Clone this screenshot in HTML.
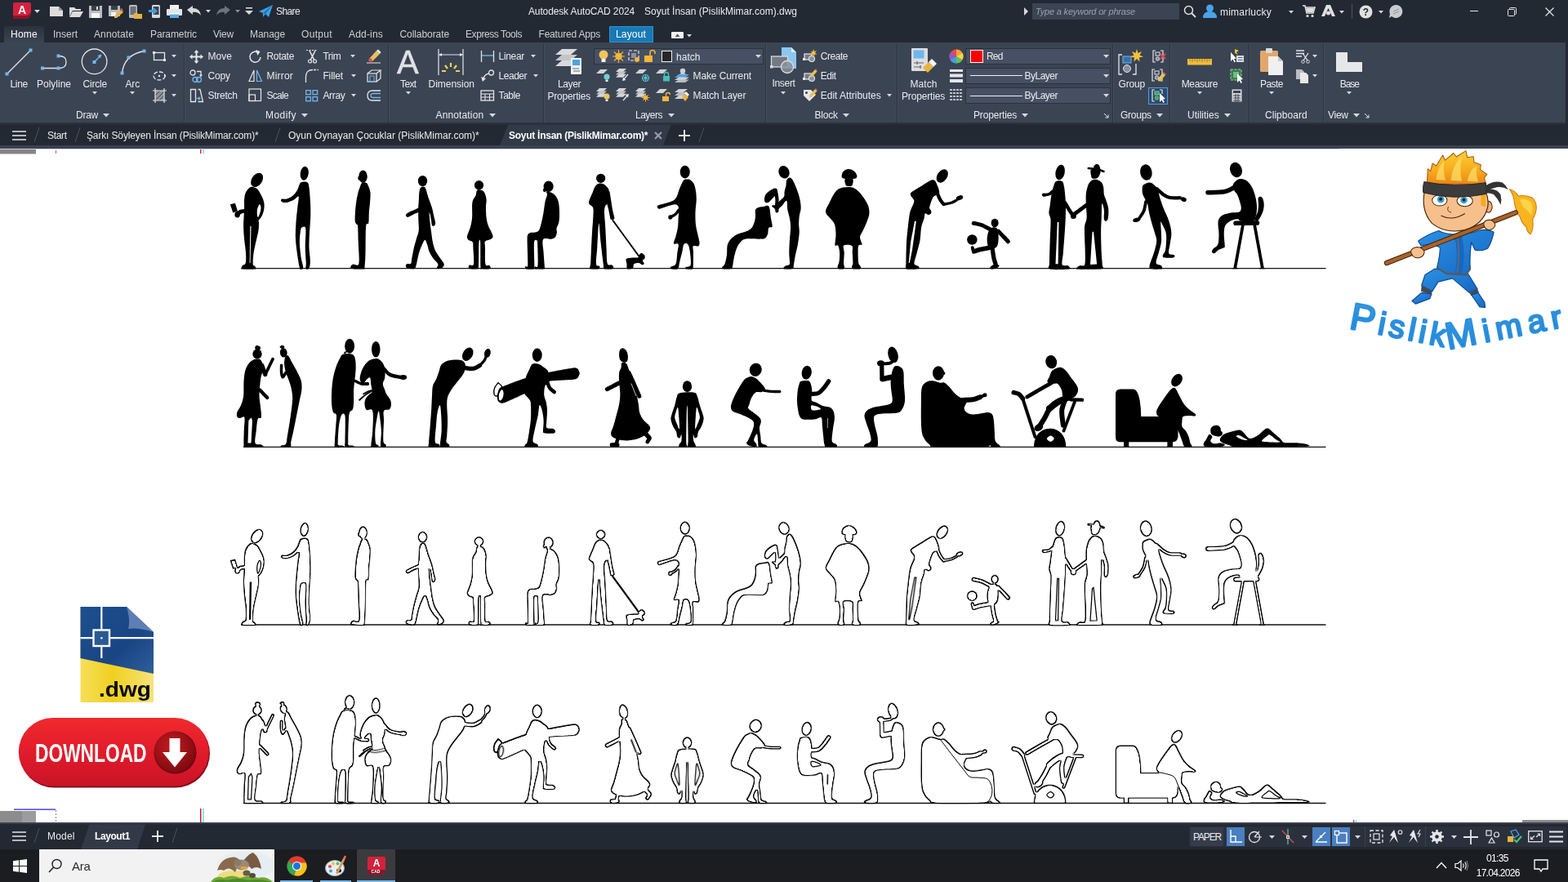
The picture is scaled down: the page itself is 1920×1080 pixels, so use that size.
<!DOCTYPE html>
<html><head><meta charset="utf-8"><title>Autodesk AutoCAD 2024 - Soyut İnsan (PislikMimar.com).dwg</title>
<style>
html,body{margin:0;padding:0;}
body{width:1920px;height:1080px;overflow:hidden;position:relative;background:#ffffff;font-family:"Liberation Sans",sans-serif;}
.t{position:absolute;white-space:nowrap;}
.r{position:absolute;}
.i{position:absolute;overflow:visible;}
</style></head><body>
<svg class="i" style="left:0;top:0" width="1920" height="1080" viewBox="0 0 1920 1080">
<defs><filter id="er" x="-5%" y="-5%" width="110%" height="110%"><feComponentTransfer><feFuncA type="linear" slope="2.2" intercept="-0.6"/></feComponentTransfer><feMorphology operator="erode" radius="10.5"/></filter></defs>
<path d="M295.5 328.7H1623.5" stroke="#111" stroke-width="1.3"/>
<path d="M298 547.3H1623.5" stroke="#111" stroke-width="1.3"/>
<path d="M295.5 765H1623.5" stroke="#111" stroke-width="1.3"/>
<path d="M298 983.5H1623.5" stroke="#111" stroke-width="1.3"/>
<g transform="translate(270 197) scale(0.125)"><g fill="#000" stroke="none"><ellipse cx="357" cy="187" rx="51" ry="76" transform="rotate(34 357 187)" /><path d="M298 255C284.2 258.3 271.7 272.5 262 285C252.3 297.5 245 310.8 240 330C235 349.2 233.2 376.7 232 400C230.8 423.3 233.7 443.3 233 470C232.3 496.7 229.3 531.7 228 560C226.7 588.3 224.3 606.7 225 640C225.7 673.3 228.2 716.7 232 760C235.8 803.3 245.7 860 248 900C250.3 940 251.5 979.2 246 1000C240.5 1020.8 221.8 1017.5 215 1025C208.2 1032.5 205 1039.2 205 1045C205 1050.8 193.3 1057.5 215 1060C236.7 1062.5 313.3 1062.5 335 1060C356.7 1057.5 345 1050 345 1045C345 1040 339.5 1035.8 335 1030C330.5 1024.2 319.7 1031.7 318 1010C316.3 988.3 319.7 938.3 325 900C330.3 861.7 342.2 816.7 350 780C357.8 743.3 367.7 710 372 680C376.3 650 376 615.8 376 600C376 584.2 367.2 595 372 585C376.8 575 396.2 557.5 405 540C413.8 522.5 421.2 500 425 480C428.8 460 429.7 438.3 428 420C426.3 401.7 421.3 386.7 415 370C408.7 353.3 397.5 334.2 390 320C382.5 305.8 377.5 294.2 370 285C362.5 275.8 357 270 345 265C333 260 311.8 251.7 298 255Z" /><path d="M240 490C233.3 491.2 211.3 492.8 200 497C188.7 501.2 176.7 512 172 515" fill="none" stroke="#000" stroke-width="40" stroke-linecap="round" stroke-linejoin="round"/><ellipse cx="165" cy="525" rx="26" ry="30" /><path d="M95 425L143 413L168 492L122 507Z" /><ellipse cx="822" cy="122" rx="40" ry="68" transform="rotate(8 822 122)" /><path d="M790 210C803.3 205 837 201.7 850 210C863 218.3 863 228.3 868 260C873 291.7 877.7 351.7 880 400C882.3 448.3 883.3 500 882 550C880.7 600 874.3 650 872 700C869.7 750 867 806.7 868 850C869 893.3 876.8 930 878 960C879.2 990 878.8 1013 875 1030C871.2 1047 861.7 1058.7 855 1062C848.3 1065.3 837.8 1060.3 835 1050C832.2 1039.7 838.8 1033.3 838 1000C837.2 966.7 830.5 900 830 850C829.5 800 835 733.3 835 700C835 666.7 835.8 658.3 830 650C824.2 641.7 807.5 645 800 650C792.5 655 789.2 655 785 680C780.8 705 774.2 755 775 800C775.8 845 784.2 910 790 950C795.8 990 809.2 1021.3 810 1040C810.8 1058.7 800.8 1061.2 795 1062C789.2 1062.8 782.5 1072 775 1045C767.5 1018 756.7 949.2 750 900C743.3 850.8 736.7 800 735 750C733.3 700 736.7 650 740 600C743.3 550 750.8 491.7 755 450C759.2 408.3 770.8 361.7 765 350C759.2 338.3 737.5 370.8 720 380C702.5 389.2 678.3 400.8 660 405C641.7 409.2 621.3 407.8 610 405C598.7 402.2 592.8 393.5 592 388C591.2 382.5 595.3 374.7 605 372C614.7 369.3 632.5 377.3 650 372C667.5 366.7 693.3 353.7 710 340C726.7 326.3 740 306.7 750 290C760 273.3 763.3 253.3 770 240C776.7 226.7 776.7 215 790 210Z" /><ellipse cx="1396" cy="153" rx="42" ry="62" /><path d="M1352 150C1348.2 149.5 1346.3 165.3 1347 172C1347.7 178.7 1352.2 189.5 1356 190C1359.8 190.5 1370.7 181.7 1370 175C1369.3 168.3 1355.8 150.5 1352 150Z" /><path d="M1385 215C1374.2 222.5 1371.2 244.2 1365 260C1358.8 275.8 1353.8 286.7 1348 310C1342.2 333.3 1334.7 368.3 1330 400C1325.3 431.7 1322 468.3 1320 500C1318 531.7 1315.5 569.2 1318 590C1320.5 610.8 1330.5 616.7 1335 625C1339.5 633.3 1342.5 610.8 1345 640C1347.5 669.2 1348.3 739.2 1350 800C1351.7 860.8 1363.3 969.7 1355 1005C1346.7 1040.3 1312.8 1007.8 1300 1012C1287.2 1016.2 1280.5 1022.8 1278 1030C1275.5 1037.2 1264.7 1050 1285 1055C1305.3 1060 1378.8 1062.5 1400 1060C1421.2 1057.5 1408.7 1066.7 1412 1040C1415.3 1013.3 1417.8 966.7 1420 900C1422.2 833.3 1420 688.3 1425 640C1430 591.7 1445 633.3 1450 610C1455 586.7 1452.5 535 1455 500C1457.5 465 1462.8 431.7 1465 400C1467.2 368.3 1470.5 335 1468 310C1465.5 285 1456.3 265.8 1450 250C1443.7 234.2 1440.8 220.8 1430 215C1419.2 209.2 1395.8 207.5 1385 215Z" /></g><path d="M385 425C389 427.5 395.2 442.5 396 455C396.8 467.5 394.7 483.8 390 500C385.3 516.2 373.3 549.5 368 552C362.7 554.5 359.2 528.7 358 515C356.8 501.3 358.7 482.5 361 470C363.3 457.5 368 447.5 372 440C376 432.5 381 422.5 385 425Z" fill="#fff"/><path d="M291 640L300 640L292 1000L285 1000Z" fill="#fff"/></g>
<g transform="translate(270 633.2) scale(0.125)"><g fill="#000" stroke="#000" stroke-width="3" stroke-linejoin="round"><ellipse cx="357" cy="187" rx="51" ry="76" transform="rotate(34 357 187)" /><path d="M298 255C284.2 258.3 271.7 272.5 262 285C252.3 297.5 245 310.8 240 330C235 349.2 233.2 376.7 232 400C230.8 423.3 233.7 443.3 233 470C232.3 496.7 229.3 531.7 228 560C226.7 588.3 224.3 606.7 225 640C225.7 673.3 228.2 716.7 232 760C235.8 803.3 245.7 860 248 900C250.3 940 251.5 979.2 246 1000C240.5 1020.8 221.8 1017.5 215 1025C208.2 1032.5 205 1039.2 205 1045C205 1050.8 193.3 1057.5 215 1060C236.7 1062.5 313.3 1062.5 335 1060C356.7 1057.5 345 1050 345 1045C345 1040 339.5 1035.8 335 1030C330.5 1024.2 319.7 1031.7 318 1010C316.3 988.3 319.7 938.3 325 900C330.3 861.7 342.2 816.7 350 780C357.8 743.3 367.7 710 372 680C376.3 650 376 615.8 376 600C376 584.2 367.2 595 372 585C376.8 575 396.2 557.5 405 540C413.8 522.5 421.2 500 425 480C428.8 460 429.7 438.3 428 420C426.3 401.7 421.3 386.7 415 370C408.7 353.3 397.5 334.2 390 320C382.5 305.8 377.5 294.2 370 285C362.5 275.8 357 270 345 265C333 260 311.8 251.7 298 255Z" /><path d="M240 490C233.3 491.2 211.3 492.8 200 497C188.7 501.2 176.7 512 172 515" fill="none" stroke="#000" stroke-width="43" stroke-linecap="round" stroke-linejoin="round"/><ellipse cx="165" cy="525" rx="26" ry="30" /><path d="M95 425L143 413L168 492L122 507Z" /><ellipse cx="822" cy="122" rx="40" ry="68" transform="rotate(8 822 122)" /><path d="M790 210C803.3 205 837 201.7 850 210C863 218.3 863 228.3 868 260C873 291.7 877.7 351.7 880 400C882.3 448.3 883.3 500 882 550C880.7 600 874.3 650 872 700C869.7 750 867 806.7 868 850C869 893.3 876.8 930 878 960C879.2 990 878.8 1013 875 1030C871.2 1047 861.7 1058.7 855 1062C848.3 1065.3 837.8 1060.3 835 1050C832.2 1039.7 838.8 1033.3 838 1000C837.2 966.7 830.5 900 830 850C829.5 800 835 733.3 835 700C835 666.7 835.8 658.3 830 650C824.2 641.7 807.5 645 800 650C792.5 655 789.2 655 785 680C780.8 705 774.2 755 775 800C775.8 845 784.2 910 790 950C795.8 990 809.2 1021.3 810 1040C810.8 1058.7 800.8 1061.2 795 1062C789.2 1062.8 782.5 1072 775 1045C767.5 1018 756.7 949.2 750 900C743.3 850.8 736.7 800 735 750C733.3 700 736.7 650 740 600C743.3 550 750.8 491.7 755 450C759.2 408.3 770.8 361.7 765 350C759.2 338.3 737.5 370.8 720 380C702.5 389.2 678.3 400.8 660 405C641.7 409.2 621.3 407.8 610 405C598.7 402.2 592.8 393.5 592 388C591.2 382.5 595.3 374.7 605 372C614.7 369.3 632.5 377.3 650 372C667.5 366.7 693.3 353.7 710 340C726.7 326.3 740 306.7 750 290C760 273.3 763.3 253.3 770 240C776.7 226.7 776.7 215 790 210Z" /><ellipse cx="1396" cy="153" rx="42" ry="62" /><path d="M1352 150C1348.2 149.5 1346.3 165.3 1347 172C1347.7 178.7 1352.2 189.5 1356 190C1359.8 190.5 1370.7 181.7 1370 175C1369.3 168.3 1355.8 150.5 1352 150Z" /><path d="M1385 215C1374.2 222.5 1371.2 244.2 1365 260C1358.8 275.8 1353.8 286.7 1348 310C1342.2 333.3 1334.7 368.3 1330 400C1325.3 431.7 1322 468.3 1320 500C1318 531.7 1315.5 569.2 1318 590C1320.5 610.8 1330.5 616.7 1335 625C1339.5 633.3 1342.5 610.8 1345 640C1347.5 669.2 1348.3 739.2 1350 800C1351.7 860.8 1363.3 969.7 1355 1005C1346.7 1040.3 1312.8 1007.8 1300 1012C1287.2 1016.2 1280.5 1022.8 1278 1030C1275.5 1037.2 1264.7 1050 1285 1055C1305.3 1060 1378.8 1062.5 1400 1060C1421.2 1057.5 1408.7 1066.7 1412 1040C1415.3 1013.3 1417.8 966.7 1420 900C1422.2 833.3 1420 688.3 1425 640C1430 591.7 1445 633.3 1450 610C1455 586.7 1452.5 535 1455 500C1457.5 465 1462.8 431.7 1465 400C1467.2 368.3 1470.5 335 1468 310C1465.5 285 1456.3 265.8 1450 250C1443.7 234.2 1440.8 220.8 1430 215C1419.2 209.2 1395.8 207.5 1385 215Z" /></g><g fill="#fff" stroke="none" filter="url(#er)"><ellipse cx="357" cy="187" rx="51" ry="76" transform="rotate(34 357 187)" /><path d="M298 255C284.2 258.3 271.7 272.5 262 285C252.3 297.5 245 310.8 240 330C235 349.2 233.2 376.7 232 400C230.8 423.3 233.7 443.3 233 470C232.3 496.7 229.3 531.7 228 560C226.7 588.3 224.3 606.7 225 640C225.7 673.3 228.2 716.7 232 760C235.8 803.3 245.7 860 248 900C250.3 940 251.5 979.2 246 1000C240.5 1020.8 221.8 1017.5 215 1025C208.2 1032.5 205 1039.2 205 1045C205 1050.8 193.3 1057.5 215 1060C236.7 1062.5 313.3 1062.5 335 1060C356.7 1057.5 345 1050 345 1045C345 1040 339.5 1035.8 335 1030C330.5 1024.2 319.7 1031.7 318 1010C316.3 988.3 319.7 938.3 325 900C330.3 861.7 342.2 816.7 350 780C357.8 743.3 367.7 710 372 680C376.3 650 376 615.8 376 600C376 584.2 367.2 595 372 585C376.8 575 396.2 557.5 405 540C413.8 522.5 421.2 500 425 480C428.8 460 429.7 438.3 428 420C426.3 401.7 421.3 386.7 415 370C408.7 353.3 397.5 334.2 390 320C382.5 305.8 377.5 294.2 370 285C362.5 275.8 357 270 345 265C333 260 311.8 251.7 298 255Z" /><path d="M240 490C233.3 491.2 211.3 492.8 200 497C188.7 501.2 176.7 512 172 515" fill="none" stroke="#fff" stroke-width="40" stroke-linecap="round" stroke-linejoin="round"/><ellipse cx="165" cy="525" rx="26" ry="30" /><path d="M95 425L143 413L168 492L122 507Z" /><ellipse cx="822" cy="122" rx="40" ry="68" transform="rotate(8 822 122)" /><path d="M790 210C803.3 205 837 201.7 850 210C863 218.3 863 228.3 868 260C873 291.7 877.7 351.7 880 400C882.3 448.3 883.3 500 882 550C880.7 600 874.3 650 872 700C869.7 750 867 806.7 868 850C869 893.3 876.8 930 878 960C879.2 990 878.8 1013 875 1030C871.2 1047 861.7 1058.7 855 1062C848.3 1065.3 837.8 1060.3 835 1050C832.2 1039.7 838.8 1033.3 838 1000C837.2 966.7 830.5 900 830 850C829.5 800 835 733.3 835 700C835 666.7 835.8 658.3 830 650C824.2 641.7 807.5 645 800 650C792.5 655 789.2 655 785 680C780.8 705 774.2 755 775 800C775.8 845 784.2 910 790 950C795.8 990 809.2 1021.3 810 1040C810.8 1058.7 800.8 1061.2 795 1062C789.2 1062.8 782.5 1072 775 1045C767.5 1018 756.7 949.2 750 900C743.3 850.8 736.7 800 735 750C733.3 700 736.7 650 740 600C743.3 550 750.8 491.7 755 450C759.2 408.3 770.8 361.7 765 350C759.2 338.3 737.5 370.8 720 380C702.5 389.2 678.3 400.8 660 405C641.7 409.2 621.3 407.8 610 405C598.7 402.2 592.8 393.5 592 388C591.2 382.5 595.3 374.7 605 372C614.7 369.3 632.5 377.3 650 372C667.5 366.7 693.3 353.7 710 340C726.7 326.3 740 306.7 750 290C760 273.3 763.3 253.3 770 240C776.7 226.7 776.7 215 790 210Z" /><ellipse cx="1396" cy="153" rx="42" ry="62" /><path d="M1352 150C1348.2 149.5 1346.3 165.3 1347 172C1347.7 178.7 1352.2 189.5 1356 190C1359.8 190.5 1370.7 181.7 1370 175C1369.3 168.3 1355.8 150.5 1352 150Z" /><path d="M1385 215C1374.2 222.5 1371.2 244.2 1365 260C1358.8 275.8 1353.8 286.7 1348 310C1342.2 333.3 1334.7 368.3 1330 400C1325.3 431.7 1322 468.3 1320 500C1318 531.7 1315.5 569.2 1318 590C1320.5 610.8 1330.5 616.7 1335 625C1339.5 633.3 1342.5 610.8 1345 640C1347.5 669.2 1348.3 739.2 1350 800C1351.7 860.8 1363.3 969.7 1355 1005C1346.7 1040.3 1312.8 1007.8 1300 1012C1287.2 1016.2 1280.5 1022.8 1278 1030C1275.5 1037.2 1264.7 1050 1285 1055C1305.3 1060 1378.8 1062.5 1400 1060C1421.2 1057.5 1408.7 1066.7 1412 1040C1415.3 1013.3 1417.8 966.7 1420 900C1422.2 833.3 1420 688.3 1425 640C1430 591.7 1445 633.3 1450 610C1455 586.7 1452.5 535 1455 500C1457.5 465 1462.8 431.7 1465 400C1467.2 368.3 1470.5 335 1468 310C1465.5 285 1456.3 265.8 1450 250C1443.7 234.2 1440.8 220.8 1430 215C1419.2 209.2 1395.8 207.5 1385 215Z" /></g><path d="M385 425C389 427.5 395.2 442.5 396 455C396.8 467.5 394.7 483.8 390 500C385.3 516.2 373.3 549.5 368 552C362.7 554.5 359.2 528.7 358 515C356.8 501.3 358.7 482.5 361 470C363.3 457.5 368 447.5 372 440C376 432.5 381 422.5 385 425Z" fill="#fff" stroke="#000" stroke-width="10"/><path d="M291 640L300 640L292 1000L285 1000Z" fill="#fff" stroke="#000" stroke-width="10"/></g>
<g transform="translate(480 197) scale(0.125)"><g fill="#000" stroke="none"><ellipse cx="300" cy="196" rx="45" ry="53" /><path d="M285 258C276 265 271.8 276.3 268 300C264.2 323.7 263.7 375 262 400C260.3 425 258.7 423.3 258 450C257.3 476.7 257.3 521.7 258 560C258.7 598.3 265 646.7 262 680C259 713.3 247.8 731.7 240 760C232.2 788.3 222.5 818.3 215 850C207.5 881.7 200 924.2 195 950C190 975.8 193.3 995 185 1005C176.7 1015 153.3 1005.8 145 1010C136.7 1014.2 134.2 1023.3 135 1030C135.8 1036.7 136.7 1045.3 150 1050C163.3 1054.7 200.8 1061.3 215 1058C229.2 1054.7 226.7 1056.3 235 1030C243.3 1003.7 254.2 936.7 265 900C275.8 863.3 290 830.8 300 810C310 789.2 317.5 773.3 325 775C332.5 776.7 338.3 800.8 345 820C351.7 839.2 355.8 868.3 365 890C374.2 911.7 385.8 930 400 950C414.2 970 443.3 994.2 450 1010C456.7 1025.8 438.3 1037 440 1045C441.7 1053 450 1058.8 460 1058C470 1057.2 492 1048.8 500 1040C508 1031.2 513 1020 508 1005C503 990 483.8 970.8 470 950C456.2 929.2 436.7 905 425 880C413.3 855 406.7 830 400 800C393.3 770 389.7 733.3 385 700C380.3 666.7 375.3 630 372 600C368.7 570 369.5 553.3 365 520C360.5 486.7 350.8 436.7 345 400C339.2 363.3 333.8 323.7 330 300C326.2 276.3 329.5 265 322 258C314.5 251 294 251 285 258Z" /><path d="M268 478C256.7 483 218.8 499 200 508C181.2 517 162.5 528 155 532" fill="none" stroke="#000" stroke-width="38" stroke-linecap="round" stroke-linejoin="round"/><path d="M325 270C329.2 253.3 348.8 338.3 360 370C371.2 401.7 383.3 430 392 460C400.7 490 406.5 525.8 412 550C417.5 574.2 424.5 590.8 425 605C425.5 619.2 420.5 630.5 415 635C409.5 639.5 397.2 641.2 392 632C386.8 622.8 387.3 598.7 384 580C380.7 561.3 376.8 533.3 372 520C367.2 506.7 361.2 508.3 355 500C348.8 491.7 340 508.3 335 470C330 431.7 320.8 286.7 325 270Z" /><ellipse cx="852" cy="238" rx="45" ry="46" /><path d="M835 285C824.2 293.3 826.7 324.2 820 340C813.3 355.8 800.8 365 795 380C789.2 395 786.7 401.7 785 430C783.3 458.3 787.5 515 785 550C782.5 585 776.7 613.3 770 640C763.3 666.7 750.8 692.5 745 710C739.2 727.5 734.2 734.2 735 745C735.8 755.8 740.8 766.7 750 775C759.2 783.3 782.5 782.5 790 795C797.5 807.5 793.3 814.2 795 850C796.7 885.8 805.8 981.7 800 1010C794.2 1038.3 768.3 1015 760 1020C751.7 1025 749.2 1033.7 750 1040C750.8 1046.3 750 1055 765 1058C780 1061 826.2 1061 840 1058C853.8 1055 846.3 1066.3 848 1040C849.7 1013.7 849.3 940.8 850 900C850.7 859.2 849.5 812.5 852 795C854.5 777.5 862.3 754.2 865 795C867.7 835.8 865.5 996.2 868 1040C870.5 1083.8 865.5 1055 880 1058C894.5 1061 940.8 1061 955 1058C969.2 1055 965.8 1046 965 1040C964.2 1034 958.3 1027 950 1022C941.7 1017 921.3 1038.7 915 1010C908.7 981.3 912.5 886.7 912 850C911.5 813.3 904 803.3 912 790C920 776.7 947.3 777.5 960 770C972.7 762.5 985.5 756.7 988 745C990.5 733.3 982.2 717.5 975 700C967.8 682.5 953.3 663.3 945 640C936.7 616.7 929.2 591.7 925 560C920.8 528.3 920 480 920 450C920 420 926.7 401.7 925 380C923.3 358.3 916.7 335 910 320C903.3 305 897.5 295.8 885 290C872.5 284.2 845.8 276.7 835 285Z" /><ellipse cx="1533" cy="250" rx="48" ry="55" /><path d="M1488 265C1483 266.2 1478.8 285.3 1480 292C1481.2 298.7 1490 306.2 1495 305C1500 303.8 1511.2 291.7 1510 285C1508.8 278.3 1493 263.8 1488 265Z" /><path d="M1510 300C1503.3 303.3 1521.7 313.3 1520 330C1518.3 346.7 1505.8 371.7 1500 400C1494.2 428.3 1490.8 466.7 1485 500C1479.2 533.3 1472.5 570 1465 600C1457.5 630 1450.8 663.3 1440 680C1429.2 696.7 1415 695.8 1400 700C1385 704.2 1362 700 1350 705C1338 710 1332.2 714.2 1328 730C1323.8 745.8 1324.7 751.7 1325 800C1325.3 848.3 1332.5 981.7 1330 1020C1327.5 1058.3 1314.2 1025 1310 1030C1305.8 1035 1303.3 1045 1305 1050C1306.7 1055 1306.7 1058.3 1320 1060C1333.3 1061.7 1372.5 1063.3 1385 1060C1397.5 1056.7 1393.8 1083.3 1395 1040C1396.2 996.7 1387.8 843.3 1392 800C1396.2 756.7 1414.5 780 1420 780C1425.5 780 1423.7 760 1425 800C1426.3 840 1432.2 980.8 1428 1020C1423.8 1059.2 1404.7 1029.2 1400 1035C1395.3 1040.8 1397.5 1050.8 1400 1055C1402.5 1059.2 1400 1059.5 1415 1060C1430 1060.5 1476.7 1061.3 1490 1058C1503.3 1054.7 1495.8 1066.3 1495 1040C1494.2 1013.7 1487.5 945 1485 900C1482.5 855 1467.5 792.5 1480 770C1492.5 747.5 1540 769.2 1560 765C1580 760.8 1590.8 755.8 1600 745C1609.2 734.2 1613 714.2 1615 700C1617 685.8 1608.7 676.7 1612 660C1615.3 643.3 1630.3 626.7 1635 600C1639.7 573.3 1640.8 533.3 1640 500C1639.2 466.7 1636.7 426.7 1630 400C1623.3 373.3 1611.7 355 1600 340C1588.3 325 1575 316.7 1560 310C1545 303.3 1516.7 296.7 1510 300Z" /></g></g>
<g transform="translate(480 633.2) scale(0.125)"><g fill="#000" stroke="#000" stroke-width="3" stroke-linejoin="round"><ellipse cx="300" cy="196" rx="45" ry="53" /><path d="M285 258C276 265 271.8 276.3 268 300C264.2 323.7 263.7 375 262 400C260.3 425 258.7 423.3 258 450C257.3 476.7 257.3 521.7 258 560C258.7 598.3 265 646.7 262 680C259 713.3 247.8 731.7 240 760C232.2 788.3 222.5 818.3 215 850C207.5 881.7 200 924.2 195 950C190 975.8 193.3 995 185 1005C176.7 1015 153.3 1005.8 145 1010C136.7 1014.2 134.2 1023.3 135 1030C135.8 1036.7 136.7 1045.3 150 1050C163.3 1054.7 200.8 1061.3 215 1058C229.2 1054.7 226.7 1056.3 235 1030C243.3 1003.7 254.2 936.7 265 900C275.8 863.3 290 830.8 300 810C310 789.2 317.5 773.3 325 775C332.5 776.7 338.3 800.8 345 820C351.7 839.2 355.8 868.3 365 890C374.2 911.7 385.8 930 400 950C414.2 970 443.3 994.2 450 1010C456.7 1025.8 438.3 1037 440 1045C441.7 1053 450 1058.8 460 1058C470 1057.2 492 1048.8 500 1040C508 1031.2 513 1020 508 1005C503 990 483.8 970.8 470 950C456.2 929.2 436.7 905 425 880C413.3 855 406.7 830 400 800C393.3 770 389.7 733.3 385 700C380.3 666.7 375.3 630 372 600C368.7 570 369.5 553.3 365 520C360.5 486.7 350.8 436.7 345 400C339.2 363.3 333.8 323.7 330 300C326.2 276.3 329.5 265 322 258C314.5 251 294 251 285 258Z" /><path d="M268 478C256.7 483 218.8 499 200 508C181.2 517 162.5 528 155 532" fill="none" stroke="#000" stroke-width="41" stroke-linecap="round" stroke-linejoin="round"/><path d="M325 270C329.2 253.3 348.8 338.3 360 370C371.2 401.7 383.3 430 392 460C400.7 490 406.5 525.8 412 550C417.5 574.2 424.5 590.8 425 605C425.5 619.2 420.5 630.5 415 635C409.5 639.5 397.2 641.2 392 632C386.8 622.8 387.3 598.7 384 580C380.7 561.3 376.8 533.3 372 520C367.2 506.7 361.2 508.3 355 500C348.8 491.7 340 508.3 335 470C330 431.7 320.8 286.7 325 270Z" /><ellipse cx="852" cy="238" rx="45" ry="46" /><path d="M835 285C824.2 293.3 826.7 324.2 820 340C813.3 355.8 800.8 365 795 380C789.2 395 786.7 401.7 785 430C783.3 458.3 787.5 515 785 550C782.5 585 776.7 613.3 770 640C763.3 666.7 750.8 692.5 745 710C739.2 727.5 734.2 734.2 735 745C735.8 755.8 740.8 766.7 750 775C759.2 783.3 782.5 782.5 790 795C797.5 807.5 793.3 814.2 795 850C796.7 885.8 805.8 981.7 800 1010C794.2 1038.3 768.3 1015 760 1020C751.7 1025 749.2 1033.7 750 1040C750.8 1046.3 750 1055 765 1058C780 1061 826.2 1061 840 1058C853.8 1055 846.3 1066.3 848 1040C849.7 1013.7 849.3 940.8 850 900C850.7 859.2 849.5 812.5 852 795C854.5 777.5 862.3 754.2 865 795C867.7 835.8 865.5 996.2 868 1040C870.5 1083.8 865.5 1055 880 1058C894.5 1061 940.8 1061 955 1058C969.2 1055 965.8 1046 965 1040C964.2 1034 958.3 1027 950 1022C941.7 1017 921.3 1038.7 915 1010C908.7 981.3 912.5 886.7 912 850C911.5 813.3 904 803.3 912 790C920 776.7 947.3 777.5 960 770C972.7 762.5 985.5 756.7 988 745C990.5 733.3 982.2 717.5 975 700C967.8 682.5 953.3 663.3 945 640C936.7 616.7 929.2 591.7 925 560C920.8 528.3 920 480 920 450C920 420 926.7 401.7 925 380C923.3 358.3 916.7 335 910 320C903.3 305 897.5 295.8 885 290C872.5 284.2 845.8 276.7 835 285Z" /><ellipse cx="1533" cy="250" rx="48" ry="55" /><path d="M1488 265C1483 266.2 1478.8 285.3 1480 292C1481.2 298.7 1490 306.2 1495 305C1500 303.8 1511.2 291.7 1510 285C1508.8 278.3 1493 263.8 1488 265Z" /><path d="M1510 300C1503.3 303.3 1521.7 313.3 1520 330C1518.3 346.7 1505.8 371.7 1500 400C1494.2 428.3 1490.8 466.7 1485 500C1479.2 533.3 1472.5 570 1465 600C1457.5 630 1450.8 663.3 1440 680C1429.2 696.7 1415 695.8 1400 700C1385 704.2 1362 700 1350 705C1338 710 1332.2 714.2 1328 730C1323.8 745.8 1324.7 751.7 1325 800C1325.3 848.3 1332.5 981.7 1330 1020C1327.5 1058.3 1314.2 1025 1310 1030C1305.8 1035 1303.3 1045 1305 1050C1306.7 1055 1306.7 1058.3 1320 1060C1333.3 1061.7 1372.5 1063.3 1385 1060C1397.5 1056.7 1393.8 1083.3 1395 1040C1396.2 996.7 1387.8 843.3 1392 800C1396.2 756.7 1414.5 780 1420 780C1425.5 780 1423.7 760 1425 800C1426.3 840 1432.2 980.8 1428 1020C1423.8 1059.2 1404.7 1029.2 1400 1035C1395.3 1040.8 1397.5 1050.8 1400 1055C1402.5 1059.2 1400 1059.5 1415 1060C1430 1060.5 1476.7 1061.3 1490 1058C1503.3 1054.7 1495.8 1066.3 1495 1040C1494.2 1013.7 1487.5 945 1485 900C1482.5 855 1467.5 792.5 1480 770C1492.5 747.5 1540 769.2 1560 765C1580 760.8 1590.8 755.8 1600 745C1609.2 734.2 1613 714.2 1615 700C1617 685.8 1608.7 676.7 1612 660C1615.3 643.3 1630.3 626.7 1635 600C1639.7 573.3 1640.8 533.3 1640 500C1639.2 466.7 1636.7 426.7 1630 400C1623.3 373.3 1611.7 355 1600 340C1588.3 325 1575 316.7 1560 310C1545 303.3 1516.7 296.7 1510 300Z" /></g><g fill="#fff" stroke="none" filter="url(#er)"><ellipse cx="300" cy="196" rx="45" ry="53" /><path d="M285 258C276 265 271.8 276.3 268 300C264.2 323.7 263.7 375 262 400C260.3 425 258.7 423.3 258 450C257.3 476.7 257.3 521.7 258 560C258.7 598.3 265 646.7 262 680C259 713.3 247.8 731.7 240 760C232.2 788.3 222.5 818.3 215 850C207.5 881.7 200 924.2 195 950C190 975.8 193.3 995 185 1005C176.7 1015 153.3 1005.8 145 1010C136.7 1014.2 134.2 1023.3 135 1030C135.8 1036.7 136.7 1045.3 150 1050C163.3 1054.7 200.8 1061.3 215 1058C229.2 1054.7 226.7 1056.3 235 1030C243.3 1003.7 254.2 936.7 265 900C275.8 863.3 290 830.8 300 810C310 789.2 317.5 773.3 325 775C332.5 776.7 338.3 800.8 345 820C351.7 839.2 355.8 868.3 365 890C374.2 911.7 385.8 930 400 950C414.2 970 443.3 994.2 450 1010C456.7 1025.8 438.3 1037 440 1045C441.7 1053 450 1058.8 460 1058C470 1057.2 492 1048.8 500 1040C508 1031.2 513 1020 508 1005C503 990 483.8 970.8 470 950C456.2 929.2 436.7 905 425 880C413.3 855 406.7 830 400 800C393.3 770 389.7 733.3 385 700C380.3 666.7 375.3 630 372 600C368.7 570 369.5 553.3 365 520C360.5 486.7 350.8 436.7 345 400C339.2 363.3 333.8 323.7 330 300C326.2 276.3 329.5 265 322 258C314.5 251 294 251 285 258Z" /><path d="M268 478C256.7 483 218.8 499 200 508C181.2 517 162.5 528 155 532" fill="none" stroke="#fff" stroke-width="38" stroke-linecap="round" stroke-linejoin="round"/><path d="M325 270C329.2 253.3 348.8 338.3 360 370C371.2 401.7 383.3 430 392 460C400.7 490 406.5 525.8 412 550C417.5 574.2 424.5 590.8 425 605C425.5 619.2 420.5 630.5 415 635C409.5 639.5 397.2 641.2 392 632C386.8 622.8 387.3 598.7 384 580C380.7 561.3 376.8 533.3 372 520C367.2 506.7 361.2 508.3 355 500C348.8 491.7 340 508.3 335 470C330 431.7 320.8 286.7 325 270Z" /><ellipse cx="852" cy="238" rx="45" ry="46" /><path d="M835 285C824.2 293.3 826.7 324.2 820 340C813.3 355.8 800.8 365 795 380C789.2 395 786.7 401.7 785 430C783.3 458.3 787.5 515 785 550C782.5 585 776.7 613.3 770 640C763.3 666.7 750.8 692.5 745 710C739.2 727.5 734.2 734.2 735 745C735.8 755.8 740.8 766.7 750 775C759.2 783.3 782.5 782.5 790 795C797.5 807.5 793.3 814.2 795 850C796.7 885.8 805.8 981.7 800 1010C794.2 1038.3 768.3 1015 760 1020C751.7 1025 749.2 1033.7 750 1040C750.8 1046.3 750 1055 765 1058C780 1061 826.2 1061 840 1058C853.8 1055 846.3 1066.3 848 1040C849.7 1013.7 849.3 940.8 850 900C850.7 859.2 849.5 812.5 852 795C854.5 777.5 862.3 754.2 865 795C867.7 835.8 865.5 996.2 868 1040C870.5 1083.8 865.5 1055 880 1058C894.5 1061 940.8 1061 955 1058C969.2 1055 965.8 1046 965 1040C964.2 1034 958.3 1027 950 1022C941.7 1017 921.3 1038.7 915 1010C908.7 981.3 912.5 886.7 912 850C911.5 813.3 904 803.3 912 790C920 776.7 947.3 777.5 960 770C972.7 762.5 985.5 756.7 988 745C990.5 733.3 982.2 717.5 975 700C967.8 682.5 953.3 663.3 945 640C936.7 616.7 929.2 591.7 925 560C920.8 528.3 920 480 920 450C920 420 926.7 401.7 925 380C923.3 358.3 916.7 335 910 320C903.3 305 897.5 295.8 885 290C872.5 284.2 845.8 276.7 835 285Z" /><ellipse cx="1533" cy="250" rx="48" ry="55" /><path d="M1488 265C1483 266.2 1478.8 285.3 1480 292C1481.2 298.7 1490 306.2 1495 305C1500 303.8 1511.2 291.7 1510 285C1508.8 278.3 1493 263.8 1488 265Z" /><path d="M1510 300C1503.3 303.3 1521.7 313.3 1520 330C1518.3 346.7 1505.8 371.7 1500 400C1494.2 428.3 1490.8 466.7 1485 500C1479.2 533.3 1472.5 570 1465 600C1457.5 630 1450.8 663.3 1440 680C1429.2 696.7 1415 695.8 1400 700C1385 704.2 1362 700 1350 705C1338 710 1332.2 714.2 1328 730C1323.8 745.8 1324.7 751.7 1325 800C1325.3 848.3 1332.5 981.7 1330 1020C1327.5 1058.3 1314.2 1025 1310 1030C1305.8 1035 1303.3 1045 1305 1050C1306.7 1055 1306.7 1058.3 1320 1060C1333.3 1061.7 1372.5 1063.3 1385 1060C1397.5 1056.7 1393.8 1083.3 1395 1040C1396.2 996.7 1387.8 843.3 1392 800C1396.2 756.7 1414.5 780 1420 780C1425.5 780 1423.7 760 1425 800C1426.3 840 1432.2 980.8 1428 1020C1423.8 1059.2 1404.7 1029.2 1400 1035C1395.3 1040.8 1397.5 1050.8 1400 1055C1402.5 1059.2 1400 1059.5 1415 1060C1430 1060.5 1476.7 1061.3 1490 1058C1503.3 1054.7 1495.8 1066.3 1495 1040C1494.2 1013.7 1487.5 945 1485 900C1482.5 855 1467.5 792.5 1480 770C1492.5 747.5 1540 769.2 1560 765C1580 760.8 1590.8 755.8 1600 745C1609.2 734.2 1613 714.2 1615 700C1617 685.8 1608.7 676.7 1612 660C1615.3 643.3 1630.3 626.7 1635 600C1639.7 573.3 1640.8 533.3 1640 500C1639.2 466.7 1636.7 426.7 1630 400C1623.3 373.3 1611.7 355 1600 340C1588.3 325 1575 316.7 1560 310C1545 303.3 1516.7 296.7 1510 300Z" /></g></g>
<g transform="translate(700 197) scale(0.125)"><g fill="#000" stroke="none"><ellipse cx="285" cy="170" rx="45" ry="45" /><path d="M265 222C251.7 226.2 240 235.3 230 250C220 264.7 215 285.8 205 310C195 334.2 175 375.8 170 395C165 414.2 168.3 414.2 175 425C181.7 435.8 204.2 437.5 210 460C215.8 482.5 211.7 520 210 560C208.3 600 203.3 643.3 200 700C196.7 756.7 192.5 848.3 190 900C187.5 951.7 187 986.7 185 1010C183 1033.3 178 1032 178 1040C178 1048 170.5 1055 185 1058C199.5 1061 250.5 1062.7 265 1058C279.5 1053.3 276.2 1038 272 1030C267.8 1022 243.7 1040 240 1010C236.3 980 246.3 911.7 250 850C253.7 788.3 258.7 676.7 262 640C265.3 603.3 266.2 603.3 270 630C273.8 656.7 278.3 736.7 285 800C291.7 863.3 305 968.3 310 1010C315 1051.7 311.7 1041.7 315 1050C318.3 1058.3 315.8 1058.7 330 1060C344.2 1061.3 387 1062.2 400 1058C413 1053.8 409.7 1041.7 408 1035C406.3 1028.3 399.7 1023 390 1018C380.3 1013 358.3 1033 350 1005C341.7 977 343.3 909.2 340 850C336.7 790.8 333.3 708.3 330 650C326.7 591.7 320 535 320 500C320 465 325.8 453.3 330 440C334.2 426.7 339.2 443.3 345 420C350.8 396.7 364.2 326.7 365 300C365.8 273.3 359.2 272.5 350 260C340.8 247.5 324.2 231.3 310 225C295.8 218.7 278.3 217.8 265 222Z" /><path d="M350 290L372 300L400 480L420 560L405 582L380 572L362 480L338 390Z" /><path d="M405 585L660 935" fill="none" stroke="#000" stroke-width="15" stroke-linecap="round" stroke-linejoin="round"/><path d="M535 960C545 949.7 580.8 950.5 600 948C619.2 945.5 639.2 950.5 650 945C660.8 939.5 658.3 921.7 665 915C671.7 908.3 681.7 903.3 690 905C698.3 906.7 710.8 916.7 715 925C719.2 933.3 718.3 946.7 715 955C711.7 963.3 695.8 966.7 695 975C694.2 983.3 710.8 997.8 710 1005C709.2 1012.2 698.3 1018.8 690 1018C681.7 1017.2 673.3 1001.3 660 1000C646.7 998.7 620 1001.7 610 1010C600 1018.3 610.8 1042 600 1050C589.2 1058 555 1064.7 545 1058C535 1051.3 541.7 1026.3 540 1010C538.3 993.7 525 970.3 535 960Z" /><ellipse cx="1110" cy="108" rx="48" ry="63" /><path d="M1100 185C1090.8 193.3 1083.3 212.5 1075 230C1066.7 247.5 1057.5 270 1050 290C1042.5 310 1038.3 334.2 1030 350C1021.7 365.8 1013.3 375.8 1000 385C986.7 394.2 970 398.3 950 405C930 411.7 897.5 420 880 425C862.5 430 851.7 430 845 435C838.3 440 838.3 449.2 840 455C841.7 460.8 847.5 468.8 855 470C862.5 471.2 869.2 467 885 462C900.8 457 929.2 446.2 950 440C970.8 433.8 995 425 1010 425C1025 425 1033.3 430.8 1040 440C1046.7 449.2 1049.2 460 1050 480C1050.8 500 1046.7 531.7 1045 560C1043.3 588.3 1044.2 620 1040 650C1035.8 680 1026.7 713.3 1020 740C1013.3 766.7 995.8 797.5 1000 810C1004.2 822.5 1039.2 800 1045 815C1050.8 830 1039.2 867.5 1035 900C1030.8 932.5 1030 987.5 1020 1010C1010 1032.5 984.2 1028.3 975 1035C965.8 1041.7 963.3 1045.8 965 1050C966.7 1054.2 972.5 1059.2 985 1060C997.5 1060.8 1027.5 1068.3 1040 1055C1052.5 1041.7 1052.5 1009.2 1060 980C1067.5 950.8 1078.3 907.5 1085 880C1091.7 852.5 1090.8 825 1100 815C1109.2 805 1130 805.8 1140 820C1150 834.2 1155.8 866.7 1160 900C1164.2 933.3 1171.7 996.7 1165 1020C1158.3 1043.3 1128.3 1033.7 1120 1040C1111.7 1046.3 1105 1054.7 1115 1058C1125 1061.3 1167.5 1063 1180 1060C1192.5 1057 1188 1066.7 1190 1040C1192 1013.3 1192 934.2 1192 900C1192 865.8 1182 845.8 1190 835C1198 824.2 1229.7 840.8 1240 835C1250.3 829.2 1252.8 819.2 1252 800C1251.2 780.8 1241.2 750 1235 720C1228.8 690 1218.8 656.7 1215 620C1211.2 583.3 1210.8 540 1212 500C1213.2 460 1221.5 415 1222 380C1222.5 345 1219.5 316.7 1215 290C1210.5 263.3 1204.2 237.5 1195 220C1185.8 202.5 1170.8 191.7 1160 185C1149.2 178.3 1140 180 1130 180C1120 180 1109.2 176.7 1100 185Z" /><path d="M1050 480C1045 486.7 1033 508.3 1020 520C1007 531.7 980 545 972 550" fill="none" stroke="#000" stroke-width="28" stroke-linecap="round" stroke-linejoin="round"/><ellipse cx="966" cy="552" rx="20" ry="22" /></g></g>
<g transform="translate(700 633.2) scale(0.125)"><g fill="#000" stroke="#000" stroke-width="3" stroke-linejoin="round"><ellipse cx="285" cy="170" rx="45" ry="45" /><path d="M265 222C251.7 226.2 240 235.3 230 250C220 264.7 215 285.8 205 310C195 334.2 175 375.8 170 395C165 414.2 168.3 414.2 175 425C181.7 435.8 204.2 437.5 210 460C215.8 482.5 211.7 520 210 560C208.3 600 203.3 643.3 200 700C196.7 756.7 192.5 848.3 190 900C187.5 951.7 187 986.7 185 1010C183 1033.3 178 1032 178 1040C178 1048 170.5 1055 185 1058C199.5 1061 250.5 1062.7 265 1058C279.5 1053.3 276.2 1038 272 1030C267.8 1022 243.7 1040 240 1010C236.3 980 246.3 911.7 250 850C253.7 788.3 258.7 676.7 262 640C265.3 603.3 266.2 603.3 270 630C273.8 656.7 278.3 736.7 285 800C291.7 863.3 305 968.3 310 1010C315 1051.7 311.7 1041.7 315 1050C318.3 1058.3 315.8 1058.7 330 1060C344.2 1061.3 387 1062.2 400 1058C413 1053.8 409.7 1041.7 408 1035C406.3 1028.3 399.7 1023 390 1018C380.3 1013 358.3 1033 350 1005C341.7 977 343.3 909.2 340 850C336.7 790.8 333.3 708.3 330 650C326.7 591.7 320 535 320 500C320 465 325.8 453.3 330 440C334.2 426.7 339.2 443.3 345 420C350.8 396.7 364.2 326.7 365 300C365.8 273.3 359.2 272.5 350 260C340.8 247.5 324.2 231.3 310 225C295.8 218.7 278.3 217.8 265 222Z" /><path d="M350 290L372 300L400 480L420 560L405 582L380 572L362 480L338 390Z" /><path d="M405 585L660 935" fill="none" stroke="#000" stroke-width="18" stroke-linecap="round" stroke-linejoin="round"/><path d="M535 960C545 949.7 580.8 950.5 600 948C619.2 945.5 639.2 950.5 650 945C660.8 939.5 658.3 921.7 665 915C671.7 908.3 681.7 903.3 690 905C698.3 906.7 710.8 916.7 715 925C719.2 933.3 718.3 946.7 715 955C711.7 963.3 695.8 966.7 695 975C694.2 983.3 710.8 997.8 710 1005C709.2 1012.2 698.3 1018.8 690 1018C681.7 1017.2 673.3 1001.3 660 1000C646.7 998.7 620 1001.7 610 1010C600 1018.3 610.8 1042 600 1050C589.2 1058 555 1064.7 545 1058C535 1051.3 541.7 1026.3 540 1010C538.3 993.7 525 970.3 535 960Z" /><ellipse cx="1110" cy="108" rx="48" ry="63" /><path d="M1100 185C1090.8 193.3 1083.3 212.5 1075 230C1066.7 247.5 1057.5 270 1050 290C1042.5 310 1038.3 334.2 1030 350C1021.7 365.8 1013.3 375.8 1000 385C986.7 394.2 970 398.3 950 405C930 411.7 897.5 420 880 425C862.5 430 851.7 430 845 435C838.3 440 838.3 449.2 840 455C841.7 460.8 847.5 468.8 855 470C862.5 471.2 869.2 467 885 462C900.8 457 929.2 446.2 950 440C970.8 433.8 995 425 1010 425C1025 425 1033.3 430.8 1040 440C1046.7 449.2 1049.2 460 1050 480C1050.8 500 1046.7 531.7 1045 560C1043.3 588.3 1044.2 620 1040 650C1035.8 680 1026.7 713.3 1020 740C1013.3 766.7 995.8 797.5 1000 810C1004.2 822.5 1039.2 800 1045 815C1050.8 830 1039.2 867.5 1035 900C1030.8 932.5 1030 987.5 1020 1010C1010 1032.5 984.2 1028.3 975 1035C965.8 1041.7 963.3 1045.8 965 1050C966.7 1054.2 972.5 1059.2 985 1060C997.5 1060.8 1027.5 1068.3 1040 1055C1052.5 1041.7 1052.5 1009.2 1060 980C1067.5 950.8 1078.3 907.5 1085 880C1091.7 852.5 1090.8 825 1100 815C1109.2 805 1130 805.8 1140 820C1150 834.2 1155.8 866.7 1160 900C1164.2 933.3 1171.7 996.7 1165 1020C1158.3 1043.3 1128.3 1033.7 1120 1040C1111.7 1046.3 1105 1054.7 1115 1058C1125 1061.3 1167.5 1063 1180 1060C1192.5 1057 1188 1066.7 1190 1040C1192 1013.3 1192 934.2 1192 900C1192 865.8 1182 845.8 1190 835C1198 824.2 1229.7 840.8 1240 835C1250.3 829.2 1252.8 819.2 1252 800C1251.2 780.8 1241.2 750 1235 720C1228.8 690 1218.8 656.7 1215 620C1211.2 583.3 1210.8 540 1212 500C1213.2 460 1221.5 415 1222 380C1222.5 345 1219.5 316.7 1215 290C1210.5 263.3 1204.2 237.5 1195 220C1185.8 202.5 1170.8 191.7 1160 185C1149.2 178.3 1140 180 1130 180C1120 180 1109.2 176.7 1100 185Z" /><path d="M1050 480C1045 486.7 1033 508.3 1020 520C1007 531.7 980 545 972 550" fill="none" stroke="#000" stroke-width="31" stroke-linecap="round" stroke-linejoin="round"/><ellipse cx="966" cy="552" rx="20" ry="22" /></g><g fill="#fff" stroke="none" filter="url(#er)"><ellipse cx="285" cy="170" rx="45" ry="45" /><path d="M265 222C251.7 226.2 240 235.3 230 250C220 264.7 215 285.8 205 310C195 334.2 175 375.8 170 395C165 414.2 168.3 414.2 175 425C181.7 435.8 204.2 437.5 210 460C215.8 482.5 211.7 520 210 560C208.3 600 203.3 643.3 200 700C196.7 756.7 192.5 848.3 190 900C187.5 951.7 187 986.7 185 1010C183 1033.3 178 1032 178 1040C178 1048 170.5 1055 185 1058C199.5 1061 250.5 1062.7 265 1058C279.5 1053.3 276.2 1038 272 1030C267.8 1022 243.7 1040 240 1010C236.3 980 246.3 911.7 250 850C253.7 788.3 258.7 676.7 262 640C265.3 603.3 266.2 603.3 270 630C273.8 656.7 278.3 736.7 285 800C291.7 863.3 305 968.3 310 1010C315 1051.7 311.7 1041.7 315 1050C318.3 1058.3 315.8 1058.7 330 1060C344.2 1061.3 387 1062.2 400 1058C413 1053.8 409.7 1041.7 408 1035C406.3 1028.3 399.7 1023 390 1018C380.3 1013 358.3 1033 350 1005C341.7 977 343.3 909.2 340 850C336.7 790.8 333.3 708.3 330 650C326.7 591.7 320 535 320 500C320 465 325.8 453.3 330 440C334.2 426.7 339.2 443.3 345 420C350.8 396.7 364.2 326.7 365 300C365.8 273.3 359.2 272.5 350 260C340.8 247.5 324.2 231.3 310 225C295.8 218.7 278.3 217.8 265 222Z" /><path d="M350 290L372 300L400 480L420 560L405 582L380 572L362 480L338 390Z" /><path d="M405 585L660 935" fill="none" stroke="#fff" stroke-width="15" stroke-linecap="round" stroke-linejoin="round"/><path d="M535 960C545 949.7 580.8 950.5 600 948C619.2 945.5 639.2 950.5 650 945C660.8 939.5 658.3 921.7 665 915C671.7 908.3 681.7 903.3 690 905C698.3 906.7 710.8 916.7 715 925C719.2 933.3 718.3 946.7 715 955C711.7 963.3 695.8 966.7 695 975C694.2 983.3 710.8 997.8 710 1005C709.2 1012.2 698.3 1018.8 690 1018C681.7 1017.2 673.3 1001.3 660 1000C646.7 998.7 620 1001.7 610 1010C600 1018.3 610.8 1042 600 1050C589.2 1058 555 1064.7 545 1058C535 1051.3 541.7 1026.3 540 1010C538.3 993.7 525 970.3 535 960Z" /><ellipse cx="1110" cy="108" rx="48" ry="63" /><path d="M1100 185C1090.8 193.3 1083.3 212.5 1075 230C1066.7 247.5 1057.5 270 1050 290C1042.5 310 1038.3 334.2 1030 350C1021.7 365.8 1013.3 375.8 1000 385C986.7 394.2 970 398.3 950 405C930 411.7 897.5 420 880 425C862.5 430 851.7 430 845 435C838.3 440 838.3 449.2 840 455C841.7 460.8 847.5 468.8 855 470C862.5 471.2 869.2 467 885 462C900.8 457 929.2 446.2 950 440C970.8 433.8 995 425 1010 425C1025 425 1033.3 430.8 1040 440C1046.7 449.2 1049.2 460 1050 480C1050.8 500 1046.7 531.7 1045 560C1043.3 588.3 1044.2 620 1040 650C1035.8 680 1026.7 713.3 1020 740C1013.3 766.7 995.8 797.5 1000 810C1004.2 822.5 1039.2 800 1045 815C1050.8 830 1039.2 867.5 1035 900C1030.8 932.5 1030 987.5 1020 1010C1010 1032.5 984.2 1028.3 975 1035C965.8 1041.7 963.3 1045.8 965 1050C966.7 1054.2 972.5 1059.2 985 1060C997.5 1060.8 1027.5 1068.3 1040 1055C1052.5 1041.7 1052.5 1009.2 1060 980C1067.5 950.8 1078.3 907.5 1085 880C1091.7 852.5 1090.8 825 1100 815C1109.2 805 1130 805.8 1140 820C1150 834.2 1155.8 866.7 1160 900C1164.2 933.3 1171.7 996.7 1165 1020C1158.3 1043.3 1128.3 1033.7 1120 1040C1111.7 1046.3 1105 1054.7 1115 1058C1125 1061.3 1167.5 1063 1180 1060C1192.5 1057 1188 1066.7 1190 1040C1192 1013.3 1192 934.2 1192 900C1192 865.8 1182 845.8 1190 835C1198 824.2 1229.7 840.8 1240 835C1250.3 829.2 1252.8 819.2 1252 800C1251.2 780.8 1241.2 750 1235 720C1228.8 690 1218.8 656.7 1215 620C1211.2 583.3 1210.8 540 1212 500C1213.2 460 1221.5 415 1222 380C1222.5 345 1219.5 316.7 1215 290C1210.5 263.3 1204.2 237.5 1195 220C1185.8 202.5 1170.8 191.7 1160 185C1149.2 178.3 1140 180 1130 180C1120 180 1109.2 176.7 1100 185Z" /><path d="M1050 480C1045 486.7 1033 508.3 1020 520C1007 531.7 980 545 972 550" fill="none" stroke="#fff" stroke-width="28" stroke-linecap="round" stroke-linejoin="round"/><ellipse cx="966" cy="552" rx="20" ry="22" /></g></g>
<g transform="translate(870 197) scale(0.125)"><g fill="#000" stroke="none"><path d="M530 395C525.8 383.3 528.3 355.8 535 340C541.7 324.2 554.2 312 570 300C585.8 288 615.8 270.5 630 268C644.2 265.5 653.3 274.7 655 285C656.7 295.3 649.2 315 640 330C630.8 345 613.3 361.7 600 375C586.7 388.3 571.7 406.7 560 410C548.3 413.3 534.2 406.7 530 395Z" /><path d="M640 300C642 313.3 650.7 355 652 380C653.3 405 648.7 438.3 648 450" fill="none" stroke="#000" stroke-width="34" stroke-linecap="round" stroke-linejoin="round"/><path d="M440 480C445 465.8 455 460.8 470 455C485 449.2 514.2 447.5 530 445C545.8 442.5 556.7 435.8 565 440C573.3 444.2 575.8 451.7 580 470C584.2 488.3 585.8 523.3 590 550C594.2 576.7 603.3 613.3 605 630C606.7 646.7 605.8 645.8 600 650C594.2 654.2 576.7 643.3 570 655C563.3 666.7 566.7 702.5 560 720C553.3 737.5 543.3 752.5 530 760C516.7 767.5 511.7 764.2 480 765C448.3 765.8 371.7 759.2 340 765C308.3 770.8 304.2 784.2 290 800C275.8 815.8 265 835 255 860C245 885 236.7 920 230 950C223.3 980 220 1022 215 1040C210 1058 215.8 1055 200 1058C184.2 1061 134.2 1061 120 1058C105.8 1055 111.7 1048 115 1040C118.3 1032 132.5 1030 140 1010C147.5 990 155.8 950 160 920C164.2 890 159.2 855 165 830C170.8 805 179.2 788.3 195 770C210.8 751.7 234.2 733.3 260 720C285.8 706.7 326.7 700 350 690C373.3 680 386.7 675 400 660C413.3 645 423.3 620 430 600C436.7 580 438.3 560 440 540C441.7 520 435 494.2 440 480Z" /><ellipse cx="720" cy="110" rx="52" ry="63" transform="rotate(-20 720 110)" /><path d="M770 165C779.2 163.3 790 167.5 800 180C810 192.5 820 216.7 830 240C840 263.3 851.7 293.3 860 320C868.3 346.7 875.8 375 880 400C884.2 425 886.7 446.7 885 470C883.3 493.3 873.3 515 870 540C866.7 565 865 593.3 865 620C865 646.7 871.7 666.7 870 700C868.3 733.3 861.7 781.7 855 820C848.3 858.3 836.7 896.7 830 930C823.3 963.3 819.2 999.2 815 1020C810.8 1040.8 819.2 1048.3 805 1055C790.8 1061.7 745 1061.7 730 1060C715 1058.3 713.3 1050.8 715 1045C716.7 1039.2 730 1030.8 740 1025C750 1019.2 770 1030.8 775 1010C780 989.2 770 938.3 770 900C770 861.7 772.5 821.7 775 780C777.5 738.3 785 686.7 785 650C785 613.3 780 588.3 775 560C770 531.7 760 508.3 755 480C750 451.7 754.2 396.7 745 390C735.8 383.3 712.5 426.7 700 440C687.5 453.3 675.8 460 670 470C664.2 480 670 494.2 665 500C660 505.8 645.8 510 640 505C634.2 500 635.8 479.2 630 470C624.2 460.8 609.2 455.8 605 450C600.8 444.2 599.2 438.3 605 435C610.8 431.7 627.5 437.5 640 430C652.5 422.5 666.7 403.3 680 390C693.3 376.7 712.5 365 720 350C727.5 335 721.7 318.3 725 300C728.3 281.7 736.7 258.3 740 240C743.3 221.7 740 202.5 745 190C750 177.5 760.8 166.7 770 165Z" /><path d="M1285 150C1285 138.8 1289.2 116.7 1300 105C1310.8 93.3 1333.3 81.7 1350 80C1366.7 78.3 1386.3 85.8 1400 95C1413.7 104.2 1427.8 122.5 1432 135C1436.2 147.5 1437 162.8 1425 170C1413 177.2 1380.8 177.7 1360 178C1339.2 178.3 1312.5 176.7 1300 172C1287.5 167.3 1285 161.2 1285 150Z" /><path d="M1320 175C1331.2 165 1380.3 165 1392 175C1403.7 185 1395.3 222.8 1390 235C1384.7 247.2 1370.8 248 1360 248C1349.2 248 1331.7 247.2 1325 235C1318.3 222.8 1308.8 185 1320 175Z" /><path d="M1300 260C1323.3 255.5 1356.7 253 1380 258C1403.3 263 1420 273 1440 290C1460 307 1482.5 335 1500 360C1517.5 385 1535.8 413.3 1545 440C1554.2 466.7 1557.5 493.3 1555 520C1552.5 546.7 1540 573.3 1530 600C1520 626.7 1505.8 656.7 1495 680C1484.2 703.3 1468.3 721.7 1465 740C1461.7 758.3 1471.7 776.7 1475 790C1478.3 803.3 1489.2 813.3 1485 820C1480.8 826.7 1456.7 816.7 1450 830C1443.3 843.3 1445 871.7 1445 900C1445 928.3 1445.8 977.5 1450 1000C1454.2 1022.5 1467.5 1025.3 1470 1035C1472.5 1044.7 1477.5 1054.2 1465 1058C1452.5 1061.8 1408.3 1061.8 1395 1058C1381.7 1054.2 1385 1044.7 1385 1035C1385 1025.3 1394.2 1022.5 1395 1000C1395.8 977.5 1391.7 928 1390 900C1388.3 872 1399.2 843.7 1385 832C1370.8 820.3 1317.5 818.7 1305 830C1292.5 841.3 1310 871.7 1310 900C1310 928.3 1304.7 976.7 1305 1000C1305.3 1023.3 1312 1030.3 1312 1040C1312 1049.7 1314.5 1055 1305 1058C1295.5 1061 1265 1061.8 1255 1058C1245 1054.2 1244.2 1046.3 1245 1035C1245.8 1023.7 1256.7 1012.5 1260 990C1263.3 967.5 1266.7 926.7 1265 900C1263.3 873.3 1257.5 842.5 1250 830C1242.5 817.5 1223.7 843.3 1220 825C1216.3 806.7 1228.8 754.2 1228 720C1227.2 685.8 1224.7 646.7 1215 620C1205.3 593.3 1183.3 576.7 1170 560C1156.7 543.3 1141.7 533.3 1135 520C1128.3 506.7 1125.8 496.7 1130 480C1134.2 463.3 1148.3 443.3 1160 420C1171.7 396.7 1186.7 362.5 1200 340C1213.3 317.5 1223.3 298.3 1240 285C1256.7 271.7 1276.7 264.5 1300 260Z" /></g></g>
<g transform="translate(870 633.2) scale(0.125)"><g fill="#000" stroke="#000" stroke-width="3" stroke-linejoin="round"><path d="M530 395C525.8 383.3 528.3 355.8 535 340C541.7 324.2 554.2 312 570 300C585.8 288 615.8 270.5 630 268C644.2 265.5 653.3 274.7 655 285C656.7 295.3 649.2 315 640 330C630.8 345 613.3 361.7 600 375C586.7 388.3 571.7 406.7 560 410C548.3 413.3 534.2 406.7 530 395Z" /><path d="M640 300C642 313.3 650.7 355 652 380C653.3 405 648.7 438.3 648 450" fill="none" stroke="#000" stroke-width="37" stroke-linecap="round" stroke-linejoin="round"/><path d="M440 480C445 465.8 455 460.8 470 455C485 449.2 514.2 447.5 530 445C545.8 442.5 556.7 435.8 565 440C573.3 444.2 575.8 451.7 580 470C584.2 488.3 585.8 523.3 590 550C594.2 576.7 603.3 613.3 605 630C606.7 646.7 605.8 645.8 600 650C594.2 654.2 576.7 643.3 570 655C563.3 666.7 566.7 702.5 560 720C553.3 737.5 543.3 752.5 530 760C516.7 767.5 511.7 764.2 480 765C448.3 765.8 371.7 759.2 340 765C308.3 770.8 304.2 784.2 290 800C275.8 815.8 265 835 255 860C245 885 236.7 920 230 950C223.3 980 220 1022 215 1040C210 1058 215.8 1055 200 1058C184.2 1061 134.2 1061 120 1058C105.8 1055 111.7 1048 115 1040C118.3 1032 132.5 1030 140 1010C147.5 990 155.8 950 160 920C164.2 890 159.2 855 165 830C170.8 805 179.2 788.3 195 770C210.8 751.7 234.2 733.3 260 720C285.8 706.7 326.7 700 350 690C373.3 680 386.7 675 400 660C413.3 645 423.3 620 430 600C436.7 580 438.3 560 440 540C441.7 520 435 494.2 440 480Z" /><ellipse cx="720" cy="110" rx="52" ry="63" transform="rotate(-20 720 110)" /><path d="M770 165C779.2 163.3 790 167.5 800 180C810 192.5 820 216.7 830 240C840 263.3 851.7 293.3 860 320C868.3 346.7 875.8 375 880 400C884.2 425 886.7 446.7 885 470C883.3 493.3 873.3 515 870 540C866.7 565 865 593.3 865 620C865 646.7 871.7 666.7 870 700C868.3 733.3 861.7 781.7 855 820C848.3 858.3 836.7 896.7 830 930C823.3 963.3 819.2 999.2 815 1020C810.8 1040.8 819.2 1048.3 805 1055C790.8 1061.7 745 1061.7 730 1060C715 1058.3 713.3 1050.8 715 1045C716.7 1039.2 730 1030.8 740 1025C750 1019.2 770 1030.8 775 1010C780 989.2 770 938.3 770 900C770 861.7 772.5 821.7 775 780C777.5 738.3 785 686.7 785 650C785 613.3 780 588.3 775 560C770 531.7 760 508.3 755 480C750 451.7 754.2 396.7 745 390C735.8 383.3 712.5 426.7 700 440C687.5 453.3 675.8 460 670 470C664.2 480 670 494.2 665 500C660 505.8 645.8 510 640 505C634.2 500 635.8 479.2 630 470C624.2 460.8 609.2 455.8 605 450C600.8 444.2 599.2 438.3 605 435C610.8 431.7 627.5 437.5 640 430C652.5 422.5 666.7 403.3 680 390C693.3 376.7 712.5 365 720 350C727.5 335 721.7 318.3 725 300C728.3 281.7 736.7 258.3 740 240C743.3 221.7 740 202.5 745 190C750 177.5 760.8 166.7 770 165Z" /><path d="M1285 150C1285 138.8 1289.2 116.7 1300 105C1310.8 93.3 1333.3 81.7 1350 80C1366.7 78.3 1386.3 85.8 1400 95C1413.7 104.2 1427.8 122.5 1432 135C1436.2 147.5 1437 162.8 1425 170C1413 177.2 1380.8 177.7 1360 178C1339.2 178.3 1312.5 176.7 1300 172C1287.5 167.3 1285 161.2 1285 150Z" /><path d="M1320 175C1331.2 165 1380.3 165 1392 175C1403.7 185 1395.3 222.8 1390 235C1384.7 247.2 1370.8 248 1360 248C1349.2 248 1331.7 247.2 1325 235C1318.3 222.8 1308.8 185 1320 175Z" /><path d="M1300 260C1323.3 255.5 1356.7 253 1380 258C1403.3 263 1420 273 1440 290C1460 307 1482.5 335 1500 360C1517.5 385 1535.8 413.3 1545 440C1554.2 466.7 1557.5 493.3 1555 520C1552.5 546.7 1540 573.3 1530 600C1520 626.7 1505.8 656.7 1495 680C1484.2 703.3 1468.3 721.7 1465 740C1461.7 758.3 1471.7 776.7 1475 790C1478.3 803.3 1489.2 813.3 1485 820C1480.8 826.7 1456.7 816.7 1450 830C1443.3 843.3 1445 871.7 1445 900C1445 928.3 1445.8 977.5 1450 1000C1454.2 1022.5 1467.5 1025.3 1470 1035C1472.5 1044.7 1477.5 1054.2 1465 1058C1452.5 1061.8 1408.3 1061.8 1395 1058C1381.7 1054.2 1385 1044.7 1385 1035C1385 1025.3 1394.2 1022.5 1395 1000C1395.8 977.5 1391.7 928 1390 900C1388.3 872 1399.2 843.7 1385 832C1370.8 820.3 1317.5 818.7 1305 830C1292.5 841.3 1310 871.7 1310 900C1310 928.3 1304.7 976.7 1305 1000C1305.3 1023.3 1312 1030.3 1312 1040C1312 1049.7 1314.5 1055 1305 1058C1295.5 1061 1265 1061.8 1255 1058C1245 1054.2 1244.2 1046.3 1245 1035C1245.8 1023.7 1256.7 1012.5 1260 990C1263.3 967.5 1266.7 926.7 1265 900C1263.3 873.3 1257.5 842.5 1250 830C1242.5 817.5 1223.7 843.3 1220 825C1216.3 806.7 1228.8 754.2 1228 720C1227.2 685.8 1224.7 646.7 1215 620C1205.3 593.3 1183.3 576.7 1170 560C1156.7 543.3 1141.7 533.3 1135 520C1128.3 506.7 1125.8 496.7 1130 480C1134.2 463.3 1148.3 443.3 1160 420C1171.7 396.7 1186.7 362.5 1200 340C1213.3 317.5 1223.3 298.3 1240 285C1256.7 271.7 1276.7 264.5 1300 260Z" /></g><g fill="#fff" stroke="none" filter="url(#er)"><path d="M530 395C525.8 383.3 528.3 355.8 535 340C541.7 324.2 554.2 312 570 300C585.8 288 615.8 270.5 630 268C644.2 265.5 653.3 274.7 655 285C656.7 295.3 649.2 315 640 330C630.8 345 613.3 361.7 600 375C586.7 388.3 571.7 406.7 560 410C548.3 413.3 534.2 406.7 530 395Z" /><path d="M640 300C642 313.3 650.7 355 652 380C653.3 405 648.7 438.3 648 450" fill="none" stroke="#fff" stroke-width="34" stroke-linecap="round" stroke-linejoin="round"/><path d="M440 480C445 465.8 455 460.8 470 455C485 449.2 514.2 447.5 530 445C545.8 442.5 556.7 435.8 565 440C573.3 444.2 575.8 451.7 580 470C584.2 488.3 585.8 523.3 590 550C594.2 576.7 603.3 613.3 605 630C606.7 646.7 605.8 645.8 600 650C594.2 654.2 576.7 643.3 570 655C563.3 666.7 566.7 702.5 560 720C553.3 737.5 543.3 752.5 530 760C516.7 767.5 511.7 764.2 480 765C448.3 765.8 371.7 759.2 340 765C308.3 770.8 304.2 784.2 290 800C275.8 815.8 265 835 255 860C245 885 236.7 920 230 950C223.3 980 220 1022 215 1040C210 1058 215.8 1055 200 1058C184.2 1061 134.2 1061 120 1058C105.8 1055 111.7 1048 115 1040C118.3 1032 132.5 1030 140 1010C147.5 990 155.8 950 160 920C164.2 890 159.2 855 165 830C170.8 805 179.2 788.3 195 770C210.8 751.7 234.2 733.3 260 720C285.8 706.7 326.7 700 350 690C373.3 680 386.7 675 400 660C413.3 645 423.3 620 430 600C436.7 580 438.3 560 440 540C441.7 520 435 494.2 440 480Z" /><ellipse cx="720" cy="110" rx="52" ry="63" transform="rotate(-20 720 110)" /><path d="M770 165C779.2 163.3 790 167.5 800 180C810 192.5 820 216.7 830 240C840 263.3 851.7 293.3 860 320C868.3 346.7 875.8 375 880 400C884.2 425 886.7 446.7 885 470C883.3 493.3 873.3 515 870 540C866.7 565 865 593.3 865 620C865 646.7 871.7 666.7 870 700C868.3 733.3 861.7 781.7 855 820C848.3 858.3 836.7 896.7 830 930C823.3 963.3 819.2 999.2 815 1020C810.8 1040.8 819.2 1048.3 805 1055C790.8 1061.7 745 1061.7 730 1060C715 1058.3 713.3 1050.8 715 1045C716.7 1039.2 730 1030.8 740 1025C750 1019.2 770 1030.8 775 1010C780 989.2 770 938.3 770 900C770 861.7 772.5 821.7 775 780C777.5 738.3 785 686.7 785 650C785 613.3 780 588.3 775 560C770 531.7 760 508.3 755 480C750 451.7 754.2 396.7 745 390C735.8 383.3 712.5 426.7 700 440C687.5 453.3 675.8 460 670 470C664.2 480 670 494.2 665 500C660 505.8 645.8 510 640 505C634.2 500 635.8 479.2 630 470C624.2 460.8 609.2 455.8 605 450C600.8 444.2 599.2 438.3 605 435C610.8 431.7 627.5 437.5 640 430C652.5 422.5 666.7 403.3 680 390C693.3 376.7 712.5 365 720 350C727.5 335 721.7 318.3 725 300C728.3 281.7 736.7 258.3 740 240C743.3 221.7 740 202.5 745 190C750 177.5 760.8 166.7 770 165Z" /><path d="M1285 150C1285 138.8 1289.2 116.7 1300 105C1310.8 93.3 1333.3 81.7 1350 80C1366.7 78.3 1386.3 85.8 1400 95C1413.7 104.2 1427.8 122.5 1432 135C1436.2 147.5 1437 162.8 1425 170C1413 177.2 1380.8 177.7 1360 178C1339.2 178.3 1312.5 176.7 1300 172C1287.5 167.3 1285 161.2 1285 150Z" /><path d="M1320 175C1331.2 165 1380.3 165 1392 175C1403.7 185 1395.3 222.8 1390 235C1384.7 247.2 1370.8 248 1360 248C1349.2 248 1331.7 247.2 1325 235C1318.3 222.8 1308.8 185 1320 175Z" /><path d="M1300 260C1323.3 255.5 1356.7 253 1380 258C1403.3 263 1420 273 1440 290C1460 307 1482.5 335 1500 360C1517.5 385 1535.8 413.3 1545 440C1554.2 466.7 1557.5 493.3 1555 520C1552.5 546.7 1540 573.3 1530 600C1520 626.7 1505.8 656.7 1495 680C1484.2 703.3 1468.3 721.7 1465 740C1461.7 758.3 1471.7 776.7 1475 790C1478.3 803.3 1489.2 813.3 1485 820C1480.8 826.7 1456.7 816.7 1450 830C1443.3 843.3 1445 871.7 1445 900C1445 928.3 1445.8 977.5 1450 1000C1454.2 1022.5 1467.5 1025.3 1470 1035C1472.5 1044.7 1477.5 1054.2 1465 1058C1452.5 1061.8 1408.3 1061.8 1395 1058C1381.7 1054.2 1385 1044.7 1385 1035C1385 1025.3 1394.2 1022.5 1395 1000C1395.8 977.5 1391.7 928 1390 900C1388.3 872 1399.2 843.7 1385 832C1370.8 820.3 1317.5 818.7 1305 830C1292.5 841.3 1310 871.7 1310 900C1310 928.3 1304.7 976.7 1305 1000C1305.3 1023.3 1312 1030.3 1312 1040C1312 1049.7 1314.5 1055 1305 1058C1295.5 1061 1265 1061.8 1255 1058C1245 1054.2 1244.2 1046.3 1245 1035C1245.8 1023.7 1256.7 1012.5 1260 990C1263.3 967.5 1266.7 926.7 1265 900C1263.3 873.3 1257.5 842.5 1250 830C1242.5 817.5 1223.7 843.3 1220 825C1216.3 806.7 1228.8 754.2 1228 720C1227.2 685.8 1224.7 646.7 1215 620C1205.3 593.3 1183.3 576.7 1170 560C1156.7 543.3 1141.7 533.3 1135 520C1128.3 506.7 1125.8 496.7 1130 480C1134.2 463.3 1148.3 443.3 1160 420C1171.7 396.7 1186.7 362.5 1200 340C1213.3 317.5 1223.3 298.3 1240 285C1256.7 271.7 1276.7 264.5 1300 260Z" /></g></g>
<g transform="translate(1090 197) scale(0.125)"><g fill="#000" stroke="none"><ellipse cx="510" cy="148" rx="48" ry="72" transform="rotate(35 510 148)" /><path d="M205 310C217.7 297.3 274 266 300 250C326 234 381.3 197.3 400 190C418.7 182.7 430.7 185.7 440 195C449.3 204.3 464.7 243.3 470 260C475.3 276.7 486 308 480 320C474 332 436.3 336.7 425 350C413.7 363.3 400.3 405.1 395 420C389.7 434.9 384.1 452.7 385 462C385.9 471.3 400.3 482.5 402 490C403.7 497.5 402 512.9 398 518C394 523.1 379.5 528.4 372 528C364.5 527.6 347.3 510.1 342 515C336.7 519.9 336.9 547 332 565C327.1 583 310.3 621.3 305 650C299.7 678.7 297.7 746.7 292 780C286.3 813.3 269.3 872 262 900C254.7 928 239.9 974.7 237 990C234.1 1005.3 234.9 1009.7 240 1015C245.1 1020.3 269.9 1024.7 275 1030C280.1 1035.3 293.3 1051 278 1055C262.7 1059 176.4 1067.3 160 1060C143.6 1052.7 155 1034.7 155 1000C155 965.3 157.3 848 160 800C162.7 752 170.3 680 175 640C179.7 600 187 532.7 195 500C203 467.3 233.7 415.7 235 395C236.3 374.3 209 356.3 205 345C201 333.7 192.3 322.7 205 310Z" /><path d="M450 290C456.7 305 477.5 357.5 490 380C502.5 402.5 519.2 417.5 525 425" fill="none" stroke="#000" stroke-width="34" stroke-linecap="round" stroke-linejoin="round"/><path d="M525 425C537.5 422.5 579.2 416.7 600 410C620.8 403.3 641.7 389.2 650 385" fill="none" stroke="#000" stroke-width="26" stroke-linecap="round" stroke-linejoin="round"/><ellipse cx="680" cy="362" rx="35" ry="22" transform="rotate(-20 680 362)" /><ellipse cx="1025" cy="608" rx="36" ry="42" /><path d="M985 660C999.2 649.2 1027.8 648.3 1040 655C1052.2 661.7 1054.7 679.2 1058 700C1061.3 720.8 1062.2 756.7 1060 780C1057.8 803.3 1054.2 827 1045 840C1035.8 853 1018.3 857.2 1005 858C991.7 858.8 974.2 856.3 965 845C955.8 833.7 951.7 810.8 950 790C948.3 769.2 949.2 741.7 955 720C960.8 698.3 970.8 670.8 985 660Z" /><path d="M985 675C970.8 667.5 927.8 640.8 900 630C872.2 619.2 831.7 613.3 818 610" fill="none" stroke="#000" stroke-width="40" stroke-linecap="round" stroke-linejoin="round"/><path d="M1060 690C1068.3 698.7 1094.2 725.3 1110 742C1125.8 758.7 1147.5 782 1155 790" fill="none" stroke="#000" stroke-width="40" stroke-linecap="round" stroke-linejoin="round"/><path d="M985 848C967.5 851.3 906.7 861.7 880 868C853.3 874.3 834.2 883 825 886" fill="none" stroke="#000" stroke-width="44" stroke-linecap="round" stroke-linejoin="round"/><path d="M817 893L806 850" fill="none" stroke="#000" stroke-width="32" stroke-linecap="round" stroke-linejoin="round"/><path d="M1000 850C1002.5 866.7 1009.5 923 1015 950C1020.5 977 1030 1001.7 1033 1012" fill="none" stroke="#000" stroke-width="42" stroke-linecap="round" stroke-linejoin="round"/><path d="M985 1035C993.3 1028 1016.2 1011.7 1030 1010C1043.8 1008.3 1064.7 1019.2 1068 1025C1071.3 1030.8 1061.3 1039.2 1050 1045C1038.7 1050.8 1011.7 1058.8 1000 1060C988.3 1061.2 982.5 1056.2 980 1052C977.5 1047.8 976.7 1042 985 1035Z" /><ellipse cx="803" cy="772" rx="50" ry="50" /></g><path d="M240 590L255 590L215 880L190 1000L182 1000L200 800Z" fill="#fff"/></g>
<g transform="translate(1090 633.2) scale(0.125)"><g fill="#000" stroke="#000" stroke-width="3" stroke-linejoin="round"><ellipse cx="510" cy="148" rx="48" ry="72" transform="rotate(35 510 148)" /><path d="M205 310C217.7 297.3 274 266 300 250C326 234 381.3 197.3 400 190C418.7 182.7 430.7 185.7 440 195C449.3 204.3 464.7 243.3 470 260C475.3 276.7 486 308 480 320C474 332 436.3 336.7 425 350C413.7 363.3 400.3 405.1 395 420C389.7 434.9 384.1 452.7 385 462C385.9 471.3 400.3 482.5 402 490C403.7 497.5 402 512.9 398 518C394 523.1 379.5 528.4 372 528C364.5 527.6 347.3 510.1 342 515C336.7 519.9 336.9 547 332 565C327.1 583 310.3 621.3 305 650C299.7 678.7 297.7 746.7 292 780C286.3 813.3 269.3 872 262 900C254.7 928 239.9 974.7 237 990C234.1 1005.3 234.9 1009.7 240 1015C245.1 1020.3 269.9 1024.7 275 1030C280.1 1035.3 293.3 1051 278 1055C262.7 1059 176.4 1067.3 160 1060C143.6 1052.7 155 1034.7 155 1000C155 965.3 157.3 848 160 800C162.7 752 170.3 680 175 640C179.7 600 187 532.7 195 500C203 467.3 233.7 415.7 235 395C236.3 374.3 209 356.3 205 345C201 333.7 192.3 322.7 205 310Z" /><path d="M450 290C456.7 305 477.5 357.5 490 380C502.5 402.5 519.2 417.5 525 425" fill="none" stroke="#000" stroke-width="37" stroke-linecap="round" stroke-linejoin="round"/><path d="M525 425C537.5 422.5 579.2 416.7 600 410C620.8 403.3 641.7 389.2 650 385" fill="none" stroke="#000" stroke-width="29" stroke-linecap="round" stroke-linejoin="round"/><ellipse cx="680" cy="362" rx="35" ry="22" transform="rotate(-20 680 362)" /><ellipse cx="1025" cy="608" rx="36" ry="42" /><path d="M985 660C999.2 649.2 1027.8 648.3 1040 655C1052.2 661.7 1054.7 679.2 1058 700C1061.3 720.8 1062.2 756.7 1060 780C1057.8 803.3 1054.2 827 1045 840C1035.8 853 1018.3 857.2 1005 858C991.7 858.8 974.2 856.3 965 845C955.8 833.7 951.7 810.8 950 790C948.3 769.2 949.2 741.7 955 720C960.8 698.3 970.8 670.8 985 660Z" /><path d="M985 675C970.8 667.5 927.8 640.8 900 630C872.2 619.2 831.7 613.3 818 610" fill="none" stroke="#000" stroke-width="43" stroke-linecap="round" stroke-linejoin="round"/><path d="M1060 690C1068.3 698.7 1094.2 725.3 1110 742C1125.8 758.7 1147.5 782 1155 790" fill="none" stroke="#000" stroke-width="43" stroke-linecap="round" stroke-linejoin="round"/><path d="M985 848C967.5 851.3 906.7 861.7 880 868C853.3 874.3 834.2 883 825 886" fill="none" stroke="#000" stroke-width="47" stroke-linecap="round" stroke-linejoin="round"/><path d="M817 893L806 850" fill="none" stroke="#000" stroke-width="35" stroke-linecap="round" stroke-linejoin="round"/><path d="M1000 850C1002.5 866.7 1009.5 923 1015 950C1020.5 977 1030 1001.7 1033 1012" fill="none" stroke="#000" stroke-width="45" stroke-linecap="round" stroke-linejoin="round"/><path d="M985 1035C993.3 1028 1016.2 1011.7 1030 1010C1043.8 1008.3 1064.7 1019.2 1068 1025C1071.3 1030.8 1061.3 1039.2 1050 1045C1038.7 1050.8 1011.7 1058.8 1000 1060C988.3 1061.2 982.5 1056.2 980 1052C977.5 1047.8 976.7 1042 985 1035Z" /><ellipse cx="803" cy="772" rx="50" ry="50" /></g><g fill="#fff" stroke="none" filter="url(#er)"><ellipse cx="510" cy="148" rx="48" ry="72" transform="rotate(35 510 148)" /><path d="M205 310C217.7 297.3 274 266 300 250C326 234 381.3 197.3 400 190C418.7 182.7 430.7 185.7 440 195C449.3 204.3 464.7 243.3 470 260C475.3 276.7 486 308 480 320C474 332 436.3 336.7 425 350C413.7 363.3 400.3 405.1 395 420C389.7 434.9 384.1 452.7 385 462C385.9 471.3 400.3 482.5 402 490C403.7 497.5 402 512.9 398 518C394 523.1 379.5 528.4 372 528C364.5 527.6 347.3 510.1 342 515C336.7 519.9 336.9 547 332 565C327.1 583 310.3 621.3 305 650C299.7 678.7 297.7 746.7 292 780C286.3 813.3 269.3 872 262 900C254.7 928 239.9 974.7 237 990C234.1 1005.3 234.9 1009.7 240 1015C245.1 1020.3 269.9 1024.7 275 1030C280.1 1035.3 293.3 1051 278 1055C262.7 1059 176.4 1067.3 160 1060C143.6 1052.7 155 1034.7 155 1000C155 965.3 157.3 848 160 800C162.7 752 170.3 680 175 640C179.7 600 187 532.7 195 500C203 467.3 233.7 415.7 235 395C236.3 374.3 209 356.3 205 345C201 333.7 192.3 322.7 205 310Z" /><path d="M450 290C456.7 305 477.5 357.5 490 380C502.5 402.5 519.2 417.5 525 425" fill="none" stroke="#fff" stroke-width="34" stroke-linecap="round" stroke-linejoin="round"/><path d="M525 425C537.5 422.5 579.2 416.7 600 410C620.8 403.3 641.7 389.2 650 385" fill="none" stroke="#fff" stroke-width="26" stroke-linecap="round" stroke-linejoin="round"/><ellipse cx="680" cy="362" rx="35" ry="22" transform="rotate(-20 680 362)" /><ellipse cx="1025" cy="608" rx="36" ry="42" /><path d="M985 660C999.2 649.2 1027.8 648.3 1040 655C1052.2 661.7 1054.7 679.2 1058 700C1061.3 720.8 1062.2 756.7 1060 780C1057.8 803.3 1054.2 827 1045 840C1035.8 853 1018.3 857.2 1005 858C991.7 858.8 974.2 856.3 965 845C955.8 833.7 951.7 810.8 950 790C948.3 769.2 949.2 741.7 955 720C960.8 698.3 970.8 670.8 985 660Z" /><path d="M985 675C970.8 667.5 927.8 640.8 900 630C872.2 619.2 831.7 613.3 818 610" fill="none" stroke="#fff" stroke-width="40" stroke-linecap="round" stroke-linejoin="round"/><path d="M1060 690C1068.3 698.7 1094.2 725.3 1110 742C1125.8 758.7 1147.5 782 1155 790" fill="none" stroke="#fff" stroke-width="40" stroke-linecap="round" stroke-linejoin="round"/><path d="M985 848C967.5 851.3 906.7 861.7 880 868C853.3 874.3 834.2 883 825 886" fill="none" stroke="#fff" stroke-width="44" stroke-linecap="round" stroke-linejoin="round"/><path d="M817 893L806 850" fill="none" stroke="#fff" stroke-width="32" stroke-linecap="round" stroke-linejoin="round"/><path d="M1000 850C1002.5 866.7 1009.5 923 1015 950C1020.5 977 1030 1001.7 1033 1012" fill="none" stroke="#fff" stroke-width="42" stroke-linecap="round" stroke-linejoin="round"/><path d="M985 1035C993.3 1028 1016.2 1011.7 1030 1010C1043.8 1008.3 1064.7 1019.2 1068 1025C1071.3 1030.8 1061.3 1039.2 1050 1045C1038.7 1050.8 1011.7 1058.8 1000 1060C988.3 1061.2 982.5 1056.2 980 1052C977.5 1047.8 976.7 1042 985 1035Z" /><ellipse cx="803" cy="772" rx="50" ry="50" /></g><path d="M240 590L255 590L215 880L190 1000L182 1000L200 800Z" fill="#fff" stroke="#000" stroke-width="10"/></g>
<g transform="translate(1250 197) scale(0.125)"><g fill="#000" stroke="none"><ellipse cx="385" cy="112" rx="45" ry="75" transform="rotate(12 385 112)" /><path d="M345 200C359.2 191.7 391.7 190 405 200C418.3 210 420 235 425 260C430 285 432.5 323.3 435 350C437.5 376.7 439.5 385 440 420C440.5 455 439.7 513.3 438 560C436.3 606.7 433.8 643.3 430 700C426.2 756.7 419.2 847.5 415 900C410.8 952.5 397.5 994.2 405 1015C412.5 1035.8 447.5 1020 460 1025C472.5 1030 478.3 1039.2 480 1045C481.7 1050.8 502.5 1057.5 470 1060C437.5 1062.5 316.7 1070 285 1060C253.3 1050 280 1043.3 280 1000C280 956.7 283 863.3 285 800C287 736.7 291.2 660 292 620C292.8 580 292.8 578.3 290 560C287.2 541.7 275.8 530 275 510C274.2 490 280.8 470 285 440C289.2 410 294.2 361.7 300 330C305.8 298.3 312.5 271.7 320 250C327.5 228.3 330.8 208.3 345 200Z" /><path d="M310 300C305 304.2 293.7 319.2 280 325C266.3 330.8 236.7 333.3 228 335" fill="none" stroke="#000" stroke-width="30" stroke-linecap="round" stroke-linejoin="round"/><ellipse cx="225" cy="332" rx="18" ry="16" /><path d="M432 410C440 423.3 466.2 468.3 480 490C493.8 511.7 509.2 531.7 515 540" fill="none" stroke="#000" stroke-width="36" stroke-linecap="round" stroke-linejoin="round"/><ellipse cx="515" cy="540" rx="28" ry="28" /><path d="M662 72C675 73.3 715 74.8 740 80C765 85.2 800 99.2 812 103" fill="none" stroke="#000" stroke-width="20" stroke-linecap="round" stroke-linejoin="round"/><path d="M715 70C706.7 62.5 719.5 46.3 725 40C730.5 33.7 740.8 31.2 748 32C755.2 32.8 763.5 36.2 768 45C772.5 53.8 783.8 80.8 775 85C766.2 89.2 723.3 77.5 715 70Z" /><path d="M690 85C704.5 77.5 761.7 85.8 775 95C788.3 104.2 775 127.5 770 140C765 152.5 756.7 164.7 745 170C733.3 175.3 709.5 177 700 172C690.5 167 689.7 154.5 688 140C686.3 125.5 675.5 92.5 690 85Z" /><path d="M705 185C717.5 180.8 735.8 180.8 750 185C764.2 189.2 780 197.5 790 210C800 222.5 805.8 240 810 260C814.2 280 810 306.7 815 330C820 353.3 832.8 376.7 840 400C847.2 423.3 855.5 443.3 858 470C860.5 496.7 858.8 540 855 560C851.2 580 841.7 588.3 835 590C828.3 591.7 818.3 588.3 815 570C811.7 551.7 818.3 505 815 480C811.7 455 799.2 406.7 795 420C790.8 433.3 791.7 513.3 790 560C788.3 606.7 785 643.3 785 700C785 756.7 787.8 846.7 790 900C792.2 953.3 798 993.7 798 1020C798 1046.3 829.7 1051.3 790 1058C750.3 1064.7 599.2 1063 560 1060C520.8 1057 551.7 1045.8 555 1040C558.3 1034.2 568.3 1028.7 580 1025C591.7 1021.3 616.7 1038.8 625 1018C633.3 997.2 630 944.7 630 900C630 855.3 625.8 793.3 625 750C624.2 706.7 621.7 671.7 625 640C628.3 608.3 642.5 591.7 645 560C647.5 528.3 641.2 488.3 640 450C638.8 411.7 635.5 363.3 638 330C640.5 296.7 648.8 270 655 250C661.2 230 666.7 220.8 675 210C683.3 199.2 692.5 189.2 705 185Z" /><path d="M648 430C636.7 438.3 600.5 465 580 480C559.5 495 534.2 513.3 525 520" fill="none" stroke="#000" stroke-width="38" stroke-linecap="round" stroke-linejoin="round"/><ellipse cx="1227" cy="112" rx="58" ry="78" transform="rotate(-10 1227 112)" /><path d="M1200 235C1211.7 225.3 1243.3 212.8 1260 212C1276.7 211.2 1286.7 218.7 1300 230C1313.3 241.3 1329.2 256.7 1340 280C1350.8 303.3 1355 338.3 1365 370C1375 401.7 1387.5 438.3 1400 470C1412.5 501.7 1429.2 531.7 1440 560C1450.8 588.3 1459.2 613.3 1465 640C1470.8 666.7 1475.8 690 1475 720C1474.2 750 1464.2 789.2 1460 820C1455.8 850.8 1443.3 888.3 1450 905C1456.7 921.7 1490.8 914.2 1500 920C1509.2 925.8 1508.3 935 1505 940C1501.7 945 1497.5 949.2 1480 950C1462.5 950.8 1414.7 950 1400 945C1385.3 940 1389.5 930.8 1392 920C1394.5 909.2 1409.5 903.3 1415 880C1420.5 856.7 1424.2 810 1425 780C1425.8 750 1426.7 726.7 1420 700C1413.3 673.3 1393.3 636.7 1385 620C1376.7 603.3 1371.7 586.7 1370 600C1368.3 613.3 1374.2 666.7 1375 700C1375.8 733.3 1379.2 766.7 1375 800C1370.8 833.3 1358.3 866.7 1350 900C1341.7 933.3 1320.8 979.2 1325 1000C1329.2 1020.8 1365 1016.7 1375 1025C1385 1033.3 1385.8 1044.2 1385 1050C1384.2 1055.8 1388.3 1058.7 1370 1060C1351.7 1061.3 1293.3 1063 1275 1058C1256.7 1053 1260 1043 1260 1030C1260 1017 1266.7 1005 1275 980C1283.3 955 1300.8 913.3 1310 880C1319.2 846.7 1330 810 1330 780C1330 750 1318.3 730 1310 700C1301.7 670 1289.2 633.3 1280 600C1270.8 566.7 1261.7 530 1255 500C1248.3 470 1250 448.3 1240 420C1230 391.7 1203.3 355 1195 330C1186.7 305 1189.2 285.8 1190 270C1190.8 254.2 1188.3 244.7 1200 235Z" /><path d="M1330 272C1341.7 282 1378.3 317.3 1400 332C1421.7 346.7 1433.3 355 1460 360C1486.7 365 1543.3 361.7 1560 362" fill="none" stroke="#000" stroke-width="34" stroke-linecap="round" stroke-linejoin="round"/><ellipse cx="1595" cy="378" rx="28" ry="22" transform="rotate(20 1595 378)" /><path d="M1225 400C1221.7 415 1215 464.2 1205 490C1195 515.8 1171.7 544.2 1165 555" fill="none" stroke="#000" stroke-width="30" stroke-linecap="round" stroke-linejoin="round"/><ellipse cx="1135" cy="578" rx="38" ry="20" transform="rotate(-15 1135 578)" /></g><path d="M358 600L372 600L365 1010L340 1010Z" fill="#fff"/><path d="M700 700L712 690L745 1012L680 1015Z" fill="#fff"/></g>
<g transform="translate(1250 633.2) scale(0.125)"><g fill="#000" stroke="#000" stroke-width="3" stroke-linejoin="round"><ellipse cx="385" cy="112" rx="45" ry="75" transform="rotate(12 385 112)" /><path d="M345 200C359.2 191.7 391.7 190 405 200C418.3 210 420 235 425 260C430 285 432.5 323.3 435 350C437.5 376.7 439.5 385 440 420C440.5 455 439.7 513.3 438 560C436.3 606.7 433.8 643.3 430 700C426.2 756.7 419.2 847.5 415 900C410.8 952.5 397.5 994.2 405 1015C412.5 1035.8 447.5 1020 460 1025C472.5 1030 478.3 1039.2 480 1045C481.7 1050.8 502.5 1057.5 470 1060C437.5 1062.5 316.7 1070 285 1060C253.3 1050 280 1043.3 280 1000C280 956.7 283 863.3 285 800C287 736.7 291.2 660 292 620C292.8 580 292.8 578.3 290 560C287.2 541.7 275.8 530 275 510C274.2 490 280.8 470 285 440C289.2 410 294.2 361.7 300 330C305.8 298.3 312.5 271.7 320 250C327.5 228.3 330.8 208.3 345 200Z" /><path d="M310 300C305 304.2 293.7 319.2 280 325C266.3 330.8 236.7 333.3 228 335" fill="none" stroke="#000" stroke-width="33" stroke-linecap="round" stroke-linejoin="round"/><ellipse cx="225" cy="332" rx="18" ry="16" /><path d="M432 410C440 423.3 466.2 468.3 480 490C493.8 511.7 509.2 531.7 515 540" fill="none" stroke="#000" stroke-width="39" stroke-linecap="round" stroke-linejoin="round"/><ellipse cx="515" cy="540" rx="28" ry="28" /><path d="M662 72C675 73.3 715 74.8 740 80C765 85.2 800 99.2 812 103" fill="none" stroke="#000" stroke-width="23" stroke-linecap="round" stroke-linejoin="round"/><path d="M715 70C706.7 62.5 719.5 46.3 725 40C730.5 33.7 740.8 31.2 748 32C755.2 32.8 763.5 36.2 768 45C772.5 53.8 783.8 80.8 775 85C766.2 89.2 723.3 77.5 715 70Z" /><path d="M690 85C704.5 77.5 761.7 85.8 775 95C788.3 104.2 775 127.5 770 140C765 152.5 756.7 164.7 745 170C733.3 175.3 709.5 177 700 172C690.5 167 689.7 154.5 688 140C686.3 125.5 675.5 92.5 690 85Z" /><path d="M705 185C717.5 180.8 735.8 180.8 750 185C764.2 189.2 780 197.5 790 210C800 222.5 805.8 240 810 260C814.2 280 810 306.7 815 330C820 353.3 832.8 376.7 840 400C847.2 423.3 855.5 443.3 858 470C860.5 496.7 858.8 540 855 560C851.2 580 841.7 588.3 835 590C828.3 591.7 818.3 588.3 815 570C811.7 551.7 818.3 505 815 480C811.7 455 799.2 406.7 795 420C790.8 433.3 791.7 513.3 790 560C788.3 606.7 785 643.3 785 700C785 756.7 787.8 846.7 790 900C792.2 953.3 798 993.7 798 1020C798 1046.3 829.7 1051.3 790 1058C750.3 1064.7 599.2 1063 560 1060C520.8 1057 551.7 1045.8 555 1040C558.3 1034.2 568.3 1028.7 580 1025C591.7 1021.3 616.7 1038.8 625 1018C633.3 997.2 630 944.7 630 900C630 855.3 625.8 793.3 625 750C624.2 706.7 621.7 671.7 625 640C628.3 608.3 642.5 591.7 645 560C647.5 528.3 641.2 488.3 640 450C638.8 411.7 635.5 363.3 638 330C640.5 296.7 648.8 270 655 250C661.2 230 666.7 220.8 675 210C683.3 199.2 692.5 189.2 705 185Z" /><path d="M648 430C636.7 438.3 600.5 465 580 480C559.5 495 534.2 513.3 525 520" fill="none" stroke="#000" stroke-width="41" stroke-linecap="round" stroke-linejoin="round"/><ellipse cx="1227" cy="112" rx="58" ry="78" transform="rotate(-10 1227 112)" /><path d="M1200 235C1211.7 225.3 1243.3 212.8 1260 212C1276.7 211.2 1286.7 218.7 1300 230C1313.3 241.3 1329.2 256.7 1340 280C1350.8 303.3 1355 338.3 1365 370C1375 401.7 1387.5 438.3 1400 470C1412.5 501.7 1429.2 531.7 1440 560C1450.8 588.3 1459.2 613.3 1465 640C1470.8 666.7 1475.8 690 1475 720C1474.2 750 1464.2 789.2 1460 820C1455.8 850.8 1443.3 888.3 1450 905C1456.7 921.7 1490.8 914.2 1500 920C1509.2 925.8 1508.3 935 1505 940C1501.7 945 1497.5 949.2 1480 950C1462.5 950.8 1414.7 950 1400 945C1385.3 940 1389.5 930.8 1392 920C1394.5 909.2 1409.5 903.3 1415 880C1420.5 856.7 1424.2 810 1425 780C1425.8 750 1426.7 726.7 1420 700C1413.3 673.3 1393.3 636.7 1385 620C1376.7 603.3 1371.7 586.7 1370 600C1368.3 613.3 1374.2 666.7 1375 700C1375.8 733.3 1379.2 766.7 1375 800C1370.8 833.3 1358.3 866.7 1350 900C1341.7 933.3 1320.8 979.2 1325 1000C1329.2 1020.8 1365 1016.7 1375 1025C1385 1033.3 1385.8 1044.2 1385 1050C1384.2 1055.8 1388.3 1058.7 1370 1060C1351.7 1061.3 1293.3 1063 1275 1058C1256.7 1053 1260 1043 1260 1030C1260 1017 1266.7 1005 1275 980C1283.3 955 1300.8 913.3 1310 880C1319.2 846.7 1330 810 1330 780C1330 750 1318.3 730 1310 700C1301.7 670 1289.2 633.3 1280 600C1270.8 566.7 1261.7 530 1255 500C1248.3 470 1250 448.3 1240 420C1230 391.7 1203.3 355 1195 330C1186.7 305 1189.2 285.8 1190 270C1190.8 254.2 1188.3 244.7 1200 235Z" /><path d="M1330 272C1341.7 282 1378.3 317.3 1400 332C1421.7 346.7 1433.3 355 1460 360C1486.7 365 1543.3 361.7 1560 362" fill="none" stroke="#000" stroke-width="37" stroke-linecap="round" stroke-linejoin="round"/><ellipse cx="1595" cy="378" rx="28" ry="22" transform="rotate(20 1595 378)" /><path d="M1225 400C1221.7 415 1215 464.2 1205 490C1195 515.8 1171.7 544.2 1165 555" fill="none" stroke="#000" stroke-width="33" stroke-linecap="round" stroke-linejoin="round"/><ellipse cx="1135" cy="578" rx="38" ry="20" transform="rotate(-15 1135 578)" /></g><g fill="#fff" stroke="none" filter="url(#er)"><ellipse cx="385" cy="112" rx="45" ry="75" transform="rotate(12 385 112)" /><path d="M345 200C359.2 191.7 391.7 190 405 200C418.3 210 420 235 425 260C430 285 432.5 323.3 435 350C437.5 376.7 439.5 385 440 420C440.5 455 439.7 513.3 438 560C436.3 606.7 433.8 643.3 430 700C426.2 756.7 419.2 847.5 415 900C410.8 952.5 397.5 994.2 405 1015C412.5 1035.8 447.5 1020 460 1025C472.5 1030 478.3 1039.2 480 1045C481.7 1050.8 502.5 1057.5 470 1060C437.5 1062.5 316.7 1070 285 1060C253.3 1050 280 1043.3 280 1000C280 956.7 283 863.3 285 800C287 736.7 291.2 660 292 620C292.8 580 292.8 578.3 290 560C287.2 541.7 275.8 530 275 510C274.2 490 280.8 470 285 440C289.2 410 294.2 361.7 300 330C305.8 298.3 312.5 271.7 320 250C327.5 228.3 330.8 208.3 345 200Z" /><path d="M310 300C305 304.2 293.7 319.2 280 325C266.3 330.8 236.7 333.3 228 335" fill="none" stroke="#fff" stroke-width="30" stroke-linecap="round" stroke-linejoin="round"/><ellipse cx="225" cy="332" rx="18" ry="16" /><path d="M432 410C440 423.3 466.2 468.3 480 490C493.8 511.7 509.2 531.7 515 540" fill="none" stroke="#fff" stroke-width="36" stroke-linecap="round" stroke-linejoin="round"/><ellipse cx="515" cy="540" rx="28" ry="28" /><path d="M662 72C675 73.3 715 74.8 740 80C765 85.2 800 99.2 812 103" fill="none" stroke="#fff" stroke-width="20" stroke-linecap="round" stroke-linejoin="round"/><path d="M715 70C706.7 62.5 719.5 46.3 725 40C730.5 33.7 740.8 31.2 748 32C755.2 32.8 763.5 36.2 768 45C772.5 53.8 783.8 80.8 775 85C766.2 89.2 723.3 77.5 715 70Z" /><path d="M690 85C704.5 77.5 761.7 85.8 775 95C788.3 104.2 775 127.5 770 140C765 152.5 756.7 164.7 745 170C733.3 175.3 709.5 177 700 172C690.5 167 689.7 154.5 688 140C686.3 125.5 675.5 92.5 690 85Z" /><path d="M705 185C717.5 180.8 735.8 180.8 750 185C764.2 189.2 780 197.5 790 210C800 222.5 805.8 240 810 260C814.2 280 810 306.7 815 330C820 353.3 832.8 376.7 840 400C847.2 423.3 855.5 443.3 858 470C860.5 496.7 858.8 540 855 560C851.2 580 841.7 588.3 835 590C828.3 591.7 818.3 588.3 815 570C811.7 551.7 818.3 505 815 480C811.7 455 799.2 406.7 795 420C790.8 433.3 791.7 513.3 790 560C788.3 606.7 785 643.3 785 700C785 756.7 787.8 846.7 790 900C792.2 953.3 798 993.7 798 1020C798 1046.3 829.7 1051.3 790 1058C750.3 1064.7 599.2 1063 560 1060C520.8 1057 551.7 1045.8 555 1040C558.3 1034.2 568.3 1028.7 580 1025C591.7 1021.3 616.7 1038.8 625 1018C633.3 997.2 630 944.7 630 900C630 855.3 625.8 793.3 625 750C624.2 706.7 621.7 671.7 625 640C628.3 608.3 642.5 591.7 645 560C647.5 528.3 641.2 488.3 640 450C638.8 411.7 635.5 363.3 638 330C640.5 296.7 648.8 270 655 250C661.2 230 666.7 220.8 675 210C683.3 199.2 692.5 189.2 705 185Z" /><path d="M648 430C636.7 438.3 600.5 465 580 480C559.5 495 534.2 513.3 525 520" fill="none" stroke="#fff" stroke-width="38" stroke-linecap="round" stroke-linejoin="round"/><ellipse cx="1227" cy="112" rx="58" ry="78" transform="rotate(-10 1227 112)" /><path d="M1200 235C1211.7 225.3 1243.3 212.8 1260 212C1276.7 211.2 1286.7 218.7 1300 230C1313.3 241.3 1329.2 256.7 1340 280C1350.8 303.3 1355 338.3 1365 370C1375 401.7 1387.5 438.3 1400 470C1412.5 501.7 1429.2 531.7 1440 560C1450.8 588.3 1459.2 613.3 1465 640C1470.8 666.7 1475.8 690 1475 720C1474.2 750 1464.2 789.2 1460 820C1455.8 850.8 1443.3 888.3 1450 905C1456.7 921.7 1490.8 914.2 1500 920C1509.2 925.8 1508.3 935 1505 940C1501.7 945 1497.5 949.2 1480 950C1462.5 950.8 1414.7 950 1400 945C1385.3 940 1389.5 930.8 1392 920C1394.5 909.2 1409.5 903.3 1415 880C1420.5 856.7 1424.2 810 1425 780C1425.8 750 1426.7 726.7 1420 700C1413.3 673.3 1393.3 636.7 1385 620C1376.7 603.3 1371.7 586.7 1370 600C1368.3 613.3 1374.2 666.7 1375 700C1375.8 733.3 1379.2 766.7 1375 800C1370.8 833.3 1358.3 866.7 1350 900C1341.7 933.3 1320.8 979.2 1325 1000C1329.2 1020.8 1365 1016.7 1375 1025C1385 1033.3 1385.8 1044.2 1385 1050C1384.2 1055.8 1388.3 1058.7 1370 1060C1351.7 1061.3 1293.3 1063 1275 1058C1256.7 1053 1260 1043 1260 1030C1260 1017 1266.7 1005 1275 980C1283.3 955 1300.8 913.3 1310 880C1319.2 846.7 1330 810 1330 780C1330 750 1318.3 730 1310 700C1301.7 670 1289.2 633.3 1280 600C1270.8 566.7 1261.7 530 1255 500C1248.3 470 1250 448.3 1240 420C1230 391.7 1203.3 355 1195 330C1186.7 305 1189.2 285.8 1190 270C1190.8 254.2 1188.3 244.7 1200 235Z" /><path d="M1330 272C1341.7 282 1378.3 317.3 1400 332C1421.7 346.7 1433.3 355 1460 360C1486.7 365 1543.3 361.7 1560 362" fill="none" stroke="#fff" stroke-width="34" stroke-linecap="round" stroke-linejoin="round"/><ellipse cx="1595" cy="378" rx="28" ry="22" transform="rotate(20 1595 378)" /><path d="M1225 400C1221.7 415 1215 464.2 1205 490C1195 515.8 1171.7 544.2 1165 555" fill="none" stroke="#fff" stroke-width="30" stroke-linecap="round" stroke-linejoin="round"/><ellipse cx="1135" cy="578" rx="38" ry="20" transform="rotate(-15 1135 578)" /></g><path d="M358 600L372 600L365 1010L340 1010Z" fill="#fff" stroke="#000" stroke-width="10"/><path d="M700 700L712 690L745 1012L680 1015Z" fill="#fff" stroke="#000" stroke-width="10"/></g>
<g transform="translate(1440 197) scale(0.125)"><g fill="#000" stroke="none"><ellipse cx="588" cy="88" rx="58" ry="75" transform="rotate(-20 588 88)" /><path d="M600 185C615 176.3 633.3 175.5 650 178C666.7 180.5 684.2 186.3 700 200C715.8 213.7 732.5 236.7 745 260C757.5 283.3 767.5 313.3 775 340C782.5 366.7 787.5 393.3 790 420C792.5 446.7 792.5 476.7 790 500C787.5 523.3 780 545 775 560C770 575 782.5 585 760 590C737.5 595 666.7 593.3 640 590C613.3 586.7 620 569.2 600 570C580 570.8 540 583.3 520 595C500 606.7 488.3 619.2 480 640C471.7 660.8 470.3 688.3 470 720C469.7 751.7 478 808.3 478 830C478 851.7 479.7 843.3 470 850C460.3 856.7 435.8 860.8 420 870C404.2 879.2 386.3 901.3 375 905C363.7 908.7 353.7 899.5 352 892C350.3 884.5 355.3 872 365 860C374.7 848 400.8 843.3 410 820C419.2 796.7 419.7 753.3 420 720C420.3 686.7 412 645 412 620C412 595 412 585 420 570C428 555 440 540.3 460 530C480 519.7 513.3 513 540 508C566.7 503 603.7 508 620 500C636.3 492 637.2 476.7 638 460C638.8 443.3 631.3 421.7 625 400C618.7 378.3 609.2 348.3 600 330C590.8 311.7 576.7 306.7 570 290C563.3 273.3 555 247.5 560 230C565 212.5 585 193.7 600 185Z" /><path d="M585 250C567.5 258.3 525.5 290 480 300C434.5 310 340 308.3 312 310" fill="none" stroke="#000" stroke-width="44" stroke-linecap="round" stroke-linejoin="round"/><path d="M585 610L795 608" fill="none" stroke="#000" stroke-width="46" stroke-linecap="round" stroke-linejoin="round"/><path d="M655 630L580 1040" fill="none" stroke="#000" stroke-width="30" stroke-linecap="round" stroke-linejoin="round"/><path d="M770 630L845 1040" fill="none" stroke="#000" stroke-width="30" stroke-linecap="round" stroke-linejoin="round"/><path d="M550 1058L580 1030L608 1058Z" /><path d="M815 1058L845 1030L872 1058Z" /><path d="M805 365C808.7 351.7 822.5 349.2 830 350C837.5 350.8 844.7 356.7 850 370C855.3 383.3 862 408.3 862 430C862 451.7 857.8 476.7 850 500C842.2 523.3 825 555 815 570C805 585 797.5 590 790 590C782.5 590 768.3 585 770 570C771.7 555 793.7 523.3 800 500C806.3 476.7 807.2 452.5 808 430C808.8 407.5 801.3 378.3 805 365Z" /></g></g>
<g transform="translate(1440 633.2) scale(0.125)"><g fill="#000" stroke="#000" stroke-width="3" stroke-linejoin="round"><ellipse cx="588" cy="88" rx="58" ry="75" transform="rotate(-20 588 88)" /><path d="M600 185C615 176.3 633.3 175.5 650 178C666.7 180.5 684.2 186.3 700 200C715.8 213.7 732.5 236.7 745 260C757.5 283.3 767.5 313.3 775 340C782.5 366.7 787.5 393.3 790 420C792.5 446.7 792.5 476.7 790 500C787.5 523.3 780 545 775 560C770 575 782.5 585 760 590C737.5 595 666.7 593.3 640 590C613.3 586.7 620 569.2 600 570C580 570.8 540 583.3 520 595C500 606.7 488.3 619.2 480 640C471.7 660.8 470.3 688.3 470 720C469.7 751.7 478 808.3 478 830C478 851.7 479.7 843.3 470 850C460.3 856.7 435.8 860.8 420 870C404.2 879.2 386.3 901.3 375 905C363.7 908.7 353.7 899.5 352 892C350.3 884.5 355.3 872 365 860C374.7 848 400.8 843.3 410 820C419.2 796.7 419.7 753.3 420 720C420.3 686.7 412 645 412 620C412 595 412 585 420 570C428 555 440 540.3 460 530C480 519.7 513.3 513 540 508C566.7 503 603.7 508 620 500C636.3 492 637.2 476.7 638 460C638.8 443.3 631.3 421.7 625 400C618.7 378.3 609.2 348.3 600 330C590.8 311.7 576.7 306.7 570 290C563.3 273.3 555 247.5 560 230C565 212.5 585 193.7 600 185Z" /><path d="M585 250C567.5 258.3 525.5 290 480 300C434.5 310 340 308.3 312 310" fill="none" stroke="#000" stroke-width="47" stroke-linecap="round" stroke-linejoin="round"/><path d="M585 610L795 608" fill="none" stroke="#000" stroke-width="49" stroke-linecap="round" stroke-linejoin="round"/><path d="M655 630L580 1040" fill="none" stroke="#000" stroke-width="33" stroke-linecap="round" stroke-linejoin="round"/><path d="M770 630L845 1040" fill="none" stroke="#000" stroke-width="33" stroke-linecap="round" stroke-linejoin="round"/><path d="M550 1058L580 1030L608 1058Z" /><path d="M815 1058L845 1030L872 1058Z" /><path d="M805 365C808.7 351.7 822.5 349.2 830 350C837.5 350.8 844.7 356.7 850 370C855.3 383.3 862 408.3 862 430C862 451.7 857.8 476.7 850 500C842.2 523.3 825 555 815 570C805 585 797.5 590 790 590C782.5 590 768.3 585 770 570C771.7 555 793.7 523.3 800 500C806.3 476.7 807.2 452.5 808 430C808.8 407.5 801.3 378.3 805 365Z" /></g><g fill="#fff" stroke="none" filter="url(#er)"><ellipse cx="588" cy="88" rx="58" ry="75" transform="rotate(-20 588 88)" /><path d="M600 185C615 176.3 633.3 175.5 650 178C666.7 180.5 684.2 186.3 700 200C715.8 213.7 732.5 236.7 745 260C757.5 283.3 767.5 313.3 775 340C782.5 366.7 787.5 393.3 790 420C792.5 446.7 792.5 476.7 790 500C787.5 523.3 780 545 775 560C770 575 782.5 585 760 590C737.5 595 666.7 593.3 640 590C613.3 586.7 620 569.2 600 570C580 570.8 540 583.3 520 595C500 606.7 488.3 619.2 480 640C471.7 660.8 470.3 688.3 470 720C469.7 751.7 478 808.3 478 830C478 851.7 479.7 843.3 470 850C460.3 856.7 435.8 860.8 420 870C404.2 879.2 386.3 901.3 375 905C363.7 908.7 353.7 899.5 352 892C350.3 884.5 355.3 872 365 860C374.7 848 400.8 843.3 410 820C419.2 796.7 419.7 753.3 420 720C420.3 686.7 412 645 412 620C412 595 412 585 420 570C428 555 440 540.3 460 530C480 519.7 513.3 513 540 508C566.7 503 603.7 508 620 500C636.3 492 637.2 476.7 638 460C638.8 443.3 631.3 421.7 625 400C618.7 378.3 609.2 348.3 600 330C590.8 311.7 576.7 306.7 570 290C563.3 273.3 555 247.5 560 230C565 212.5 585 193.7 600 185Z" /><path d="M585 250C567.5 258.3 525.5 290 480 300C434.5 310 340 308.3 312 310" fill="none" stroke="#fff" stroke-width="44" stroke-linecap="round" stroke-linejoin="round"/><path d="M585 610L795 608" fill="none" stroke="#fff" stroke-width="46" stroke-linecap="round" stroke-linejoin="round"/><path d="M655 630L580 1040" fill="none" stroke="#fff" stroke-width="30" stroke-linecap="round" stroke-linejoin="round"/><path d="M770 630L845 1040" fill="none" stroke="#fff" stroke-width="30" stroke-linecap="round" stroke-linejoin="round"/><path d="M550 1058L580 1030L608 1058Z" /><path d="M815 1058L845 1030L872 1058Z" /><path d="M805 365C808.7 351.7 822.5 349.2 830 350C837.5 350.8 844.7 356.7 850 370C855.3 383.3 862 408.3 862 430C862 451.7 857.8 476.7 850 500C842.2 523.3 825 555 815 570C805 585 797.5 590 790 590C782.5 590 768.3 585 770 570C771.7 555 793.7 523.3 800 500C806.3 476.7 807.2 452.5 808 430C808.8 407.5 801.3 378.3 805 365Z" /></g></g>
<g transform="translate(270 415) scale(0.125)"><g fill="#000" stroke="none"><path d="M340 75C343.3 68.3 356.7 64.5 365 65C373.3 65.5 386.7 71.3 390 78C393.3 84.7 392.5 100.5 385 105C377.5 109.5 352.5 110 345 105C337.5 100 336.7 81.7 340 75Z" /><ellipse cx="360" cy="148" rx="45" ry="48" /><path d="M320 205C339.2 196.7 370 194.2 385 200C400 205.8 404.2 225 410 240C415.8 255 422.5 266.7 420 290C417.5 313.3 400.8 350 395 380C389.2 410 387.5 440 385 470C382.5 500 379.2 530 380 560C380.8 590 386.7 620 390 650C393.3 680 399.2 719.2 400 740C400.8 760.8 400.8 767.5 395 775C389.2 782.5 372.5 764.2 365 785C357.5 805.8 354.2 860.8 350 900C345.8 939.2 331.7 997.5 340 1020C348.3 1042.5 387 1030 400 1035C413 1040 417.2 1045.8 418 1050C418.8 1054.2 434.7 1058.3 405 1060C375.3 1061.7 269.5 1063.3 240 1060C210.5 1056.7 229.7 1066.7 228 1040C226.3 1013.3 228.8 945 230 900C231.2 855 240.8 790.8 235 770C229.2 749.2 206.7 775.8 195 775C183.3 774.2 170.5 774.2 165 765C159.5 755.8 156.2 739.2 162 720C167.8 700.8 189.5 676.7 200 650C210.5 623.3 220.3 598.3 225 560C229.7 521.7 225.5 460 228 420C230.5 380 233 348.3 240 320C247 291.7 256.7 269.2 270 250C283.3 230.8 300.8 213.3 320 205Z" /><path d="M405 258L438 348" fill="none" stroke="#000" stroke-width="42" stroke-linecap="round" stroke-linejoin="round"/><path d="M438 350L512 198" fill="none" stroke="#000" stroke-width="30" stroke-linecap="round" stroke-linejoin="round"/><path d="M385 500L458 576" fill="none" stroke="#000" stroke-width="34" stroke-linecap="round" stroke-linejoin="round"/><path d="M580 80C578.3 73.7 597.5 62.8 605 62C612.5 61.2 623.3 68.7 625 75C626.7 81.3 622.5 99.2 615 100C607.5 100.8 581.7 86.3 580 80Z" /><ellipse cx="618" cy="135" rx="35" ry="46" transform="rotate(-10 618 135)" /><path d="M640 170C646.2 164.2 655 155 665 165C675 175 685.8 204.2 700 230C714.2 255.8 735 290 750 320C765 350 782.5 380 790 410C797.5 440 797.5 468.3 795 500C792.5 531.7 783.3 558.3 775 600C766.7 641.7 755 700 745 750C735 800 724.2 856.7 715 900C705.8 943.3 695 984.2 690 1010C685 1035.8 700 1046.7 685 1055C670 1063.3 615.5 1061.7 600 1060C584.5 1058.3 585.3 1050 592 1045C598.7 1040 629.5 1045.8 640 1030C650.5 1014.2 648.3 988.3 655 950C661.7 911.7 672.5 850 680 800C687.5 750 695.8 690 700 650C704.2 610 706.7 590 705 560C703.3 530 697.5 500 690 470C682.5 440 668.3 403.3 660 380C651.7 356.7 645.8 351.7 640 330C634.2 308.3 627 271.7 625 250C623 228.3 625.5 213.3 628 200C630.5 186.7 633.8 175.8 640 170Z" /><path d="M640 330C635 337.5 617.2 375 610 375C602.8 375 599.2 349.5 597 330C594.8 310.5 597 270 597 258" fill="none" stroke="#000" stroke-width="28" stroke-linecap="round" stroke-linejoin="round"/><ellipse cx="1265" cy="70" rx="48" ry="72" /><path d="M1240 120L1215 138" fill="none" stroke="#000" stroke-width="14" stroke-linecap="round" stroke-linejoin="round"/><path d="M1200 150C1220.8 141.7 1270 141.7 1290 150C1310 158.3 1314.2 175 1320 200C1325.8 225 1325.8 266.7 1325 300C1324.2 333.3 1318.3 366.7 1315 400C1311.7 433.3 1306.7 463.3 1305 500C1303.3 536.7 1306.7 588.3 1305 620C1303.3 651.7 1301.7 673.3 1295 690C1288.3 706.7 1271.7 701.7 1265 720C1258.3 738.3 1257.5 753.3 1255 800C1252.5 846.7 1250 960 1250 1000C1250 1040 1246.7 1032.5 1255 1040C1263.3 1047.5 1291.7 1041.7 1300 1045C1308.3 1048.3 1317.5 1057.5 1305 1060C1292.5 1062.5 1239.2 1070 1225 1060C1210.8 1050 1220.5 1035 1220 1000C1219.5 965 1222.3 892.5 1222 850C1221.7 807.5 1224.2 762.5 1218 745C1211.8 727.5 1194.7 727.5 1185 745C1175.3 762.5 1165.8 807.5 1160 850C1154.2 892.5 1150.8 968.3 1150 1000C1149.2 1031.7 1146.7 1032.5 1155 1040C1163.3 1047.5 1191.7 1041.7 1200 1045C1208.3 1048.3 1217.5 1057.5 1205 1060C1192.5 1062.5 1139.2 1070 1125 1060C1110.8 1050 1119.2 1035 1120 1000C1120.8 965 1127.5 892.5 1130 850C1132.5 807.5 1139.2 766.7 1135 745C1130.8 723.3 1112.5 735.8 1105 720C1097.5 704.2 1092.8 680 1090 650C1087.2 620 1086.3 581.7 1088 540C1089.7 498.3 1093 443.3 1100 400C1107 356.7 1119.2 313.3 1130 280C1140.8 246.7 1153.3 221.7 1165 200C1176.7 178.3 1179.2 158.3 1200 150Z" /><path d="M1315 410C1325.8 415 1360.8 435.3 1380 440C1399.2 444.7 1421.7 438.3 1430 438" fill="none" stroke="#000" stroke-width="28" stroke-linecap="round" stroke-linejoin="round"/><ellipse cx="1435" cy="440" rx="22" ry="18" /><ellipse cx="1522" cy="102" rx="42" ry="78" /><path d="M1500 195C1515.8 191.7 1530.8 189.2 1545 195C1559.2 200.8 1574.2 214.2 1585 230C1595.8 245.8 1605.8 265 1610 290C1614.2 315 1613.3 355 1610 380C1606.7 405 1590 420 1590 440C1590 460 1604.2 483.3 1610 500C1615.8 516.7 1616.7 525 1625 540C1633.3 555 1652.2 573.3 1660 590C1667.8 606.7 1672.8 623.3 1672 640C1671.2 656.7 1667 679.2 1655 690C1643 700.8 1609.2 686.7 1600 705C1590.8 723.3 1600.8 750.8 1600 800C1599.2 849.2 1591.7 960.8 1595 1000C1598.3 1039.2 1616.7 1025 1620 1035C1623.3 1045 1622.5 1055.8 1615 1060C1607.5 1064.2 1582.8 1065 1575 1060C1567.2 1055 1568 1056.7 1568 1030C1568 1003.3 1576.3 945 1575 900C1573.7 855 1564.2 792.5 1560 760C1555.8 727.5 1554.2 705 1550 705C1545.8 705 1540.8 727.5 1535 760C1529.2 792.5 1517.5 856.7 1515 900C1512.5 943.3 1515 996.7 1520 1020C1525 1043.3 1541.7 1033.3 1545 1040C1548.3 1046.7 1550.8 1056.7 1540 1060C1529.2 1063.3 1490.8 1064.2 1480 1060C1469.2 1055.8 1473.3 1061.7 1475 1035C1476.7 1008.3 1487.5 955 1490 900C1492.5 845 1500 739.2 1490 705C1480 670.8 1443 705.8 1430 695C1417 684.2 1413.7 657.5 1412 640C1410.3 622.5 1412.8 605.8 1420 590C1427.2 574.2 1444.2 556.7 1455 545C1465.8 533.3 1481.7 535.8 1485 520C1488.3 504.2 1478.3 473.3 1475 450C1471.7 426.7 1472.5 388.3 1465 380C1457.5 371.7 1440.8 390 1430 400C1419.2 410 1408.3 435 1400 440C1391.7 445 1385.8 438.3 1380 430C1374.2 421.7 1365 408.3 1365 390C1365 371.7 1372.5 341.7 1380 320C1387.5 298.3 1398.3 277.5 1410 260C1421.7 242.5 1435 225.8 1450 215C1465 204.2 1484.2 198.3 1500 195Z" /><path d="M1600 290C1610 300 1633.3 335.8 1660 350C1686.7 364.2 1743.3 370.8 1760 375" fill="none" stroke="#000" stroke-width="34" stroke-linecap="round" stroke-linejoin="round"/><ellipse cx="1790" cy="375" rx="35" ry="24" /><path d="M1362 598C1373.3 588.3 1410.3 554.3 1430 540C1449.7 525.7 1471.7 516.7 1480 512" fill="none" stroke="#000" stroke-width="16" stroke-linecap="round" stroke-linejoin="round"/><path d="M1400 540C1408.3 535.3 1435 518.3 1450 512C1465 505.7 1483.3 503.7 1490 502" fill="none" stroke="#000" stroke-width="13" stroke-linecap="round" stroke-linejoin="round"/></g><path d="M275 800L300 770L312 800L300 1020L268 1020Z" fill="#fff"/></g>
<g transform="translate(270 851.2) scale(0.125)"><g fill="#000" stroke="#000" stroke-width="3" stroke-linejoin="round"><path d="M340 75C343.3 68.3 356.7 64.5 365 65C373.3 65.5 386.7 71.3 390 78C393.3 84.7 392.5 100.5 385 105C377.5 109.5 352.5 110 345 105C337.5 100 336.7 81.7 340 75Z" /><ellipse cx="360" cy="148" rx="45" ry="48" /><path d="M320 205C339.2 196.7 370 194.2 385 200C400 205.8 404.2 225 410 240C415.8 255 422.5 266.7 420 290C417.5 313.3 400.8 350 395 380C389.2 410 387.5 440 385 470C382.5 500 379.2 530 380 560C380.8 590 386.7 620 390 650C393.3 680 399.2 719.2 400 740C400.8 760.8 400.8 767.5 395 775C389.2 782.5 372.5 764.2 365 785C357.5 805.8 354.2 860.8 350 900C345.8 939.2 331.7 997.5 340 1020C348.3 1042.5 387 1030 400 1035C413 1040 417.2 1045.8 418 1050C418.8 1054.2 434.7 1058.3 405 1060C375.3 1061.7 269.5 1063.3 240 1060C210.5 1056.7 229.7 1066.7 228 1040C226.3 1013.3 228.8 945 230 900C231.2 855 240.8 790.8 235 770C229.2 749.2 206.7 775.8 195 775C183.3 774.2 170.5 774.2 165 765C159.5 755.8 156.2 739.2 162 720C167.8 700.8 189.5 676.7 200 650C210.5 623.3 220.3 598.3 225 560C229.7 521.7 225.5 460 228 420C230.5 380 233 348.3 240 320C247 291.7 256.7 269.2 270 250C283.3 230.8 300.8 213.3 320 205Z" /><path d="M405 258L438 348" fill="none" stroke="#000" stroke-width="45" stroke-linecap="round" stroke-linejoin="round"/><path d="M438 350L512 198" fill="none" stroke="#000" stroke-width="33" stroke-linecap="round" stroke-linejoin="round"/><path d="M385 500L458 576" fill="none" stroke="#000" stroke-width="37" stroke-linecap="round" stroke-linejoin="round"/><path d="M580 80C578.3 73.7 597.5 62.8 605 62C612.5 61.2 623.3 68.7 625 75C626.7 81.3 622.5 99.2 615 100C607.5 100.8 581.7 86.3 580 80Z" /><ellipse cx="618" cy="135" rx="35" ry="46" transform="rotate(-10 618 135)" /><path d="M640 170C646.2 164.2 655 155 665 165C675 175 685.8 204.2 700 230C714.2 255.8 735 290 750 320C765 350 782.5 380 790 410C797.5 440 797.5 468.3 795 500C792.5 531.7 783.3 558.3 775 600C766.7 641.7 755 700 745 750C735 800 724.2 856.7 715 900C705.8 943.3 695 984.2 690 1010C685 1035.8 700 1046.7 685 1055C670 1063.3 615.5 1061.7 600 1060C584.5 1058.3 585.3 1050 592 1045C598.7 1040 629.5 1045.8 640 1030C650.5 1014.2 648.3 988.3 655 950C661.7 911.7 672.5 850 680 800C687.5 750 695.8 690 700 650C704.2 610 706.7 590 705 560C703.3 530 697.5 500 690 470C682.5 440 668.3 403.3 660 380C651.7 356.7 645.8 351.7 640 330C634.2 308.3 627 271.7 625 250C623 228.3 625.5 213.3 628 200C630.5 186.7 633.8 175.8 640 170Z" /><path d="M640 330C635 337.5 617.2 375 610 375C602.8 375 599.2 349.5 597 330C594.8 310.5 597 270 597 258" fill="none" stroke="#000" stroke-width="31" stroke-linecap="round" stroke-linejoin="round"/><ellipse cx="1265" cy="70" rx="48" ry="72" /><path d="M1240 120L1215 138" fill="none" stroke="#000" stroke-width="17" stroke-linecap="round" stroke-linejoin="round"/><path d="M1200 150C1220.8 141.7 1270 141.7 1290 150C1310 158.3 1314.2 175 1320 200C1325.8 225 1325.8 266.7 1325 300C1324.2 333.3 1318.3 366.7 1315 400C1311.7 433.3 1306.7 463.3 1305 500C1303.3 536.7 1306.7 588.3 1305 620C1303.3 651.7 1301.7 673.3 1295 690C1288.3 706.7 1271.7 701.7 1265 720C1258.3 738.3 1257.5 753.3 1255 800C1252.5 846.7 1250 960 1250 1000C1250 1040 1246.7 1032.5 1255 1040C1263.3 1047.5 1291.7 1041.7 1300 1045C1308.3 1048.3 1317.5 1057.5 1305 1060C1292.5 1062.5 1239.2 1070 1225 1060C1210.8 1050 1220.5 1035 1220 1000C1219.5 965 1222.3 892.5 1222 850C1221.7 807.5 1224.2 762.5 1218 745C1211.8 727.5 1194.7 727.5 1185 745C1175.3 762.5 1165.8 807.5 1160 850C1154.2 892.5 1150.8 968.3 1150 1000C1149.2 1031.7 1146.7 1032.5 1155 1040C1163.3 1047.5 1191.7 1041.7 1200 1045C1208.3 1048.3 1217.5 1057.5 1205 1060C1192.5 1062.5 1139.2 1070 1125 1060C1110.8 1050 1119.2 1035 1120 1000C1120.8 965 1127.5 892.5 1130 850C1132.5 807.5 1139.2 766.7 1135 745C1130.8 723.3 1112.5 735.8 1105 720C1097.5 704.2 1092.8 680 1090 650C1087.2 620 1086.3 581.7 1088 540C1089.7 498.3 1093 443.3 1100 400C1107 356.7 1119.2 313.3 1130 280C1140.8 246.7 1153.3 221.7 1165 200C1176.7 178.3 1179.2 158.3 1200 150Z" /><path d="M1315 410C1325.8 415 1360.8 435.3 1380 440C1399.2 444.7 1421.7 438.3 1430 438" fill="none" stroke="#000" stroke-width="31" stroke-linecap="round" stroke-linejoin="round"/><ellipse cx="1435" cy="440" rx="22" ry="18" /><ellipse cx="1522" cy="102" rx="42" ry="78" /><path d="M1500 195C1515.8 191.7 1530.8 189.2 1545 195C1559.2 200.8 1574.2 214.2 1585 230C1595.8 245.8 1605.8 265 1610 290C1614.2 315 1613.3 355 1610 380C1606.7 405 1590 420 1590 440C1590 460 1604.2 483.3 1610 500C1615.8 516.7 1616.7 525 1625 540C1633.3 555 1652.2 573.3 1660 590C1667.8 606.7 1672.8 623.3 1672 640C1671.2 656.7 1667 679.2 1655 690C1643 700.8 1609.2 686.7 1600 705C1590.8 723.3 1600.8 750.8 1600 800C1599.2 849.2 1591.7 960.8 1595 1000C1598.3 1039.2 1616.7 1025 1620 1035C1623.3 1045 1622.5 1055.8 1615 1060C1607.5 1064.2 1582.8 1065 1575 1060C1567.2 1055 1568 1056.7 1568 1030C1568 1003.3 1576.3 945 1575 900C1573.7 855 1564.2 792.5 1560 760C1555.8 727.5 1554.2 705 1550 705C1545.8 705 1540.8 727.5 1535 760C1529.2 792.5 1517.5 856.7 1515 900C1512.5 943.3 1515 996.7 1520 1020C1525 1043.3 1541.7 1033.3 1545 1040C1548.3 1046.7 1550.8 1056.7 1540 1060C1529.2 1063.3 1490.8 1064.2 1480 1060C1469.2 1055.8 1473.3 1061.7 1475 1035C1476.7 1008.3 1487.5 955 1490 900C1492.5 845 1500 739.2 1490 705C1480 670.8 1443 705.8 1430 695C1417 684.2 1413.7 657.5 1412 640C1410.3 622.5 1412.8 605.8 1420 590C1427.2 574.2 1444.2 556.7 1455 545C1465.8 533.3 1481.7 535.8 1485 520C1488.3 504.2 1478.3 473.3 1475 450C1471.7 426.7 1472.5 388.3 1465 380C1457.5 371.7 1440.8 390 1430 400C1419.2 410 1408.3 435 1400 440C1391.7 445 1385.8 438.3 1380 430C1374.2 421.7 1365 408.3 1365 390C1365 371.7 1372.5 341.7 1380 320C1387.5 298.3 1398.3 277.5 1410 260C1421.7 242.5 1435 225.8 1450 215C1465 204.2 1484.2 198.3 1500 195Z" /><path d="M1600 290C1610 300 1633.3 335.8 1660 350C1686.7 364.2 1743.3 370.8 1760 375" fill="none" stroke="#000" stroke-width="37" stroke-linecap="round" stroke-linejoin="round"/><ellipse cx="1790" cy="375" rx="35" ry="24" /><path d="M1362 598C1373.3 588.3 1410.3 554.3 1430 540C1449.7 525.7 1471.7 516.7 1480 512" fill="none" stroke="#000" stroke-width="19" stroke-linecap="round" stroke-linejoin="round"/><path d="M1400 540C1408.3 535.3 1435 518.3 1450 512C1465 505.7 1483.3 503.7 1490 502" fill="none" stroke="#000" stroke-width="16" stroke-linecap="round" stroke-linejoin="round"/></g><g fill="#fff" stroke="none" filter="url(#er)"><path d="M340 75C343.3 68.3 356.7 64.5 365 65C373.3 65.5 386.7 71.3 390 78C393.3 84.7 392.5 100.5 385 105C377.5 109.5 352.5 110 345 105C337.5 100 336.7 81.7 340 75Z" /><ellipse cx="360" cy="148" rx="45" ry="48" /><path d="M320 205C339.2 196.7 370 194.2 385 200C400 205.8 404.2 225 410 240C415.8 255 422.5 266.7 420 290C417.5 313.3 400.8 350 395 380C389.2 410 387.5 440 385 470C382.5 500 379.2 530 380 560C380.8 590 386.7 620 390 650C393.3 680 399.2 719.2 400 740C400.8 760.8 400.8 767.5 395 775C389.2 782.5 372.5 764.2 365 785C357.5 805.8 354.2 860.8 350 900C345.8 939.2 331.7 997.5 340 1020C348.3 1042.5 387 1030 400 1035C413 1040 417.2 1045.8 418 1050C418.8 1054.2 434.7 1058.3 405 1060C375.3 1061.7 269.5 1063.3 240 1060C210.5 1056.7 229.7 1066.7 228 1040C226.3 1013.3 228.8 945 230 900C231.2 855 240.8 790.8 235 770C229.2 749.2 206.7 775.8 195 775C183.3 774.2 170.5 774.2 165 765C159.5 755.8 156.2 739.2 162 720C167.8 700.8 189.5 676.7 200 650C210.5 623.3 220.3 598.3 225 560C229.7 521.7 225.5 460 228 420C230.5 380 233 348.3 240 320C247 291.7 256.7 269.2 270 250C283.3 230.8 300.8 213.3 320 205Z" /><path d="M405 258L438 348" fill="none" stroke="#fff" stroke-width="42" stroke-linecap="round" stroke-linejoin="round"/><path d="M438 350L512 198" fill="none" stroke="#fff" stroke-width="30" stroke-linecap="round" stroke-linejoin="round"/><path d="M385 500L458 576" fill="none" stroke="#fff" stroke-width="34" stroke-linecap="round" stroke-linejoin="round"/><path d="M580 80C578.3 73.7 597.5 62.8 605 62C612.5 61.2 623.3 68.7 625 75C626.7 81.3 622.5 99.2 615 100C607.5 100.8 581.7 86.3 580 80Z" /><ellipse cx="618" cy="135" rx="35" ry="46" transform="rotate(-10 618 135)" /><path d="M640 170C646.2 164.2 655 155 665 165C675 175 685.8 204.2 700 230C714.2 255.8 735 290 750 320C765 350 782.5 380 790 410C797.5 440 797.5 468.3 795 500C792.5 531.7 783.3 558.3 775 600C766.7 641.7 755 700 745 750C735 800 724.2 856.7 715 900C705.8 943.3 695 984.2 690 1010C685 1035.8 700 1046.7 685 1055C670 1063.3 615.5 1061.7 600 1060C584.5 1058.3 585.3 1050 592 1045C598.7 1040 629.5 1045.8 640 1030C650.5 1014.2 648.3 988.3 655 950C661.7 911.7 672.5 850 680 800C687.5 750 695.8 690 700 650C704.2 610 706.7 590 705 560C703.3 530 697.5 500 690 470C682.5 440 668.3 403.3 660 380C651.7 356.7 645.8 351.7 640 330C634.2 308.3 627 271.7 625 250C623 228.3 625.5 213.3 628 200C630.5 186.7 633.8 175.8 640 170Z" /><path d="M640 330C635 337.5 617.2 375 610 375C602.8 375 599.2 349.5 597 330C594.8 310.5 597 270 597 258" fill="none" stroke="#fff" stroke-width="28" stroke-linecap="round" stroke-linejoin="round"/><ellipse cx="1265" cy="70" rx="48" ry="72" /><path d="M1240 120L1215 138" fill="none" stroke="#fff" stroke-width="14" stroke-linecap="round" stroke-linejoin="round"/><path d="M1200 150C1220.8 141.7 1270 141.7 1290 150C1310 158.3 1314.2 175 1320 200C1325.8 225 1325.8 266.7 1325 300C1324.2 333.3 1318.3 366.7 1315 400C1311.7 433.3 1306.7 463.3 1305 500C1303.3 536.7 1306.7 588.3 1305 620C1303.3 651.7 1301.7 673.3 1295 690C1288.3 706.7 1271.7 701.7 1265 720C1258.3 738.3 1257.5 753.3 1255 800C1252.5 846.7 1250 960 1250 1000C1250 1040 1246.7 1032.5 1255 1040C1263.3 1047.5 1291.7 1041.7 1300 1045C1308.3 1048.3 1317.5 1057.5 1305 1060C1292.5 1062.5 1239.2 1070 1225 1060C1210.8 1050 1220.5 1035 1220 1000C1219.5 965 1222.3 892.5 1222 850C1221.7 807.5 1224.2 762.5 1218 745C1211.8 727.5 1194.7 727.5 1185 745C1175.3 762.5 1165.8 807.5 1160 850C1154.2 892.5 1150.8 968.3 1150 1000C1149.2 1031.7 1146.7 1032.5 1155 1040C1163.3 1047.5 1191.7 1041.7 1200 1045C1208.3 1048.3 1217.5 1057.5 1205 1060C1192.5 1062.5 1139.2 1070 1125 1060C1110.8 1050 1119.2 1035 1120 1000C1120.8 965 1127.5 892.5 1130 850C1132.5 807.5 1139.2 766.7 1135 745C1130.8 723.3 1112.5 735.8 1105 720C1097.5 704.2 1092.8 680 1090 650C1087.2 620 1086.3 581.7 1088 540C1089.7 498.3 1093 443.3 1100 400C1107 356.7 1119.2 313.3 1130 280C1140.8 246.7 1153.3 221.7 1165 200C1176.7 178.3 1179.2 158.3 1200 150Z" /><path d="M1315 410C1325.8 415 1360.8 435.3 1380 440C1399.2 444.7 1421.7 438.3 1430 438" fill="none" stroke="#fff" stroke-width="28" stroke-linecap="round" stroke-linejoin="round"/><ellipse cx="1435" cy="440" rx="22" ry="18" /><ellipse cx="1522" cy="102" rx="42" ry="78" /><path d="M1500 195C1515.8 191.7 1530.8 189.2 1545 195C1559.2 200.8 1574.2 214.2 1585 230C1595.8 245.8 1605.8 265 1610 290C1614.2 315 1613.3 355 1610 380C1606.7 405 1590 420 1590 440C1590 460 1604.2 483.3 1610 500C1615.8 516.7 1616.7 525 1625 540C1633.3 555 1652.2 573.3 1660 590C1667.8 606.7 1672.8 623.3 1672 640C1671.2 656.7 1667 679.2 1655 690C1643 700.8 1609.2 686.7 1600 705C1590.8 723.3 1600.8 750.8 1600 800C1599.2 849.2 1591.7 960.8 1595 1000C1598.3 1039.2 1616.7 1025 1620 1035C1623.3 1045 1622.5 1055.8 1615 1060C1607.5 1064.2 1582.8 1065 1575 1060C1567.2 1055 1568 1056.7 1568 1030C1568 1003.3 1576.3 945 1575 900C1573.7 855 1564.2 792.5 1560 760C1555.8 727.5 1554.2 705 1550 705C1545.8 705 1540.8 727.5 1535 760C1529.2 792.5 1517.5 856.7 1515 900C1512.5 943.3 1515 996.7 1520 1020C1525 1043.3 1541.7 1033.3 1545 1040C1548.3 1046.7 1550.8 1056.7 1540 1060C1529.2 1063.3 1490.8 1064.2 1480 1060C1469.2 1055.8 1473.3 1061.7 1475 1035C1476.7 1008.3 1487.5 955 1490 900C1492.5 845 1500 739.2 1490 705C1480 670.8 1443 705.8 1430 695C1417 684.2 1413.7 657.5 1412 640C1410.3 622.5 1412.8 605.8 1420 590C1427.2 574.2 1444.2 556.7 1455 545C1465.8 533.3 1481.7 535.8 1485 520C1488.3 504.2 1478.3 473.3 1475 450C1471.7 426.7 1472.5 388.3 1465 380C1457.5 371.7 1440.8 390 1430 400C1419.2 410 1408.3 435 1400 440C1391.7 445 1385.8 438.3 1380 430C1374.2 421.7 1365 408.3 1365 390C1365 371.7 1372.5 341.7 1380 320C1387.5 298.3 1398.3 277.5 1410 260C1421.7 242.5 1435 225.8 1450 215C1465 204.2 1484.2 198.3 1500 195Z" /><path d="M1600 290C1610 300 1633.3 335.8 1660 350C1686.7 364.2 1743.3 370.8 1760 375" fill="none" stroke="#fff" stroke-width="34" stroke-linecap="round" stroke-linejoin="round"/><ellipse cx="1790" cy="375" rx="35" ry="24" /><path d="M1362 598C1373.3 588.3 1410.3 554.3 1430 540C1449.7 525.7 1471.7 516.7 1480 512" fill="none" stroke="#fff" stroke-width="16" stroke-linecap="round" stroke-linejoin="round"/><path d="M1400 540C1408.3 535.3 1435 518.3 1450 512C1465 505.7 1483.3 503.7 1490 502" fill="none" stroke="#fff" stroke-width="13" stroke-linecap="round" stroke-linejoin="round"/></g><path d="M275 800L300 770L312 800L300 1020L268 1020Z" fill="#fff" stroke="#000" stroke-width="10"/><path d="M1440 528C1453.3 530 1491.3 541.3 1520 540C1548.7 538.7 1596.7 523.3 1612 520" fill="none" stroke="#000" stroke-width="8" stroke-linecap="round"/><path d="M1440 550C1453.3 552 1488.7 563.3 1520 562C1551.3 560.7 1610 545.3 1628 542" fill="none" stroke="#000" stroke-width="8" stroke-linecap="round"/></g>
<g transform="translate(500 415) scale(0.125)"><g fill="#000" stroke="none"><ellipse cx="582" cy="150" rx="48" ry="70" transform="rotate(30 582 150)" /><path d="M325 250C341.7 231.7 370.8 217.5 400 210C429.2 202.5 475.8 202.5 500 205C524.2 207.5 535 214.2 545 225C555 235.8 560.8 250.8 560 270C559.2 289.2 553.3 315 540 340C526.7 365 500 393.3 480 420C460 446.7 435.8 475 420 500C404.2 525 392 545 385 570C378 595 378 611.7 378 650C378 688.3 385 750 385 800C385 850 380.2 915 378 950C375.8 985 368.3 995.8 372 1010C375.7 1024.2 396.2 1027 400 1035C403.8 1043 408.3 1053.8 395 1058C381.7 1062.2 333.8 1064.7 320 1060C306.2 1055.3 311.2 1056.7 312 1030C312.8 1003.3 323.3 946.7 325 900C326.7 853.3 324.5 791.7 322 750C319.5 708.3 316.2 655 310 650C303.8 645 291.3 686.7 285 720C278.7 753.3 275.8 802.5 272 850C268.2 897.5 257.3 975 262 1005C266.7 1035 293.7 1021.2 300 1030C306.3 1038.8 315.8 1053.3 300 1058C284.2 1062.7 221.7 1064.3 205 1058C188.3 1051.7 199.2 1046.3 200 1020C200.8 993.7 205.8 953.3 210 900C214.2 846.7 221.3 756.7 225 700C228.7 643.3 229.5 600 232 560C234.5 520 232.8 488.3 240 460C247.2 431.7 265 413.3 275 390C285 366.7 291.7 343.3 300 320C308.3 296.7 308.3 268.3 325 250Z" /><path d="M555 285C569.2 285.8 615.8 294.2 640 290C664.2 285.8 690 265 700 260" fill="none" stroke="#000" stroke-width="42" stroke-linecap="round" stroke-linejoin="round"/><path d="M700 260C707.5 251.7 734.2 225.8 745 210C755.8 194.2 761.7 172.5 765 165" fill="none" stroke="#000" stroke-width="26" stroke-linecap="round" stroke-linejoin="round"/><ellipse cx="775" cy="140" rx="30" ry="45" transform="rotate(15 775 140)" /><ellipse cx="1262" cy="158" rx="48" ry="66" /><path d="M1215 245C1230 235.8 1255.8 239.2 1275 245C1294.2 250.8 1314.2 267.5 1330 280C1345.8 292.5 1361.7 296.7 1370 320C1378.3 343.3 1385 396.7 1380 420C1375 443.3 1348.3 438.3 1340 460C1331.7 481.7 1328.3 523.3 1330 550C1331.7 576.7 1345 595 1350 620C1355 645 1359.2 670 1360 700C1360.8 730 1355.8 771.7 1355 800C1354.2 828.3 1344.2 856.7 1355 870C1365.8 883.3 1405.8 874.2 1420 880C1434.2 885.8 1440 897.5 1440 905C1440 912.5 1438.3 922.2 1420 925C1401.7 927.8 1346.7 926.2 1330 922C1313.3 917.8 1320.8 920.3 1320 900C1319.2 879.7 1326.7 833.3 1325 800C1323.3 766.7 1316.7 725 1310 700C1303.3 675 1291.7 641.7 1285 650C1278.3 658.3 1277.5 711.7 1270 750C1262.5 788.3 1248.3 838.3 1240 880C1231.7 921.7 1216.3 975 1220 1000C1223.7 1025 1253.3 1021.7 1262 1030C1270.7 1038.3 1273.2 1045 1272 1050C1270.8 1055 1275.3 1058.3 1255 1060C1234.7 1061.7 1168.8 1063.3 1150 1060C1131.2 1056.7 1139.5 1048.3 1142 1040C1144.5 1031.7 1157.8 1033.3 1165 1010C1172.2 986.7 1179.2 938.3 1185 900C1190.8 861.7 1197.5 821.7 1200 780C1202.5 738.3 1201.7 680 1200 650C1198.3 620 1200.8 620 1190 600C1179.2 580 1143.3 551.7 1135 530C1126.7 508.3 1137.5 495 1140 470C1142.5 445 1142.5 408.3 1150 380C1157.5 351.7 1174.2 322.5 1185 300C1195.8 277.5 1200 254.2 1215 245Z" /><path d="M915 470C940.5 458.5 1093.5 399.5 1140 385C1186.5 370.5 1332 335.2 1380 325C1428 314.8 1591.5 285.5 1620 283C1648.5 280.5 1659.2 294.3 1665 300C1670.8 305.7 1678.5 332 1678 340C1677.5 348 1665.8 374.3 1660 380C1654.2 385.7 1647 393.8 1620 397C1593 400.2 1422 406.7 1390 412C1358 417.3 1325 437.7 1300 450C1275 462.3 1177 517.2 1140 535C1103 552.8 956 620.5 930 628C904 635.5 886 616.8 880 610C874 603.2 869.5 571 870 560C870.5 549 880.5 509 885 500C889.5 491 889.5 481.5 915 470Z" /><path d="M880 430C874.2 438.3 851.7 461.7 845 480C838.3 498.3 836.7 526.7 840 540C843.3 553.3 855 563.3 865 560C875 556.7 891.7 535.8 900 520C908.3 504.2 918.3 480 915 465C911.7 450 885.8 435.8 880 430" fill="none" stroke="#000" stroke-width="11" stroke-linecap="round" stroke-linejoin="round"/><path d="M1360 420C1364.2 430 1373.3 463.3 1385 480C1396.7 496.7 1422.5 513.3 1430 520" fill="none" stroke="#000" stroke-width="36" stroke-linecap="round" stroke-linejoin="round"/></g><path d="M915 497C921.8 495.8 930.3 512 932 525C933.7 538 930 562 925 575C920 588 908.3 601.3 902 603C895.7 604.7 888.8 596.8 887 585C885.2 573.2 886.3 546.7 891 532C895.7 517.3 908.2 498.2 915 497Z" fill="#fff"/></g>
<g transform="translate(500 851.2) scale(0.125)"><g fill="#000" stroke="#000" stroke-width="3" stroke-linejoin="round"><ellipse cx="582" cy="150" rx="48" ry="70" transform="rotate(30 582 150)" /><path d="M325 250C341.7 231.7 370.8 217.5 400 210C429.2 202.5 475.8 202.5 500 205C524.2 207.5 535 214.2 545 225C555 235.8 560.8 250.8 560 270C559.2 289.2 553.3 315 540 340C526.7 365 500 393.3 480 420C460 446.7 435.8 475 420 500C404.2 525 392 545 385 570C378 595 378 611.7 378 650C378 688.3 385 750 385 800C385 850 380.2 915 378 950C375.8 985 368.3 995.8 372 1010C375.7 1024.2 396.2 1027 400 1035C403.8 1043 408.3 1053.8 395 1058C381.7 1062.2 333.8 1064.7 320 1060C306.2 1055.3 311.2 1056.7 312 1030C312.8 1003.3 323.3 946.7 325 900C326.7 853.3 324.5 791.7 322 750C319.5 708.3 316.2 655 310 650C303.8 645 291.3 686.7 285 720C278.7 753.3 275.8 802.5 272 850C268.2 897.5 257.3 975 262 1005C266.7 1035 293.7 1021.2 300 1030C306.3 1038.8 315.8 1053.3 300 1058C284.2 1062.7 221.7 1064.3 205 1058C188.3 1051.7 199.2 1046.3 200 1020C200.8 993.7 205.8 953.3 210 900C214.2 846.7 221.3 756.7 225 700C228.7 643.3 229.5 600 232 560C234.5 520 232.8 488.3 240 460C247.2 431.7 265 413.3 275 390C285 366.7 291.7 343.3 300 320C308.3 296.7 308.3 268.3 325 250Z" /><path d="M555 285C569.2 285.8 615.8 294.2 640 290C664.2 285.8 690 265 700 260" fill="none" stroke="#000" stroke-width="45" stroke-linecap="round" stroke-linejoin="round"/><path d="M700 260C707.5 251.7 734.2 225.8 745 210C755.8 194.2 761.7 172.5 765 165" fill="none" stroke="#000" stroke-width="29" stroke-linecap="round" stroke-linejoin="round"/><ellipse cx="775" cy="140" rx="30" ry="45" transform="rotate(15 775 140)" /><ellipse cx="1262" cy="158" rx="48" ry="66" /><path d="M1215 245C1230 235.8 1255.8 239.2 1275 245C1294.2 250.8 1314.2 267.5 1330 280C1345.8 292.5 1361.7 296.7 1370 320C1378.3 343.3 1385 396.7 1380 420C1375 443.3 1348.3 438.3 1340 460C1331.7 481.7 1328.3 523.3 1330 550C1331.7 576.7 1345 595 1350 620C1355 645 1359.2 670 1360 700C1360.8 730 1355.8 771.7 1355 800C1354.2 828.3 1344.2 856.7 1355 870C1365.8 883.3 1405.8 874.2 1420 880C1434.2 885.8 1440 897.5 1440 905C1440 912.5 1438.3 922.2 1420 925C1401.7 927.8 1346.7 926.2 1330 922C1313.3 917.8 1320.8 920.3 1320 900C1319.2 879.7 1326.7 833.3 1325 800C1323.3 766.7 1316.7 725 1310 700C1303.3 675 1291.7 641.7 1285 650C1278.3 658.3 1277.5 711.7 1270 750C1262.5 788.3 1248.3 838.3 1240 880C1231.7 921.7 1216.3 975 1220 1000C1223.7 1025 1253.3 1021.7 1262 1030C1270.7 1038.3 1273.2 1045 1272 1050C1270.8 1055 1275.3 1058.3 1255 1060C1234.7 1061.7 1168.8 1063.3 1150 1060C1131.2 1056.7 1139.5 1048.3 1142 1040C1144.5 1031.7 1157.8 1033.3 1165 1010C1172.2 986.7 1179.2 938.3 1185 900C1190.8 861.7 1197.5 821.7 1200 780C1202.5 738.3 1201.7 680 1200 650C1198.3 620 1200.8 620 1190 600C1179.2 580 1143.3 551.7 1135 530C1126.7 508.3 1137.5 495 1140 470C1142.5 445 1142.5 408.3 1150 380C1157.5 351.7 1174.2 322.5 1185 300C1195.8 277.5 1200 254.2 1215 245Z" /><path d="M915 470C940.5 458.5 1093.5 399.5 1140 385C1186.5 370.5 1332 335.2 1380 325C1428 314.8 1591.5 285.5 1620 283C1648.5 280.5 1659.2 294.3 1665 300C1670.8 305.7 1678.5 332 1678 340C1677.5 348 1665.8 374.3 1660 380C1654.2 385.7 1647 393.8 1620 397C1593 400.2 1422 406.7 1390 412C1358 417.3 1325 437.7 1300 450C1275 462.3 1177 517.2 1140 535C1103 552.8 956 620.5 930 628C904 635.5 886 616.8 880 610C874 603.2 869.5 571 870 560C870.5 549 880.5 509 885 500C889.5 491 889.5 481.5 915 470Z" /><path d="M880 430C874.2 438.3 851.7 461.7 845 480C838.3 498.3 836.7 526.7 840 540C843.3 553.3 855 563.3 865 560C875 556.7 891.7 535.8 900 520C908.3 504.2 918.3 480 915 465C911.7 450 885.8 435.8 880 430" fill="none" stroke="#000" stroke-width="14" stroke-linecap="round" stroke-linejoin="round"/><path d="M1360 420C1364.2 430 1373.3 463.3 1385 480C1396.7 496.7 1422.5 513.3 1430 520" fill="none" stroke="#000" stroke-width="39" stroke-linecap="round" stroke-linejoin="round"/></g><g fill="#fff" stroke="none" filter="url(#er)"><ellipse cx="582" cy="150" rx="48" ry="70" transform="rotate(30 582 150)" /><path d="M325 250C341.7 231.7 370.8 217.5 400 210C429.2 202.5 475.8 202.5 500 205C524.2 207.5 535 214.2 545 225C555 235.8 560.8 250.8 560 270C559.2 289.2 553.3 315 540 340C526.7 365 500 393.3 480 420C460 446.7 435.8 475 420 500C404.2 525 392 545 385 570C378 595 378 611.7 378 650C378 688.3 385 750 385 800C385 850 380.2 915 378 950C375.8 985 368.3 995.8 372 1010C375.7 1024.2 396.2 1027 400 1035C403.8 1043 408.3 1053.8 395 1058C381.7 1062.2 333.8 1064.7 320 1060C306.2 1055.3 311.2 1056.7 312 1030C312.8 1003.3 323.3 946.7 325 900C326.7 853.3 324.5 791.7 322 750C319.5 708.3 316.2 655 310 650C303.8 645 291.3 686.7 285 720C278.7 753.3 275.8 802.5 272 850C268.2 897.5 257.3 975 262 1005C266.7 1035 293.7 1021.2 300 1030C306.3 1038.8 315.8 1053.3 300 1058C284.2 1062.7 221.7 1064.3 205 1058C188.3 1051.7 199.2 1046.3 200 1020C200.8 993.7 205.8 953.3 210 900C214.2 846.7 221.3 756.7 225 700C228.7 643.3 229.5 600 232 560C234.5 520 232.8 488.3 240 460C247.2 431.7 265 413.3 275 390C285 366.7 291.7 343.3 300 320C308.3 296.7 308.3 268.3 325 250Z" /><path d="M555 285C569.2 285.8 615.8 294.2 640 290C664.2 285.8 690 265 700 260" fill="none" stroke="#fff" stroke-width="42" stroke-linecap="round" stroke-linejoin="round"/><path d="M700 260C707.5 251.7 734.2 225.8 745 210C755.8 194.2 761.7 172.5 765 165" fill="none" stroke="#fff" stroke-width="26" stroke-linecap="round" stroke-linejoin="round"/><ellipse cx="775" cy="140" rx="30" ry="45" transform="rotate(15 775 140)" /><ellipse cx="1262" cy="158" rx="48" ry="66" /><path d="M1215 245C1230 235.8 1255.8 239.2 1275 245C1294.2 250.8 1314.2 267.5 1330 280C1345.8 292.5 1361.7 296.7 1370 320C1378.3 343.3 1385 396.7 1380 420C1375 443.3 1348.3 438.3 1340 460C1331.7 481.7 1328.3 523.3 1330 550C1331.7 576.7 1345 595 1350 620C1355 645 1359.2 670 1360 700C1360.8 730 1355.8 771.7 1355 800C1354.2 828.3 1344.2 856.7 1355 870C1365.8 883.3 1405.8 874.2 1420 880C1434.2 885.8 1440 897.5 1440 905C1440 912.5 1438.3 922.2 1420 925C1401.7 927.8 1346.7 926.2 1330 922C1313.3 917.8 1320.8 920.3 1320 900C1319.2 879.7 1326.7 833.3 1325 800C1323.3 766.7 1316.7 725 1310 700C1303.3 675 1291.7 641.7 1285 650C1278.3 658.3 1277.5 711.7 1270 750C1262.5 788.3 1248.3 838.3 1240 880C1231.7 921.7 1216.3 975 1220 1000C1223.7 1025 1253.3 1021.7 1262 1030C1270.7 1038.3 1273.2 1045 1272 1050C1270.8 1055 1275.3 1058.3 1255 1060C1234.7 1061.7 1168.8 1063.3 1150 1060C1131.2 1056.7 1139.5 1048.3 1142 1040C1144.5 1031.7 1157.8 1033.3 1165 1010C1172.2 986.7 1179.2 938.3 1185 900C1190.8 861.7 1197.5 821.7 1200 780C1202.5 738.3 1201.7 680 1200 650C1198.3 620 1200.8 620 1190 600C1179.2 580 1143.3 551.7 1135 530C1126.7 508.3 1137.5 495 1140 470C1142.5 445 1142.5 408.3 1150 380C1157.5 351.7 1174.2 322.5 1185 300C1195.8 277.5 1200 254.2 1215 245Z" /><path d="M915 470C940.5 458.5 1093.5 399.5 1140 385C1186.5 370.5 1332 335.2 1380 325C1428 314.8 1591.5 285.5 1620 283C1648.5 280.5 1659.2 294.3 1665 300C1670.8 305.7 1678.5 332 1678 340C1677.5 348 1665.8 374.3 1660 380C1654.2 385.7 1647 393.8 1620 397C1593 400.2 1422 406.7 1390 412C1358 417.3 1325 437.7 1300 450C1275 462.3 1177 517.2 1140 535C1103 552.8 956 620.5 930 628C904 635.5 886 616.8 880 610C874 603.2 869.5 571 870 560C870.5 549 880.5 509 885 500C889.5 491 889.5 481.5 915 470Z" /><path d="M880 430C874.2 438.3 851.7 461.7 845 480C838.3 498.3 836.7 526.7 840 540C843.3 553.3 855 563.3 865 560C875 556.7 891.7 535.8 900 520C908.3 504.2 918.3 480 915 465C911.7 450 885.8 435.8 880 430" fill="none" stroke="#fff" stroke-width="11" stroke-linecap="round" stroke-linejoin="round"/><path d="M1360 420C1364.2 430 1373.3 463.3 1385 480C1396.7 496.7 1422.5 513.3 1430 520" fill="none" stroke="#fff" stroke-width="36" stroke-linecap="round" stroke-linejoin="round"/></g><path d="M915 497C921.8 495.8 930.3 512 932 525C933.7 538 930 562 925 575C920 588 908.3 601.3 902 603C895.7 604.7 888.8 596.8 887 585C885.2 573.2 886.3 546.7 891 532C895.7 517.3 908.2 498.2 915 497Z" fill="#fff" stroke="#000" stroke-width="10"/></g>
<g transform="translate(720 415) scale(0.125)"><g fill="#000" stroke="none"><path d="M312 110C317.8 98.3 329.5 89.2 340 90C350.5 90.8 366.7 103.3 375 115C383.3 126.7 388.3 143.3 390 160C391.7 176.7 391.7 203.3 385 215C378.3 226.7 361.7 231.7 350 230C338.3 228.3 322.5 216.7 315 205C307.5 193.3 305.5 175.8 305 160C304.5 144.2 306.2 121.7 312 110Z" /><path d="M330 235C338.3 228.3 363.3 229.2 375 240C386.7 250.8 389.2 273.3 400 300C410.8 326.7 428.3 363.3 440 400C451.7 436.7 460.8 480 470 520C479.2 560 489.2 606.7 495 640C500.8 673.3 497.5 695 505 720C512.5 745 524.2 768.3 540 790C555.8 811.7 589.2 833.3 600 850C610.8 866.7 611.7 875 605 890C598.3 905 580.8 925 560 940C539.2 955 510 970.8 480 980C450 989.2 410 994.2 380 995C350 995.8 323.3 990.8 300 985C276.7 979.2 252.5 970.8 240 960C227.5 949.2 223.3 938.3 225 920C226.7 901.7 240.8 880 250 850C259.2 820 270.8 775 280 740C289.2 705 299.2 673.3 305 640C310.8 606.7 315 576.7 315 540C315 503.3 306.7 455 305 420C303.3 385 301.7 353.3 305 330C308.3 306.7 320.8 295.8 325 280C329.2 264.2 321.7 241.7 330 235Z" /><path d="M312 428C300 434.3 260.7 455.3 240 466C219.3 476.7 196.7 487.7 188 492" fill="none" stroke="#000" stroke-width="42" stroke-linecap="round" stroke-linejoin="round"/><path d="M400 330C408.3 348.3 432.8 401.3 450 440C467.2 478.7 494.2 541.7 503 562" fill="none" stroke="#000" stroke-width="40" stroke-linecap="round" stroke-linejoin="round"/><path d="M560 925L598 965" fill="none" stroke="#000" stroke-width="44" stroke-linecap="round" stroke-linejoin="round"/><path d="M603 975L582 1008" fill="none" stroke="#000" stroke-width="38" stroke-linecap="round" stroke-linejoin="round"/><path d="M290 985L280 1020" fill="none" stroke="#000" stroke-width="36" stroke-linecap="round" stroke-linejoin="round"/><path d="M215 1030C215.8 1023.3 215.8 1019.7 230 1018C244.2 1016.3 288.3 1013.8 300 1020C311.7 1026.2 312.5 1048.7 300 1055C287.5 1061.3 239.2 1062.2 225 1058C210.8 1053.8 214.2 1036.7 215 1030Z" /><ellipse cx="972" cy="465" rx="45" ry="55" /><path d="M900 530C928.3 522.5 1011.7 520 1040 525C1068.3 530 1060.8 539.2 1070 560C1079.2 580.8 1085.8 620 1095 650C1104.2 680 1118.8 716.7 1125 740C1131.2 763.3 1134.5 770 1132 790C1129.5 810 1118.7 840 1110 860C1101.3 880 1086.7 893.3 1080 910C1073.3 926.7 1075.8 950 1070 960C1064.2 970 1051.7 974.2 1045 970C1038.3 965.8 1031.7 930 1030 935C1028.3 940 1031.7 984.2 1035 1000C1038.3 1015.8 1047.5 1020.3 1050 1030C1052.5 1039.7 1061.7 1053.3 1050 1058C1038.3 1062.7 991.8 1062.7 980 1058C968.2 1053.3 978.8 1039.7 979 1030C979.2 1020.3 980.8 1021.7 981 1000C981.2 978.3 981 953.3 980 900C979 846.7 977 716.7 975 680C973 643.3 970 643.3 968 680C966 716.7 964 846.7 963 900C962 953.3 961.8 978.3 962 1000C962.2 1021.7 963.5 1020.3 964 1030C964.5 1039.7 976.5 1053.3 965 1058C953.5 1062.7 906.7 1062.7 895 1058C883.3 1053.3 891.7 1039.7 895 1030C898.3 1020.3 911.7 1015.8 915 1000C918.3 984.2 917.5 940 915 935C912.5 930 906.7 965.8 900 970C893.3 974.2 880.8 970 875 960C869.2 950 871.7 926.7 865 910C858.3 893.3 843.8 880 835 860C826.2 840 814.5 810 812 790C809.5 770 813.7 763.3 820 740C826.3 716.7 841.7 678.3 850 650C858.3 621.7 861.7 590 870 570C878.3 550 871.7 537.5 900 530Z" /><ellipse cx="1642" cy="302" rx="60" ry="65" transform="rotate(20 1642 302)" /><path d="M1560 380C1571.7 374.7 1585 366.3 1600 368C1615 369.7 1633.3 378 1650 390C1666.7 402 1685.8 423.3 1700 440C1714.2 456.7 1735 476.7 1735 490C1735 503.3 1715.8 514.2 1700 520C1684.2 525.8 1656.7 515 1640 525C1623.3 535 1610 560.8 1600 580C1590 599.2 1585 623.3 1580 640C1575 656.7 1563.3 666.7 1570 680C1576.7 693.3 1601.7 705 1620 720C1638.3 735 1667.5 755 1680 770C1692.5 785 1695 793.3 1695 810C1695 826.7 1680.8 846.7 1680 870C1679.2 893.3 1686.7 925 1690 950C1693.3 975 1690.8 1005 1700 1020C1709.2 1035 1736.7 1033.7 1745 1040C1753.3 1046.3 1761.7 1055 1750 1058C1738.3 1061 1689.2 1067.7 1675 1058C1660.8 1048.3 1668.3 1021.3 1665 1000C1661.7 978.7 1661.7 931.7 1655 930C1648.3 928.3 1625.8 973.3 1625 990C1624.2 1006.7 1646.7 1018.7 1650 1030C1653.3 1041.3 1656.7 1055.5 1645 1058C1633.3 1060.5 1595.5 1051.3 1580 1045C1564.5 1038.7 1553.7 1029.2 1552 1020C1550.3 1010.8 1560.3 1010 1570 990C1579.7 970 1600.8 926.7 1610 900C1619.2 873.3 1626.7 848.3 1625 830C1623.3 811.7 1620.8 805 1600 790C1579.2 775 1530 753.3 1500 740C1470 726.7 1436.7 721.7 1420 710C1403.3 698.3 1401.7 685 1400 670C1398.3 655 1403.3 640 1410 620C1416.7 600 1426.7 576.7 1440 550C1453.3 523.3 1475 485 1490 460C1505 435 1518.3 413.3 1530 400C1541.7 386.7 1548.3 385.3 1560 380Z" /><path d="M1720 505C1733.3 506.7 1773.7 513.3 1800 515C1826.3 516.7 1865 515 1878 515" fill="none" stroke="#000" stroke-width="28" stroke-linecap="round" stroke-linejoin="round"/></g><path d="M425 440L470 555" fill="none" stroke="#fff" stroke-width="6" stroke-linecap="round"/><path d="M880 670C885 676.7 887.5 725 890 760C892.5 795 898.3 868.3 895 880C891.7 891.7 877.5 848.3 870 830C862.5 811.7 851.7 788.3 850 770C848.3 751.7 855 736.7 860 720C865 703.3 875 663.3 880 670Z" fill="#fff"/><path d="M1065 670C1070 663.3 1080 703.3 1085 720C1090 736.7 1096.7 751.7 1095 770C1093.3 788.3 1082.5 811.7 1075 830C1067.5 848.3 1053.3 891.7 1050 880C1046.7 868.3 1052.5 795 1055 760C1057.5 725 1060 676.7 1065 670Z" fill="#fff"/></g>
<g transform="translate(720 851.2) scale(0.125)"><g fill="#000" stroke="#000" stroke-width="3" stroke-linejoin="round"><path d="M312 110C317.8 98.3 329.5 89.2 340 90C350.5 90.8 366.7 103.3 375 115C383.3 126.7 388.3 143.3 390 160C391.7 176.7 391.7 203.3 385 215C378.3 226.7 361.7 231.7 350 230C338.3 228.3 322.5 216.7 315 205C307.5 193.3 305.5 175.8 305 160C304.5 144.2 306.2 121.7 312 110Z" /><path d="M330 235C338.3 228.3 363.3 229.2 375 240C386.7 250.8 389.2 273.3 400 300C410.8 326.7 428.3 363.3 440 400C451.7 436.7 460.8 480 470 520C479.2 560 489.2 606.7 495 640C500.8 673.3 497.5 695 505 720C512.5 745 524.2 768.3 540 790C555.8 811.7 589.2 833.3 600 850C610.8 866.7 611.7 875 605 890C598.3 905 580.8 925 560 940C539.2 955 510 970.8 480 980C450 989.2 410 994.2 380 995C350 995.8 323.3 990.8 300 985C276.7 979.2 252.5 970.8 240 960C227.5 949.2 223.3 938.3 225 920C226.7 901.7 240.8 880 250 850C259.2 820 270.8 775 280 740C289.2 705 299.2 673.3 305 640C310.8 606.7 315 576.7 315 540C315 503.3 306.7 455 305 420C303.3 385 301.7 353.3 305 330C308.3 306.7 320.8 295.8 325 280C329.2 264.2 321.7 241.7 330 235Z" /><path d="M312 428C300 434.3 260.7 455.3 240 466C219.3 476.7 196.7 487.7 188 492" fill="none" stroke="#000" stroke-width="45" stroke-linecap="round" stroke-linejoin="round"/><path d="M400 330C408.3 348.3 432.8 401.3 450 440C467.2 478.7 494.2 541.7 503 562" fill="none" stroke="#000" stroke-width="43" stroke-linecap="round" stroke-linejoin="round"/><path d="M560 925L598 965" fill="none" stroke="#000" stroke-width="47" stroke-linecap="round" stroke-linejoin="round"/><path d="M603 975L582 1008" fill="none" stroke="#000" stroke-width="41" stroke-linecap="round" stroke-linejoin="round"/><path d="M290 985L280 1020" fill="none" stroke="#000" stroke-width="39" stroke-linecap="round" stroke-linejoin="round"/><path d="M215 1030C215.8 1023.3 215.8 1019.7 230 1018C244.2 1016.3 288.3 1013.8 300 1020C311.7 1026.2 312.5 1048.7 300 1055C287.5 1061.3 239.2 1062.2 225 1058C210.8 1053.8 214.2 1036.7 215 1030Z" /><ellipse cx="972" cy="465" rx="45" ry="55" /><path d="M900 530C928.3 522.5 1011.7 520 1040 525C1068.3 530 1060.8 539.2 1070 560C1079.2 580.8 1085.8 620 1095 650C1104.2 680 1118.8 716.7 1125 740C1131.2 763.3 1134.5 770 1132 790C1129.5 810 1118.7 840 1110 860C1101.3 880 1086.7 893.3 1080 910C1073.3 926.7 1075.8 950 1070 960C1064.2 970 1051.7 974.2 1045 970C1038.3 965.8 1031.7 930 1030 935C1028.3 940 1031.7 984.2 1035 1000C1038.3 1015.8 1047.5 1020.3 1050 1030C1052.5 1039.7 1061.7 1053.3 1050 1058C1038.3 1062.7 991.8 1062.7 980 1058C968.2 1053.3 978.8 1039.7 979 1030C979.2 1020.3 980.8 1021.7 981 1000C981.2 978.3 981 953.3 980 900C979 846.7 977 716.7 975 680C973 643.3 970 643.3 968 680C966 716.7 964 846.7 963 900C962 953.3 961.8 978.3 962 1000C962.2 1021.7 963.5 1020.3 964 1030C964.5 1039.7 976.5 1053.3 965 1058C953.5 1062.7 906.7 1062.7 895 1058C883.3 1053.3 891.7 1039.7 895 1030C898.3 1020.3 911.7 1015.8 915 1000C918.3 984.2 917.5 940 915 935C912.5 930 906.7 965.8 900 970C893.3 974.2 880.8 970 875 960C869.2 950 871.7 926.7 865 910C858.3 893.3 843.8 880 835 860C826.2 840 814.5 810 812 790C809.5 770 813.7 763.3 820 740C826.3 716.7 841.7 678.3 850 650C858.3 621.7 861.7 590 870 570C878.3 550 871.7 537.5 900 530Z" /><ellipse cx="1642" cy="302" rx="60" ry="65" transform="rotate(20 1642 302)" /><path d="M1560 380C1571.7 374.7 1585 366.3 1600 368C1615 369.7 1633.3 378 1650 390C1666.7 402 1685.8 423.3 1700 440C1714.2 456.7 1735 476.7 1735 490C1735 503.3 1715.8 514.2 1700 520C1684.2 525.8 1656.7 515 1640 525C1623.3 535 1610 560.8 1600 580C1590 599.2 1585 623.3 1580 640C1575 656.7 1563.3 666.7 1570 680C1576.7 693.3 1601.7 705 1620 720C1638.3 735 1667.5 755 1680 770C1692.5 785 1695 793.3 1695 810C1695 826.7 1680.8 846.7 1680 870C1679.2 893.3 1686.7 925 1690 950C1693.3 975 1690.8 1005 1700 1020C1709.2 1035 1736.7 1033.7 1745 1040C1753.3 1046.3 1761.7 1055 1750 1058C1738.3 1061 1689.2 1067.7 1675 1058C1660.8 1048.3 1668.3 1021.3 1665 1000C1661.7 978.7 1661.7 931.7 1655 930C1648.3 928.3 1625.8 973.3 1625 990C1624.2 1006.7 1646.7 1018.7 1650 1030C1653.3 1041.3 1656.7 1055.5 1645 1058C1633.3 1060.5 1595.5 1051.3 1580 1045C1564.5 1038.7 1553.7 1029.2 1552 1020C1550.3 1010.8 1560.3 1010 1570 990C1579.7 970 1600.8 926.7 1610 900C1619.2 873.3 1626.7 848.3 1625 830C1623.3 811.7 1620.8 805 1600 790C1579.2 775 1530 753.3 1500 740C1470 726.7 1436.7 721.7 1420 710C1403.3 698.3 1401.7 685 1400 670C1398.3 655 1403.3 640 1410 620C1416.7 600 1426.7 576.7 1440 550C1453.3 523.3 1475 485 1490 460C1505 435 1518.3 413.3 1530 400C1541.7 386.7 1548.3 385.3 1560 380Z" /><path d="M1720 505C1733.3 506.7 1773.7 513.3 1800 515C1826.3 516.7 1865 515 1878 515" fill="none" stroke="#000" stroke-width="31" stroke-linecap="round" stroke-linejoin="round"/></g><g fill="#fff" stroke="none" filter="url(#er)"><path d="M312 110C317.8 98.3 329.5 89.2 340 90C350.5 90.8 366.7 103.3 375 115C383.3 126.7 388.3 143.3 390 160C391.7 176.7 391.7 203.3 385 215C378.3 226.7 361.7 231.7 350 230C338.3 228.3 322.5 216.7 315 205C307.5 193.3 305.5 175.8 305 160C304.5 144.2 306.2 121.7 312 110Z" /><path d="M330 235C338.3 228.3 363.3 229.2 375 240C386.7 250.8 389.2 273.3 400 300C410.8 326.7 428.3 363.3 440 400C451.7 436.7 460.8 480 470 520C479.2 560 489.2 606.7 495 640C500.8 673.3 497.5 695 505 720C512.5 745 524.2 768.3 540 790C555.8 811.7 589.2 833.3 600 850C610.8 866.7 611.7 875 605 890C598.3 905 580.8 925 560 940C539.2 955 510 970.8 480 980C450 989.2 410 994.2 380 995C350 995.8 323.3 990.8 300 985C276.7 979.2 252.5 970.8 240 960C227.5 949.2 223.3 938.3 225 920C226.7 901.7 240.8 880 250 850C259.2 820 270.8 775 280 740C289.2 705 299.2 673.3 305 640C310.8 606.7 315 576.7 315 540C315 503.3 306.7 455 305 420C303.3 385 301.7 353.3 305 330C308.3 306.7 320.8 295.8 325 280C329.2 264.2 321.7 241.7 330 235Z" /><path d="M312 428C300 434.3 260.7 455.3 240 466C219.3 476.7 196.7 487.7 188 492" fill="none" stroke="#fff" stroke-width="42" stroke-linecap="round" stroke-linejoin="round"/><path d="M400 330C408.3 348.3 432.8 401.3 450 440C467.2 478.7 494.2 541.7 503 562" fill="none" stroke="#fff" stroke-width="40" stroke-linecap="round" stroke-linejoin="round"/><path d="M560 925L598 965" fill="none" stroke="#fff" stroke-width="44" stroke-linecap="round" stroke-linejoin="round"/><path d="M603 975L582 1008" fill="none" stroke="#fff" stroke-width="38" stroke-linecap="round" stroke-linejoin="round"/><path d="M290 985L280 1020" fill="none" stroke="#fff" stroke-width="36" stroke-linecap="round" stroke-linejoin="round"/><path d="M215 1030C215.8 1023.3 215.8 1019.7 230 1018C244.2 1016.3 288.3 1013.8 300 1020C311.7 1026.2 312.5 1048.7 300 1055C287.5 1061.3 239.2 1062.2 225 1058C210.8 1053.8 214.2 1036.7 215 1030Z" /><ellipse cx="972" cy="465" rx="45" ry="55" /><path d="M900 530C928.3 522.5 1011.7 520 1040 525C1068.3 530 1060.8 539.2 1070 560C1079.2 580.8 1085.8 620 1095 650C1104.2 680 1118.8 716.7 1125 740C1131.2 763.3 1134.5 770 1132 790C1129.5 810 1118.7 840 1110 860C1101.3 880 1086.7 893.3 1080 910C1073.3 926.7 1075.8 950 1070 960C1064.2 970 1051.7 974.2 1045 970C1038.3 965.8 1031.7 930 1030 935C1028.3 940 1031.7 984.2 1035 1000C1038.3 1015.8 1047.5 1020.3 1050 1030C1052.5 1039.7 1061.7 1053.3 1050 1058C1038.3 1062.7 991.8 1062.7 980 1058C968.2 1053.3 978.8 1039.7 979 1030C979.2 1020.3 980.8 1021.7 981 1000C981.2 978.3 981 953.3 980 900C979 846.7 977 716.7 975 680C973 643.3 970 643.3 968 680C966 716.7 964 846.7 963 900C962 953.3 961.8 978.3 962 1000C962.2 1021.7 963.5 1020.3 964 1030C964.5 1039.7 976.5 1053.3 965 1058C953.5 1062.7 906.7 1062.7 895 1058C883.3 1053.3 891.7 1039.7 895 1030C898.3 1020.3 911.7 1015.8 915 1000C918.3 984.2 917.5 940 915 935C912.5 930 906.7 965.8 900 970C893.3 974.2 880.8 970 875 960C869.2 950 871.7 926.7 865 910C858.3 893.3 843.8 880 835 860C826.2 840 814.5 810 812 790C809.5 770 813.7 763.3 820 740C826.3 716.7 841.7 678.3 850 650C858.3 621.7 861.7 590 870 570C878.3 550 871.7 537.5 900 530Z" /><ellipse cx="1642" cy="302" rx="60" ry="65" transform="rotate(20 1642 302)" /><path d="M1560 380C1571.7 374.7 1585 366.3 1600 368C1615 369.7 1633.3 378 1650 390C1666.7 402 1685.8 423.3 1700 440C1714.2 456.7 1735 476.7 1735 490C1735 503.3 1715.8 514.2 1700 520C1684.2 525.8 1656.7 515 1640 525C1623.3 535 1610 560.8 1600 580C1590 599.2 1585 623.3 1580 640C1575 656.7 1563.3 666.7 1570 680C1576.7 693.3 1601.7 705 1620 720C1638.3 735 1667.5 755 1680 770C1692.5 785 1695 793.3 1695 810C1695 826.7 1680.8 846.7 1680 870C1679.2 893.3 1686.7 925 1690 950C1693.3 975 1690.8 1005 1700 1020C1709.2 1035 1736.7 1033.7 1745 1040C1753.3 1046.3 1761.7 1055 1750 1058C1738.3 1061 1689.2 1067.7 1675 1058C1660.8 1048.3 1668.3 1021.3 1665 1000C1661.7 978.7 1661.7 931.7 1655 930C1648.3 928.3 1625.8 973.3 1625 990C1624.2 1006.7 1646.7 1018.7 1650 1030C1653.3 1041.3 1656.7 1055.5 1645 1058C1633.3 1060.5 1595.5 1051.3 1580 1045C1564.5 1038.7 1553.7 1029.2 1552 1020C1550.3 1010.8 1560.3 1010 1570 990C1579.7 970 1600.8 926.7 1610 900C1619.2 873.3 1626.7 848.3 1625 830C1623.3 811.7 1620.8 805 1600 790C1579.2 775 1530 753.3 1500 740C1470 726.7 1436.7 721.7 1420 710C1403.3 698.3 1401.7 685 1400 670C1398.3 655 1403.3 640 1410 620C1416.7 600 1426.7 576.7 1440 550C1453.3 523.3 1475 485 1490 460C1505 435 1518.3 413.3 1530 400C1541.7 386.7 1548.3 385.3 1560 380Z" /><path d="M1720 505C1733.3 506.7 1773.7 513.3 1800 515C1826.3 516.7 1865 515 1878 515" fill="none" stroke="#fff" stroke-width="28" stroke-linecap="round" stroke-linejoin="round"/></g><path d="M425 440L470 555" fill="none" stroke="#000" stroke-width="14" stroke-linecap="round"/><path d="M425 440L470 555" fill="none" stroke="#fff" stroke-width="1" stroke-linecap="round"/><path d="M880 670C885 676.7 887.5 725 890 760C892.5 795 898.3 868.3 895 880C891.7 891.7 877.5 848.3 870 830C862.5 811.7 851.7 788.3 850 770C848.3 751.7 855 736.7 860 720C865 703.3 875 663.3 880 670Z" fill="#fff" stroke="#000" stroke-width="10"/><path d="M1065 670C1070 663.3 1080 703.3 1085 720C1090 736.7 1096.7 751.7 1095 770C1093.3 788.3 1082.5 811.7 1075 830C1067.5 848.3 1053.3 891.7 1050 880C1046.7 868.3 1052.5 795 1055 760C1057.5 725 1060 676.7 1065 670Z" fill="#fff" stroke="#000" stroke-width="10"/></g>
<g transform="translate(940 415) scale(0.125)"><g fill="#000" stroke="none"><ellipse cx="382" cy="330" rx="48" ry="68" transform="rotate(10 382 330)" /><path d="M325 415C340 410 383.3 404.2 400 410C416.7 415.8 419.2 431.7 425 450C430.8 468.3 434.2 495 435 520C435.8 545 424.2 583.3 430 600C435.8 616.7 451.7 610.8 470 620C488.3 629.2 516.7 646.7 540 655C563.3 663.3 592.5 660.8 610 670C627.5 679.2 637.5 691.7 645 710C652.5 728.3 655.8 751.7 655 780C654.2 808.3 644.2 843.3 640 880C635.8 916.7 625 975 630 1000C635 1025 661.7 1021.7 670 1030C678.3 1038.3 681.7 1045 680 1050C678.3 1055 677.5 1058.3 660 1060C642.5 1061.7 592.5 1065 575 1060C557.5 1055 560 1048.3 555 1030C550 1011.7 548.3 980 545 950C541.7 920 538.3 880 535 850C531.7 820 535.8 780.8 525 770C514.2 759.2 490.8 781.7 470 785C449.2 788.3 421.7 790 400 790C378.3 790 355 791.7 340 785C325 778.3 317.5 767.5 310 750C302.5 732.5 298.7 705 295 680C291.3 655 288 630 288 600C288 570 291.3 526.7 295 500C298.7 473.3 305 454.2 310 440C315 425.8 310 420 325 415Z" /><path d="M430 540C441.7 538.3 480 540 500 530C520 520 533.7 499.3 550 480C566.3 460.7 590 425 598 414" fill="none" stroke="#000" stroke-width="42" stroke-linecap="round" stroke-linejoin="round"/><ellipse cx="1228" cy="155" rx="48" ry="80" transform="rotate(-15 1228 155)" /><path d="M1250 265C1261.7 262.5 1286.7 265.8 1300 275C1313.3 284.2 1324.2 290.8 1330 320C1335.8 349.2 1332.5 406.7 1335 450C1337.5 493.3 1345 546.7 1345 580C1345 613.3 1341.7 629.2 1335 650C1328.3 670.8 1317.5 692.5 1305 705C1292.5 717.5 1285.8 720.8 1260 725C1234.2 729.2 1181.7 727.5 1150 730C1118.3 732.5 1088.3 733.3 1070 740C1051.7 746.7 1043.3 751.7 1040 770C1036.7 788.3 1044.2 820 1050 850C1055.8 880 1070 921.7 1075 950C1080 978.3 1080.8 1002.5 1080 1020C1079.2 1037.5 1083.3 1048 1070 1055C1056.7 1062 1020 1062 1000 1062C980 1062 958.3 1059.5 950 1055C941.7 1050.5 940 1044.2 950 1035C960 1025.8 1001.7 1019.2 1010 1000C1018.3 980.8 1007.5 950 1000 920C992.5 890 973.7 848.3 965 820C956.3 791.7 946.3 770 948 750C949.7 730 959.7 713.3 975 700C990.3 686.7 1010.8 678.3 1040 670C1069.2 661.7 1121.7 656.7 1150 650C1178.3 643.3 1198 640 1210 630C1222 620 1222 611.7 1222 590C1222 568.3 1212.8 528.3 1210 500C1207.2 471.7 1204.2 446.7 1205 420C1205.8 393.3 1210.8 361.7 1215 340C1219.2 318.3 1224.2 302.5 1230 290C1235.8 277.5 1238.3 267.5 1250 265Z" /><path d="M1225 372L1128 392" fill="none" stroke="#000" stroke-width="54" stroke-linecap="round" stroke-linejoin="round"/><path d="M1120 395L1118 270" fill="none" stroke="#000" stroke-width="42" stroke-linecap="round" stroke-linejoin="round"/><ellipse cx="1108" cy="238" rx="36" ry="29" /><path d="M1135 245C1145.8 243.7 1185 241.5 1200 237C1215 232.5 1220.8 221.2 1225 218" fill="none" stroke="#000" stroke-width="30" stroke-linecap="round" stroke-linejoin="round"/></g><path d="M430 650C439.2 646.7 465 654.2 480 660C495 665.8 518.3 679.2 520 685C521.7 690.8 503.3 692.5 490 695C476.7 697.5 450.8 702.5 440 700C429.2 697.5 426.7 688.3 425 680C423.3 671.7 420.8 653.3 430 650Z" fill="#fff"/><path d="M588 780L586 870" fill="none" stroke="#fff" stroke-width="5" stroke-linecap="round"/></g>
<g transform="translate(940 851.2) scale(0.125)"><g fill="#000" stroke="#000" stroke-width="3" stroke-linejoin="round"><ellipse cx="382" cy="330" rx="48" ry="68" transform="rotate(10 382 330)" /><path d="M325 415C340 410 383.3 404.2 400 410C416.7 415.8 419.2 431.7 425 450C430.8 468.3 434.2 495 435 520C435.8 545 424.2 583.3 430 600C435.8 616.7 451.7 610.8 470 620C488.3 629.2 516.7 646.7 540 655C563.3 663.3 592.5 660.8 610 670C627.5 679.2 637.5 691.7 645 710C652.5 728.3 655.8 751.7 655 780C654.2 808.3 644.2 843.3 640 880C635.8 916.7 625 975 630 1000C635 1025 661.7 1021.7 670 1030C678.3 1038.3 681.7 1045 680 1050C678.3 1055 677.5 1058.3 660 1060C642.5 1061.7 592.5 1065 575 1060C557.5 1055 560 1048.3 555 1030C550 1011.7 548.3 980 545 950C541.7 920 538.3 880 535 850C531.7 820 535.8 780.8 525 770C514.2 759.2 490.8 781.7 470 785C449.2 788.3 421.7 790 400 790C378.3 790 355 791.7 340 785C325 778.3 317.5 767.5 310 750C302.5 732.5 298.7 705 295 680C291.3 655 288 630 288 600C288 570 291.3 526.7 295 500C298.7 473.3 305 454.2 310 440C315 425.8 310 420 325 415Z" /><path d="M430 540C441.7 538.3 480 540 500 530C520 520 533.7 499.3 550 480C566.3 460.7 590 425 598 414" fill="none" stroke="#000" stroke-width="45" stroke-linecap="round" stroke-linejoin="round"/><ellipse cx="1228" cy="155" rx="48" ry="80" transform="rotate(-15 1228 155)" /><path d="M1250 265C1261.7 262.5 1286.7 265.8 1300 275C1313.3 284.2 1324.2 290.8 1330 320C1335.8 349.2 1332.5 406.7 1335 450C1337.5 493.3 1345 546.7 1345 580C1345 613.3 1341.7 629.2 1335 650C1328.3 670.8 1317.5 692.5 1305 705C1292.5 717.5 1285.8 720.8 1260 725C1234.2 729.2 1181.7 727.5 1150 730C1118.3 732.5 1088.3 733.3 1070 740C1051.7 746.7 1043.3 751.7 1040 770C1036.7 788.3 1044.2 820 1050 850C1055.8 880 1070 921.7 1075 950C1080 978.3 1080.8 1002.5 1080 1020C1079.2 1037.5 1083.3 1048 1070 1055C1056.7 1062 1020 1062 1000 1062C980 1062 958.3 1059.5 950 1055C941.7 1050.5 940 1044.2 950 1035C960 1025.8 1001.7 1019.2 1010 1000C1018.3 980.8 1007.5 950 1000 920C992.5 890 973.7 848.3 965 820C956.3 791.7 946.3 770 948 750C949.7 730 959.7 713.3 975 700C990.3 686.7 1010.8 678.3 1040 670C1069.2 661.7 1121.7 656.7 1150 650C1178.3 643.3 1198 640 1210 630C1222 620 1222 611.7 1222 590C1222 568.3 1212.8 528.3 1210 500C1207.2 471.7 1204.2 446.7 1205 420C1205.8 393.3 1210.8 361.7 1215 340C1219.2 318.3 1224.2 302.5 1230 290C1235.8 277.5 1238.3 267.5 1250 265Z" /><path d="M1225 372L1128 392" fill="none" stroke="#000" stroke-width="57" stroke-linecap="round" stroke-linejoin="round"/><path d="M1120 395L1118 270" fill="none" stroke="#000" stroke-width="45" stroke-linecap="round" stroke-linejoin="round"/><ellipse cx="1108" cy="238" rx="36" ry="29" /><path d="M1135 245C1145.8 243.7 1185 241.5 1200 237C1215 232.5 1220.8 221.2 1225 218" fill="none" stroke="#000" stroke-width="33" stroke-linecap="round" stroke-linejoin="round"/></g><g fill="#fff" stroke="none" filter="url(#er)"><ellipse cx="382" cy="330" rx="48" ry="68" transform="rotate(10 382 330)" /><path d="M325 415C340 410 383.3 404.2 400 410C416.7 415.8 419.2 431.7 425 450C430.8 468.3 434.2 495 435 520C435.8 545 424.2 583.3 430 600C435.8 616.7 451.7 610.8 470 620C488.3 629.2 516.7 646.7 540 655C563.3 663.3 592.5 660.8 610 670C627.5 679.2 637.5 691.7 645 710C652.5 728.3 655.8 751.7 655 780C654.2 808.3 644.2 843.3 640 880C635.8 916.7 625 975 630 1000C635 1025 661.7 1021.7 670 1030C678.3 1038.3 681.7 1045 680 1050C678.3 1055 677.5 1058.3 660 1060C642.5 1061.7 592.5 1065 575 1060C557.5 1055 560 1048.3 555 1030C550 1011.7 548.3 980 545 950C541.7 920 538.3 880 535 850C531.7 820 535.8 780.8 525 770C514.2 759.2 490.8 781.7 470 785C449.2 788.3 421.7 790 400 790C378.3 790 355 791.7 340 785C325 778.3 317.5 767.5 310 750C302.5 732.5 298.7 705 295 680C291.3 655 288 630 288 600C288 570 291.3 526.7 295 500C298.7 473.3 305 454.2 310 440C315 425.8 310 420 325 415Z" /><path d="M430 540C441.7 538.3 480 540 500 530C520 520 533.7 499.3 550 480C566.3 460.7 590 425 598 414" fill="none" stroke="#fff" stroke-width="42" stroke-linecap="round" stroke-linejoin="round"/><ellipse cx="1228" cy="155" rx="48" ry="80" transform="rotate(-15 1228 155)" /><path d="M1250 265C1261.7 262.5 1286.7 265.8 1300 275C1313.3 284.2 1324.2 290.8 1330 320C1335.8 349.2 1332.5 406.7 1335 450C1337.5 493.3 1345 546.7 1345 580C1345 613.3 1341.7 629.2 1335 650C1328.3 670.8 1317.5 692.5 1305 705C1292.5 717.5 1285.8 720.8 1260 725C1234.2 729.2 1181.7 727.5 1150 730C1118.3 732.5 1088.3 733.3 1070 740C1051.7 746.7 1043.3 751.7 1040 770C1036.7 788.3 1044.2 820 1050 850C1055.8 880 1070 921.7 1075 950C1080 978.3 1080.8 1002.5 1080 1020C1079.2 1037.5 1083.3 1048 1070 1055C1056.7 1062 1020 1062 1000 1062C980 1062 958.3 1059.5 950 1055C941.7 1050.5 940 1044.2 950 1035C960 1025.8 1001.7 1019.2 1010 1000C1018.3 980.8 1007.5 950 1000 920C992.5 890 973.7 848.3 965 820C956.3 791.7 946.3 770 948 750C949.7 730 959.7 713.3 975 700C990.3 686.7 1010.8 678.3 1040 670C1069.2 661.7 1121.7 656.7 1150 650C1178.3 643.3 1198 640 1210 630C1222 620 1222 611.7 1222 590C1222 568.3 1212.8 528.3 1210 500C1207.2 471.7 1204.2 446.7 1205 420C1205.8 393.3 1210.8 361.7 1215 340C1219.2 318.3 1224.2 302.5 1230 290C1235.8 277.5 1238.3 267.5 1250 265Z" /><path d="M1225 372L1128 392" fill="none" stroke="#fff" stroke-width="54" stroke-linecap="round" stroke-linejoin="round"/><path d="M1120 395L1118 270" fill="none" stroke="#fff" stroke-width="42" stroke-linecap="round" stroke-linejoin="round"/><ellipse cx="1108" cy="238" rx="36" ry="29" /><path d="M1135 245C1145.8 243.7 1185 241.5 1200 237C1215 232.5 1220.8 221.2 1225 218" fill="none" stroke="#fff" stroke-width="30" stroke-linecap="round" stroke-linejoin="round"/></g><path d="M430 650C439.2 646.7 465 654.2 480 660C495 665.8 518.3 679.2 520 685C521.7 690.8 503.3 692.5 490 695C476.7 697.5 450.8 702.5 440 700C429.2 697.5 426.7 688.3 425 680C423.3 671.7 420.8 653.3 430 650Z" fill="#fff" stroke="#000" stroke-width="10"/><path d="M588 780L586 870" fill="none" stroke="#000" stroke-width="13" stroke-linecap="round"/><path d="M588 780L586 870" fill="none" stroke="#fff" stroke-width="1" stroke-linecap="round"/></g>
<g transform="translate(1110 415) scale(0.125)"><g fill="#000" stroke="none"><ellipse cx="312" cy="335" rx="56" ry="70" /><path d="M360 318C362.5 315.2 379.2 329.3 380 335C380.8 340.7 368.3 354.8 365 352C361.7 349.2 357.5 320.8 360 318Z" /><path d="M150 480C159.5 441.7 181.7 431.7 200 420C218.3 408.3 238.3 408.3 260 410C281.7 411.7 311.7 427 330 430C348.3 433 355 421.3 370 428C385 434.7 403.3 453 420 470C436.7 487 451.7 512.5 470 530C488.3 547.5 508.3 565 530 575C551.7 585 591.7 579.2 600 590C608.3 600.8 585.8 625 580 640C574.2 655 563.3 666.7 565 680C566.7 693.3 575.8 710 590 720C604.2 730 625 738.7 650 740C675 741.3 715 731.3 740 728C765 724.7 783.3 718 800 720C816.7 722 830.8 726.7 840 740C849.2 753.3 851.3 773.3 855 800C858.7 826.7 859.5 866.7 862 900C864.5 933.3 862 976.7 870 1000C878 1023.3 902.5 1030.3 910 1040C917.5 1049.7 927.5 1055 915 1058C902.5 1061 851.7 1061 835 1058C818.3 1055 827.5 1040 815 1040C802.5 1040 845.8 1054.7 760 1058C674.2 1061.3 390 1064.7 300 1060C210 1055.3 242.5 1046.7 220 1030C197.5 1013.3 177.5 988.3 165 960C152.5 931.7 148.7 911.7 145 860C141.3 808.3 142.2 713.3 143 650C143.8 586.7 140.5 518.3 150 480Z" /><path d="M550 600C568.3 598.7 631.7 597 660 592C688.3 587 710 573.7 720 570" fill="none" stroke="#000" stroke-width="48" stroke-linecap="round" stroke-linejoin="round"/><path d="M720 570L765 552" fill="none" stroke="#000" stroke-width="30" stroke-linecap="round" stroke-linejoin="round"/><ellipse cx="768" cy="550" rx="20" ry="20" /><ellipse cx="1418" cy="225" rx="55" ry="66" transform="rotate(-15 1418 225)" /><path d="M1450 295C1465 288 1491.7 275.5 1510 278C1528.3 280.5 1541.7 291.3 1560 310C1578.3 328.7 1601.7 365 1620 390C1638.3 415 1660 440 1670 460C1680 480 1682.5 493.3 1680 510C1677.5 526.7 1665 548.3 1655 560C1645 571.7 1635.8 575.8 1620 580C1604.2 584.2 1575 588.3 1560 585C1545 581.7 1536.7 574.2 1530 560C1523.3 545.8 1528.3 520 1520 500C1511.7 480 1495 450 1480 440C1465 430 1446.7 443.3 1430 440C1413.3 436.7 1385 431.7 1380 420C1375 408.3 1393.3 386.7 1400 370C1406.7 353.3 1411.7 332.5 1420 320C1428.3 307.5 1435 302 1450 295Z" /><path d="M1420 432C1405 440.3 1369.7 459.3 1330 482C1290.3 504.7 1206.7 553.7 1182 568" fill="none" stroke="#000" stroke-width="38" stroke-linecap="round" stroke-linejoin="round"/><path d="M1590 570C1571.7 578.3 1511.7 601.3 1480 620C1448.3 638.7 1413.3 671.7 1400 682" fill="none" stroke="#000" stroke-width="64" stroke-linecap="round" stroke-linejoin="round"/><path d="M1400 682C1391.7 698.3 1366.3 751.2 1350 780C1333.7 808.8 1310 842.5 1302 855" fill="none" stroke="#000" stroke-width="50" stroke-linecap="round" stroke-linejoin="round"/><ellipse cx="1295" cy="868" rx="46" ry="32" transform="rotate(-30 1295 868)" /><path d="M1560 580C1553.7 600 1526.2 655.8 1522 700C1517.8 744.2 1532.8 820.8 1535 845" fill="none" stroke="#000" stroke-width="48" stroke-linecap="round" stroke-linejoin="round"/><path d="M1610 595L1720 597" fill="none" stroke="#000" stroke-width="36" stroke-linecap="round" stroke-linejoin="round"/><path d="M1650 610L1540 900" fill="none" stroke="#000" stroke-width="30" stroke-linecap="round" stroke-linejoin="round"/><path d="M1140 590L1260 960" fill="none" stroke="#000" stroke-width="32" stroke-linecap="round" stroke-linejoin="round"/><path d="M1050 525C1058.3 527.5 1085 530 1100 540C1115 550 1133.3 577.5 1140 585" fill="none" stroke="#000" stroke-width="44" stroke-linecap="round" stroke-linejoin="round"/><path d="M1248 1058C1248 940 1320 878 1405 878C1490 878 1562 940 1562 1058Z" /></g><path d="M1375 978C1374.7 968.3 1398.3 948.5 1410 948C1421.7 947.5 1444.7 965.3 1445 975C1445.3 984.7 1423.7 1005.5 1412 1006C1400.3 1006.5 1375.3 987.7 1375 978Z" fill="#fff"/></g>
<g transform="translate(1110 851.2) scale(0.125)"><g fill="#000" stroke="#000" stroke-width="3" stroke-linejoin="round"><ellipse cx="312" cy="335" rx="56" ry="70" /><path d="M360 318C362.5 315.2 379.2 329.3 380 335C380.8 340.7 368.3 354.8 365 352C361.7 349.2 357.5 320.8 360 318Z" /><path d="M150 480C159.5 441.7 181.7 431.7 200 420C218.3 408.3 238.3 408.3 260 410C281.7 411.7 311.7 427 330 430C348.3 433 355 421.3 370 428C385 434.7 403.3 453 420 470C436.7 487 451.7 512.5 470 530C488.3 547.5 508.3 565 530 575C551.7 585 591.7 579.2 600 590C608.3 600.8 585.8 625 580 640C574.2 655 563.3 666.7 565 680C566.7 693.3 575.8 710 590 720C604.2 730 625 738.7 650 740C675 741.3 715 731.3 740 728C765 724.7 783.3 718 800 720C816.7 722 830.8 726.7 840 740C849.2 753.3 851.3 773.3 855 800C858.7 826.7 859.5 866.7 862 900C864.5 933.3 862 976.7 870 1000C878 1023.3 902.5 1030.3 910 1040C917.5 1049.7 927.5 1055 915 1058C902.5 1061 851.7 1061 835 1058C818.3 1055 827.5 1040 815 1040C802.5 1040 845.8 1054.7 760 1058C674.2 1061.3 390 1064.7 300 1060C210 1055.3 242.5 1046.7 220 1030C197.5 1013.3 177.5 988.3 165 960C152.5 931.7 148.7 911.7 145 860C141.3 808.3 142.2 713.3 143 650C143.8 586.7 140.5 518.3 150 480Z" /><path d="M550 600C568.3 598.7 631.7 597 660 592C688.3 587 710 573.7 720 570" fill="none" stroke="#000" stroke-width="51" stroke-linecap="round" stroke-linejoin="round"/><path d="M720 570L765 552" fill="none" stroke="#000" stroke-width="33" stroke-linecap="round" stroke-linejoin="round"/><ellipse cx="768" cy="550" rx="20" ry="20" /><ellipse cx="1418" cy="225" rx="55" ry="66" transform="rotate(-15 1418 225)" /><path d="M1450 295C1465 288 1491.7 275.5 1510 278C1528.3 280.5 1541.7 291.3 1560 310C1578.3 328.7 1601.7 365 1620 390C1638.3 415 1660 440 1670 460C1680 480 1682.5 493.3 1680 510C1677.5 526.7 1665 548.3 1655 560C1645 571.7 1635.8 575.8 1620 580C1604.2 584.2 1575 588.3 1560 585C1545 581.7 1536.7 574.2 1530 560C1523.3 545.8 1528.3 520 1520 500C1511.7 480 1495 450 1480 440C1465 430 1446.7 443.3 1430 440C1413.3 436.7 1385 431.7 1380 420C1375 408.3 1393.3 386.7 1400 370C1406.7 353.3 1411.7 332.5 1420 320C1428.3 307.5 1435 302 1450 295Z" /><path d="M1420 432C1405 440.3 1369.7 459.3 1330 482C1290.3 504.7 1206.7 553.7 1182 568" fill="none" stroke="#000" stroke-width="41" stroke-linecap="round" stroke-linejoin="round"/><path d="M1590 570C1571.7 578.3 1511.7 601.3 1480 620C1448.3 638.7 1413.3 671.7 1400 682" fill="none" stroke="#000" stroke-width="67" stroke-linecap="round" stroke-linejoin="round"/><path d="M1400 682C1391.7 698.3 1366.3 751.2 1350 780C1333.7 808.8 1310 842.5 1302 855" fill="none" stroke="#000" stroke-width="53" stroke-linecap="round" stroke-linejoin="round"/><ellipse cx="1295" cy="868" rx="46" ry="32" transform="rotate(-30 1295 868)" /><path d="M1560 580C1553.7 600 1526.2 655.8 1522 700C1517.8 744.2 1532.8 820.8 1535 845" fill="none" stroke="#000" stroke-width="51" stroke-linecap="round" stroke-linejoin="round"/><path d="M1610 595L1720 597" fill="none" stroke="#000" stroke-width="39" stroke-linecap="round" stroke-linejoin="round"/><path d="M1650 610L1540 900" fill="none" stroke="#000" stroke-width="33" stroke-linecap="round" stroke-linejoin="round"/><path d="M1140 590L1260 960" fill="none" stroke="#000" stroke-width="35" stroke-linecap="round" stroke-linejoin="round"/><path d="M1050 525C1058.3 527.5 1085 530 1100 540C1115 550 1133.3 577.5 1140 585" fill="none" stroke="#000" stroke-width="47" stroke-linecap="round" stroke-linejoin="round"/><path d="M1248 1058C1248 940 1320 878 1405 878C1490 878 1562 940 1562 1058Z" /></g><g fill="#fff" stroke="none" filter="url(#er)"><ellipse cx="312" cy="335" rx="56" ry="70" /><path d="M360 318C362.5 315.2 379.2 329.3 380 335C380.8 340.7 368.3 354.8 365 352C361.7 349.2 357.5 320.8 360 318Z" /><path d="M150 480C159.5 441.7 181.7 431.7 200 420C218.3 408.3 238.3 408.3 260 410C281.7 411.7 311.7 427 330 430C348.3 433 355 421.3 370 428C385 434.7 403.3 453 420 470C436.7 487 451.7 512.5 470 530C488.3 547.5 508.3 565 530 575C551.7 585 591.7 579.2 600 590C608.3 600.8 585.8 625 580 640C574.2 655 563.3 666.7 565 680C566.7 693.3 575.8 710 590 720C604.2 730 625 738.7 650 740C675 741.3 715 731.3 740 728C765 724.7 783.3 718 800 720C816.7 722 830.8 726.7 840 740C849.2 753.3 851.3 773.3 855 800C858.7 826.7 859.5 866.7 862 900C864.5 933.3 862 976.7 870 1000C878 1023.3 902.5 1030.3 910 1040C917.5 1049.7 927.5 1055 915 1058C902.5 1061 851.7 1061 835 1058C818.3 1055 827.5 1040 815 1040C802.5 1040 845.8 1054.7 760 1058C674.2 1061.3 390 1064.7 300 1060C210 1055.3 242.5 1046.7 220 1030C197.5 1013.3 177.5 988.3 165 960C152.5 931.7 148.7 911.7 145 860C141.3 808.3 142.2 713.3 143 650C143.8 586.7 140.5 518.3 150 480Z" /><path d="M550 600C568.3 598.7 631.7 597 660 592C688.3 587 710 573.7 720 570" fill="none" stroke="#fff" stroke-width="48" stroke-linecap="round" stroke-linejoin="round"/><path d="M720 570L765 552" fill="none" stroke="#fff" stroke-width="30" stroke-linecap="round" stroke-linejoin="round"/><ellipse cx="768" cy="550" rx="20" ry="20" /><ellipse cx="1418" cy="225" rx="55" ry="66" transform="rotate(-15 1418 225)" /><path d="M1450 295C1465 288 1491.7 275.5 1510 278C1528.3 280.5 1541.7 291.3 1560 310C1578.3 328.7 1601.7 365 1620 390C1638.3 415 1660 440 1670 460C1680 480 1682.5 493.3 1680 510C1677.5 526.7 1665 548.3 1655 560C1645 571.7 1635.8 575.8 1620 580C1604.2 584.2 1575 588.3 1560 585C1545 581.7 1536.7 574.2 1530 560C1523.3 545.8 1528.3 520 1520 500C1511.7 480 1495 450 1480 440C1465 430 1446.7 443.3 1430 440C1413.3 436.7 1385 431.7 1380 420C1375 408.3 1393.3 386.7 1400 370C1406.7 353.3 1411.7 332.5 1420 320C1428.3 307.5 1435 302 1450 295Z" /><path d="M1420 432C1405 440.3 1369.7 459.3 1330 482C1290.3 504.7 1206.7 553.7 1182 568" fill="none" stroke="#fff" stroke-width="38" stroke-linecap="round" stroke-linejoin="round"/><path d="M1590 570C1571.7 578.3 1511.7 601.3 1480 620C1448.3 638.7 1413.3 671.7 1400 682" fill="none" stroke="#fff" stroke-width="64" stroke-linecap="round" stroke-linejoin="round"/><path d="M1400 682C1391.7 698.3 1366.3 751.2 1350 780C1333.7 808.8 1310 842.5 1302 855" fill="none" stroke="#fff" stroke-width="50" stroke-linecap="round" stroke-linejoin="round"/><ellipse cx="1295" cy="868" rx="46" ry="32" transform="rotate(-30 1295 868)" /><path d="M1560 580C1553.7 600 1526.2 655.8 1522 700C1517.8 744.2 1532.8 820.8 1535 845" fill="none" stroke="#fff" stroke-width="48" stroke-linecap="round" stroke-linejoin="round"/><path d="M1610 595L1720 597" fill="none" stroke="#fff" stroke-width="36" stroke-linecap="round" stroke-linejoin="round"/><path d="M1650 610L1540 900" fill="none" stroke="#fff" stroke-width="30" stroke-linecap="round" stroke-linejoin="round"/><path d="M1140 590L1260 960" fill="none" stroke="#fff" stroke-width="32" stroke-linecap="round" stroke-linejoin="round"/><path d="M1050 525C1058.3 527.5 1085 530 1100 540C1115 550 1133.3 577.5 1140 585" fill="none" stroke="#fff" stroke-width="44" stroke-linecap="round" stroke-linejoin="round"/><path d="M1248 1058C1248 940 1320 878 1405 878C1490 878 1562 940 1562 1058Z" /></g><path d="M1375 978C1374.7 968.3 1398.3 948.5 1410 948C1421.7 947.5 1444.7 965.3 1445 975C1445.3 984.7 1423.7 1005.5 1412 1006C1400.3 1006.5 1375.3 987.7 1375 978Z" fill="#fff" stroke="#000" stroke-width="10"/><path d="M335 440C354.2 465 412.5 541.7 450 590C487.5 638.3 531.7 695 560 730C588.3 765 596.7 787 620 800C643.3 813 671.7 804.7 700 808C728.3 811.3 768.3 808 790 820C811.7 832 822 856.7 830 880C838 903.3 841.3 935 838 960C834.7 985 822.2 1013.7 810 1030C797.8 1046.3 772.5 1053.3 765 1058" fill="none" stroke="#000" stroke-width="8" stroke-linecap="round"/></g>
<g transform="translate(1350 415) scale(0.125)"><g fill="#000" stroke="none"><path d="M128 540Q128 492 176 492H300Q345 492 365 600Q378 680 378 760H700L740 800V960Q730 1010 690 1010H170Q128 1010 128 960Z" /><path d="M208 1005L258 1005L258 1058L208 1058Z" /><path d="M635 1005L688 1005L688 1058L635 1058Z" /><ellipse cx="728" cy="405" rx="48" ry="68" transform="rotate(35 728 405)" /><path d="M680 485C692.5 477.5 703.3 474.2 715 485C726.7 495.8 735.8 524.2 750 550C764.2 575.8 781.7 615 800 640C818.3 665 841.7 684.2 860 700C878.3 715.8 902.5 725.8 910 735C917.5 744.2 915 752.2 905 755C895 757.8 869.2 751.2 850 752C830.8 752.8 801.7 752 790 760C778.3 768 781.7 783.3 780 800C778.3 816.7 774.2 843.3 780 860C785.8 876.7 804.2 883.3 815 900C825.8 916.7 837.5 940 845 960C852.5 980 855 1005.8 860 1020C865 1034.2 874.2 1038.3 875 1045C875.8 1051.7 876.7 1057.8 865 1060C853.3 1062.2 819.2 1068 805 1058C790.8 1048 789.2 1023 780 1000C770.8 977 760 943.3 750 920C740 896.7 728.3 880 720 860C711.7 840 716.7 815 700 800C683.3 785 645.8 777.5 620 770C594.2 762.5 560.3 764.2 545 755C529.7 745.8 528 729.2 528 715C528 700.8 534.7 689.2 545 670C555.3 650.8 574.2 623.3 590 600C605.8 576.7 625 549.2 640 530C655 510.8 667.5 492.5 680 485Z" /><path d="M1060 880C1064.2 866.7 1078.3 855.3 1090 850C1101.7 844.7 1119.2 844.7 1130 848C1140.8 851.3 1150 861.3 1155 870C1160 878.7 1156.7 892.5 1160 900C1163.3 907.5 1173.3 908.3 1175 915C1176.7 921.7 1175 933.3 1170 940C1165 946.7 1156.7 953.3 1145 955C1133.3 956.7 1113.3 954.2 1100 950C1086.7 945.8 1071.7 941.7 1065 930C1058.3 918.3 1055.8 893.3 1060 880Z" /><path d="M1045 935C1055 930.5 1072.8 947.2 1075 958C1077.2 968.8 1055.5 988.8 1058 1000C1060.5 1011.2 1073 1021.7 1090 1025C1107 1028.3 1141.7 1017.5 1160 1020C1178.3 1022.5 1201.7 1034 1200 1040C1198.3 1046 1176.7 1053 1150 1056C1123.3 1059 1065.8 1059 1040 1058C1014.2 1057 1003 1056.3 995 1050C987 1043.7 988.7 1030.8 992 1020C995.3 1009.2 1006.2 999.2 1015 985C1023.8 970.8 1035 939.5 1045 935Z" /><path d="M1180 940C1196.7 927 1223.3 920 1250 912C1276.7 904 1318.3 891.5 1340 892C1361.7 892.5 1363.3 901.2 1380 915C1396.7 928.8 1416.7 970 1440 975C1463.3 980 1495 960 1520 945C1545 930 1571.7 895.8 1590 885C1608.3 874.2 1616.7 875 1630 880C1643.3 885 1651.7 899.2 1670 915C1688.3 930.8 1723.7 959.2 1740 975C1756.3 990.8 1758 1002.8 1768 1010C1778 1017.2 1774.7 1016.3 1800 1018C1825.3 1019.7 1885 1017.2 1920 1020C1955 1022.8 1995 1029.7 2010 1035C2025 1040.3 2045 1048.5 2010 1052C1975 1055.5 1875 1055 1800 1056C1725 1057 1643.3 1057.7 1560 1058C1476.7 1058.3 1353.3 1061 1300 1058C1246.7 1055 1260 1046.3 1240 1040C1220 1033.7 1195 1028.3 1180 1020C1165 1011.7 1150 1003.3 1150 990C1150 976.7 1163.3 953 1180 940Z" /></g><path d="M1310 955C1305 948.3 1328.3 943.3 1340 945C1351.7 946.7 1366.7 957.5 1380 965C1393.3 972.5 1421.7 986.7 1420 990C1418.3 993.3 1388.3 990.8 1370 985C1351.7 979.2 1315 961.7 1310 955Z" fill="#fff"/><path d="M1560 1000C1555 988.8 1606.7 955 1620 945C1633.3 935 1626.7 933.3 1640 940C1653.3 946.7 1683.3 973.3 1700 985C1716.7 996.7 1748.3 1005.5 1740 1010C1731.7 1014.5 1680 1013.7 1650 1012C1620 1010.3 1565 1011.2 1560 1000Z" fill="#fff"/></g>
<g transform="translate(1350 851.2) scale(0.125)"><g fill="#000" stroke="#000" stroke-width="3" stroke-linejoin="round"><path d="M128 540Q128 492 176 492H300Q345 492 365 600Q378 680 378 760H700L740 800V960Q730 1010 690 1010H170Q128 1010 128 960Z" /><path d="M208 1005L258 1005L258 1058L208 1058Z" /><path d="M635 1005L688 1005L688 1058L635 1058Z" /><ellipse cx="728" cy="405" rx="48" ry="68" transform="rotate(35 728 405)" /><path d="M680 485C692.5 477.5 703.3 474.2 715 485C726.7 495.8 735.8 524.2 750 550C764.2 575.8 781.7 615 800 640C818.3 665 841.7 684.2 860 700C878.3 715.8 902.5 725.8 910 735C917.5 744.2 915 752.2 905 755C895 757.8 869.2 751.2 850 752C830.8 752.8 801.7 752 790 760C778.3 768 781.7 783.3 780 800C778.3 816.7 774.2 843.3 780 860C785.8 876.7 804.2 883.3 815 900C825.8 916.7 837.5 940 845 960C852.5 980 855 1005.8 860 1020C865 1034.2 874.2 1038.3 875 1045C875.8 1051.7 876.7 1057.8 865 1060C853.3 1062.2 819.2 1068 805 1058C790.8 1048 789.2 1023 780 1000C770.8 977 760 943.3 750 920C740 896.7 728.3 880 720 860C711.7 840 716.7 815 700 800C683.3 785 645.8 777.5 620 770C594.2 762.5 560.3 764.2 545 755C529.7 745.8 528 729.2 528 715C528 700.8 534.7 689.2 545 670C555.3 650.8 574.2 623.3 590 600C605.8 576.7 625 549.2 640 530C655 510.8 667.5 492.5 680 485Z" /><path d="M1060 880C1064.2 866.7 1078.3 855.3 1090 850C1101.7 844.7 1119.2 844.7 1130 848C1140.8 851.3 1150 861.3 1155 870C1160 878.7 1156.7 892.5 1160 900C1163.3 907.5 1173.3 908.3 1175 915C1176.7 921.7 1175 933.3 1170 940C1165 946.7 1156.7 953.3 1145 955C1133.3 956.7 1113.3 954.2 1100 950C1086.7 945.8 1071.7 941.7 1065 930C1058.3 918.3 1055.8 893.3 1060 880Z" /><path d="M1045 935C1055 930.5 1072.8 947.2 1075 958C1077.2 968.8 1055.5 988.8 1058 1000C1060.5 1011.2 1073 1021.7 1090 1025C1107 1028.3 1141.7 1017.5 1160 1020C1178.3 1022.5 1201.7 1034 1200 1040C1198.3 1046 1176.7 1053 1150 1056C1123.3 1059 1065.8 1059 1040 1058C1014.2 1057 1003 1056.3 995 1050C987 1043.7 988.7 1030.8 992 1020C995.3 1009.2 1006.2 999.2 1015 985C1023.8 970.8 1035 939.5 1045 935Z" /><path d="M1180 940C1196.7 927 1223.3 920 1250 912C1276.7 904 1318.3 891.5 1340 892C1361.7 892.5 1363.3 901.2 1380 915C1396.7 928.8 1416.7 970 1440 975C1463.3 980 1495 960 1520 945C1545 930 1571.7 895.8 1590 885C1608.3 874.2 1616.7 875 1630 880C1643.3 885 1651.7 899.2 1670 915C1688.3 930.8 1723.7 959.2 1740 975C1756.3 990.8 1758 1002.8 1768 1010C1778 1017.2 1774.7 1016.3 1800 1018C1825.3 1019.7 1885 1017.2 1920 1020C1955 1022.8 1995 1029.7 2010 1035C2025 1040.3 2045 1048.5 2010 1052C1975 1055.5 1875 1055 1800 1056C1725 1057 1643.3 1057.7 1560 1058C1476.7 1058.3 1353.3 1061 1300 1058C1246.7 1055 1260 1046.3 1240 1040C1220 1033.7 1195 1028.3 1180 1020C1165 1011.7 1150 1003.3 1150 990C1150 976.7 1163.3 953 1180 940Z" /></g><g fill="#fff" stroke="none" filter="url(#er)"><path d="M128 540Q128 492 176 492H300Q345 492 365 600Q378 680 378 760H700L740 800V960Q730 1010 690 1010H170Q128 1010 128 960Z" /><path d="M208 1005L258 1005L258 1058L208 1058Z" /><path d="M635 1005L688 1005L688 1058L635 1058Z" /><ellipse cx="728" cy="405" rx="48" ry="68" transform="rotate(35 728 405)" /><path d="M680 485C692.5 477.5 703.3 474.2 715 485C726.7 495.8 735.8 524.2 750 550C764.2 575.8 781.7 615 800 640C818.3 665 841.7 684.2 860 700C878.3 715.8 902.5 725.8 910 735C917.5 744.2 915 752.2 905 755C895 757.8 869.2 751.2 850 752C830.8 752.8 801.7 752 790 760C778.3 768 781.7 783.3 780 800C778.3 816.7 774.2 843.3 780 860C785.8 876.7 804.2 883.3 815 900C825.8 916.7 837.5 940 845 960C852.5 980 855 1005.8 860 1020C865 1034.2 874.2 1038.3 875 1045C875.8 1051.7 876.7 1057.8 865 1060C853.3 1062.2 819.2 1068 805 1058C790.8 1048 789.2 1023 780 1000C770.8 977 760 943.3 750 920C740 896.7 728.3 880 720 860C711.7 840 716.7 815 700 800C683.3 785 645.8 777.5 620 770C594.2 762.5 560.3 764.2 545 755C529.7 745.8 528 729.2 528 715C528 700.8 534.7 689.2 545 670C555.3 650.8 574.2 623.3 590 600C605.8 576.7 625 549.2 640 530C655 510.8 667.5 492.5 680 485Z" /><path d="M1060 880C1064.2 866.7 1078.3 855.3 1090 850C1101.7 844.7 1119.2 844.7 1130 848C1140.8 851.3 1150 861.3 1155 870C1160 878.7 1156.7 892.5 1160 900C1163.3 907.5 1173.3 908.3 1175 915C1176.7 921.7 1175 933.3 1170 940C1165 946.7 1156.7 953.3 1145 955C1133.3 956.7 1113.3 954.2 1100 950C1086.7 945.8 1071.7 941.7 1065 930C1058.3 918.3 1055.8 893.3 1060 880Z" /><path d="M1045 935C1055 930.5 1072.8 947.2 1075 958C1077.2 968.8 1055.5 988.8 1058 1000C1060.5 1011.2 1073 1021.7 1090 1025C1107 1028.3 1141.7 1017.5 1160 1020C1178.3 1022.5 1201.7 1034 1200 1040C1198.3 1046 1176.7 1053 1150 1056C1123.3 1059 1065.8 1059 1040 1058C1014.2 1057 1003 1056.3 995 1050C987 1043.7 988.7 1030.8 992 1020C995.3 1009.2 1006.2 999.2 1015 985C1023.8 970.8 1035 939.5 1045 935Z" /><path d="M1180 940C1196.7 927 1223.3 920 1250 912C1276.7 904 1318.3 891.5 1340 892C1361.7 892.5 1363.3 901.2 1380 915C1396.7 928.8 1416.7 970 1440 975C1463.3 980 1495 960 1520 945C1545 930 1571.7 895.8 1590 885C1608.3 874.2 1616.7 875 1630 880C1643.3 885 1651.7 899.2 1670 915C1688.3 930.8 1723.7 959.2 1740 975C1756.3 990.8 1758 1002.8 1768 1010C1778 1017.2 1774.7 1016.3 1800 1018C1825.3 1019.7 1885 1017.2 1920 1020C1955 1022.8 1995 1029.7 2010 1035C2025 1040.3 2045 1048.5 2010 1052C1975 1055.5 1875 1055 1800 1056C1725 1057 1643.3 1057.7 1560 1058C1476.7 1058.3 1353.3 1061 1300 1058C1246.7 1055 1260 1046.3 1240 1040C1220 1033.7 1195 1028.3 1180 1020C1165 1011.7 1150 1003.3 1150 990C1150 976.7 1163.3 953 1180 940Z" /></g><path d="M1310 955C1305 948.3 1328.3 943.3 1340 945C1351.7 946.7 1366.7 957.5 1380 965C1393.3 972.5 1421.7 986.7 1420 990C1418.3 993.3 1388.3 990.8 1370 985C1351.7 979.2 1315 961.7 1310 955Z" fill="#fff" stroke="#000" stroke-width="10"/><path d="M1560 1000C1555 988.8 1606.7 955 1620 945C1633.3 935 1626.7 933.3 1640 940C1653.3 946.7 1683.3 973.3 1700 985C1716.7 996.7 1748.3 1005.5 1740 1010C1731.7 1014.5 1680 1013.7 1650 1012C1620 1010.3 1565 1011.2 1560 1000Z" fill="#fff" stroke="#000" stroke-width="10"/><path d="M545 755C557.5 757.5 594.2 762.5 620 770C645.8 777.5 680.8 783.3 700 800C719.2 816.7 725 848.3 735 870C745 891.7 755.8 920 760 930" fill="none" stroke="#000" stroke-width="8" stroke-linecap="round"/></g>
</svg>
<svg class="i" style="left:0;top:0" width="1920" height="1080" viewBox="0 0 1920 1080">
<defs>
<linearGradient id="gHair" x1="0" y1="0" x2="0" y2="1"><stop offset="0" stop-color="#fbd034"/><stop offset="0.600" stop-color="#f7a91c"/><stop offset="1" stop-color="#e8861a"/></linearGradient>
<linearGradient id="gBlue" x1="0" y1="0" x2="1" y2="1"><stop offset="0" stop-color="#2b92e4"/><stop offset="1" stop-color="#1667c2"/></linearGradient>
<linearGradient id="gTxt" x1="0" y1="0" x2="0" y2="1"><stop offset="0" stop-color="#39a9ea"/><stop offset="1" stop-color="#1d74cf"/></linearGradient>
<linearGradient id="gRed" x1="0" y1="0" x2="0" y2="1"><stop offset="0" stop-color="#f02a2e"/><stop offset="0.550" stop-color="#e01a2a"/><stop offset="1" stop-color="#c81428"/></linearGradient>
<radialGradient id="gDark" cx="0.400" cy="0.350" r="0.700"><stop offset="0" stop-color="#c41a1e"/><stop offset="1" stop-color="#7c0a10"/></radialGradient>
<linearGradient id="gYel" x1="0" y1="0" x2="1" y2="0"><stop offset="0" stop-color="#f6de5a"/><stop offset="0.450" stop-color="#f0d020"/><stop offset="1" stop-color="#f7e37a"/></linearGradient>
<linearGradient id="gNavy" x1="0" y1="0" x2="1" y2="1"><stop offset="0" stop-color="#1d4f8f"/><stop offset="0.600" stop-color="#1a4583"/><stop offset="1" stop-color="#2f5f9c"/></linearGradient>
</defs>
<rect x="0" y="182" width="44" height="6.500" fill="#858585"/>
<rect x="68" y="184" width="1" height="4" fill="#777"/>
<rect x="245" y="182" width="1.500" height="6" fill="#e0245a"/><rect x="248.500" y="183" width="1.500" height="5" fill="#7fe0e6"/>
<rect x="0" y="182" width="1640" height="1" fill="#cfd2d6"/>
<rect x="0" y="993" width="44" height="14" fill="#9c9c9c"/><rect x="0" y="993" width="27" height="14" fill="#8c8c8c"/>
<rect x="17" y="990.500" width="51" height="1.300" fill="#2030d0"/>
<path d="M68.500 992V1007" stroke="#888" stroke-width="1" stroke-dasharray="2 2"/>
<rect x="245" y="990" width="1.500" height="17" fill="#d01830"/><rect x="248" y="990" width="2" height="17" fill="#8fe6ee"/>
<rect x="1864" y="1004" width="56" height="3" fill="#8c8c8c"/>
<rect x="1657" y="1004" width="1.300" height="3" fill="#e0245a"/><rect x="1660" y="1004" width="1.300" height="3" fill="#7fe0e6"/>
<g>
<path d="M98.500 743H155L188 774V860H98.500Z" fill="url(#gYel)"/>
<path d="M98.500 743H155L188 774V825L98.500 806Z" fill="url(#gNavy)"/>
<path d="M155 743Q160 760 157 770Q170 768 188 774Z" fill="#5f7fb4"/>
<path d="M124.300 743V806M98.500 781.200H188" stroke="#fff" stroke-width="2.200" fill="none"/>
<rect x="114.500" y="771.500" width="19.500" height="19.500" fill="#2a5a94" stroke="#fff" stroke-width="2.400"/>
<rect x="123.300" y="780.200" width="2.200" height="2.200" fill="#fff"/>
<text x="121" y="853" font-family="Liberation Sans,sans-serif" font-weight="bold" font-size="25.500" fill="#0a0a0a" textLength="64" lengthAdjust="spacingAndGlyphs">.dwg</text>
</g>
<rect x="24" y="880.500" width="233" height="84" rx="42" fill="#8c0c18"/>
<rect x="22.800" y="879" width="233" height="83.500" rx="41.700" fill="url(#gRed)"/>
<circle cx="214.500" cy="921.500" r="26" fill="#6c080e"/>
<circle cx="214" cy="920.800" r="25" fill="url(#gDark)"/>
<path d="M207.500 904H220.500V921H229L214 939.500 199 921H207.500Z" fill="#fff"/>
<text x="43" y="933.400" font-family="Liberation Sans,sans-serif" font-weight="bold" font-size="31" fill="#fff" textLength="136.500" lengthAdjust="spacingAndGlyphs">DOWNLOAD</text>
<g transform="translate(1680 180) scale(0.166667)" stroke-linejoin="round">
<path d="M1010 310Q1050 320 1075 360Q1130 350 1180 375Q1215 410 1205 470Q1195 510 1180 530Q1190 600 1165 640Q1140 630 1135 590Q1100 560 1090 520Q1050 460 1045 400Q1040 350 1010 310Z" fill="#f8b51e" stroke="#c87a10" stroke-width="6"/>
<path d="M1085 385Q1140 375 1170 410Q1185 450 1170 500Q1150 470 1110 440Z" fill="#fcd34a"/>
<path d="M460 895L390 939 364 1017 442 1061 486 991 591 965 714 1070 775 1044 705 930Z" fill="url(#gBlue)" stroke="#0f4a96" stroke-width="7"/>
<path d="M364 1017L442 1061 436 1085 360 1060Z" fill="#4a4a4a"/><path d="M714 1070L775 1044 785 1068 728 1092Z" fill="#4a4a4a"/>
<path d="M364 1070L294 1131 320 1153 425 1114 438 1079Z" fill="url(#gBlue)" stroke="#0f4a96" stroke-width="7"/>
<path d="M731 1087L792 1175 832 1179 827 1140 779 1070Z" fill="url(#gBlue)" stroke="#0f4a96" stroke-width="7"/>
<path d="M490 615Q560 650 640 640Q720 640 790 612Q850 600 895 625Q880 700 850 745Q800 770 755 755L730 700Q715 800 722 895L690 940 547 930 477 886Q500 800 500 740Q440 700 360 725L340 690Q410 640 490 615Z" fill="url(#gBlue)" stroke="#0f4a96" stroke-width="7"/>
<path d="M600 650Q640 760 610 930L660 935Q690 800 660 650Z" fill="#1767c0"/><path d="M477 886L547 930 690 940 722 895" fill="none" stroke="#5a5a5a" stroke-width="14"/><path d="M625 650Q650 780 625 925" fill="none" stroke="#6a6a6a" stroke-width="10"/>
<path d="M108 852L1055 482" stroke="#4a2208" stroke-width="38" stroke-linecap="round"/><path d="M108 852L1055 482" stroke="#a5642c" stroke-width="25" stroke-linecap="round"/>
<ellipse cx="855" cy="440" rx="28" ry="42" fill="#f0b07a" stroke="#4a2208" stroke-width="6"/>
<path d="M385 330Q360 470 440 560Q540 640 680 610Q820 570 850 440Q860 380 835 330Z" fill="#f6c08c" stroke="#4a2208" stroke-width="7"/>
<path d="M800 350L835 350 835 440 800 430Z" fill="#f7a91c"/>
<ellipse cx="497" cy="392" rx="55" ry="40" fill="#fff" stroke="#4a2208" stroke-width="6"/><ellipse cx="682" cy="396" rx="58" ry="40" fill="#fff" stroke="#4a2208" stroke-width="6"/>
<circle cx="505" cy="385" r="26" fill="#3aa4c8"/><circle cx="675" cy="390" r="26" fill="#3aa4c8"/><circle cx="505" cy="383" r="12" fill="#123"/><circle cx="675" cy="388" r="12" fill="#123"/>
<path d="M510 505Q590 545 680 490" fill="none" stroke="#4a2208" stroke-width="7" stroke-linecap="round"/><path d="M560 440Q545 475 580 480" fill="none" stroke="#4a2208" stroke-width="5" stroke-linecap="round"/>
<path d="M405 250L410 160 430 178 445 120 472 138 520 60 537 97 600 45 620 72 690 28 700 77 745 70 750 112 800 130 795 166 845 200 825 226 838 275 400 270Z" fill="url(#gHair)" stroke="#a8550e" stroke-width="6"/>
<path d="M470 240Q480 150 530 100Q520 180 540 245ZM580 245Q590 130 660 70Q640 170 660 250ZM700 250Q720 160 770 140Q760 200 780 255Z" fill="#fde06a" fill-opacity="0.700"/>
<path d="M383 255Q600 300 835 262Q848 300 838 345Q600 395 376 335Q370 295 383 255Z" fill="#3c3c3c" stroke="#1c1c1c" stroke-width="5"/>
<path d="M835 285Q900 240 960 262Q985 280 1000 312Q950 285 900 300Q870 310 840 320Z" fill="#333"/><path d="M840 310Q920 300 945 350Q955 390 945 425Q925 380 895 350Q870 335 840 340Z" fill="#333"/>
<path d="M285 770Q290 740 330 735Q370 735 385 770Q380 810 340 815Q295 815 285 770Z" fill="#f6c08c" stroke="#4a2208" stroke-width="6"/>
<path d="M820 565Q825 535 865 535Q900 540 905 575Q895 605 860 610Q825 605 820 565Z" fill="#f6c08c" stroke="#4a2208" stroke-width="6"/>
</g>
<text transform="translate(1651 402) rotate(11)" font-family="Liberation Sans,sans-serif" font-size="46" fill="url(#gTxt)" stroke="#2b8fdd" stroke-width="2.400" stroke-linejoin="round" textLength="119" lengthAdjust="spacing">P<tspan font-size="39">islik</tspan></text>
<text transform="translate(1773 428) rotate(-11)" font-family="Liberation Sans,sans-serif" font-size="46" fill="url(#gTxt)" stroke="#2b8fdd" stroke-width="2.400" stroke-linejoin="round" textLength="144" lengthAdjust="spacing">M<tspan font-size="39">imar</tspan></text>
</svg><div class="r" style="left:0px;top:0px;width:1920px;height:52px;background:#222933;"></div>
<div class="r" style="left:0px;top:52px;width:1920px;height:100px;background:#3b4453;"></div>
<div class="r" style="left:0px;top:150px;width:1920px;height:2px;background:#2c3340;"></div>
<div class="r" style="left:0px;top:152px;width:1920px;height:26px;background:#222933;"></div>
<div class="r" style="left:0px;top:178px;width:1920px;height:3.5px;background:#3a4250;"></div>
<div class="r" style="left:1917px;top:52px;width:3px;height:100px;background:#222933;"></div>
<svg class="i" style="left:15px;top:2px" width="24" height="22" viewBox="0 0 24 22" ><path d="M3 1H21Q23 1 23 3V15L19 21H3Q1 21 1 19V3Q1 1 3 1Z" fill="#d4213d"/><path d="M1 17L19 17 23 13V15L19 21H3Q1 21 1 19Z" fill="#8f1228"/><text x="12" y="15" font-family="Liberation Sans,sans-serif" font-weight="bold" font-size="14" fill="#fff" text-anchor="middle">A</text></svg>
<svg class="i" style="left:42.0px;top:12.0px" width="7" height="4" viewBox="0 0 7 4" ><path d="M0 0H7L3.5 4Z" fill="#d5d8dd"/></svg>
<svg class="i" style="left:61px;top:8px" width="17" height="13" viewBox="0 0 17 13" ><path d="M0 0H11L16 5V12H0Z" fill="#dcdcdc"/><path d="M11 0V5H16Z" fill="#9a9a9a"/></svg>
<svg class="i" style="left:85px;top:8px" width="17" height="13" viewBox="0 0 17 13" ><path d="M0 1H6L8 3H14V5H4L0 12Z" fill="#dcdcdc"/><path d="M4 6H17L13 13H0Z" fill="#dcdcdc"/></svg>
<svg class="i" style="left:109px;top:7px" width="17" height="15" viewBox="0 0 17 15" ><path d="M0 0H16V15H0Z" fill="#b9bcc0"/><rect x="3" y="0" width="10" height="6" fill="#3a3f48"/><rect x="3" y="9" width="10" height="6" fill="#f4f4f4"/><rect x="9" y="1" width="2" height="4" fill="#ddd"/></svg>
<svg class="i" style="left:133px;top:7px" width="18" height="15" viewBox="0 0 18 15" ><path d="M0 0H14V13H0Z" fill="#b9bcc0"/><rect x="3" y="0" width="8" height="5" fill="#3a3f48"/><rect x="3" y="8" width="6" height="5" fill="#f4f4f4"/><path d="M7 13L15 5 18 8 10 15 7 15Z" fill="#e9b23c"/><path d="M14 4L16 3 18 6 17 7Z" fill="#e0566c"/></svg>
<svg class="i" style="left:157px;top:6px" width="17" height="17" viewBox="0 0 17 17" ><rect x="1" y="0" width="10" height="16" rx="1.5" fill="#b9bcc0"/><rect x="2.5" y="2" width="7" height="10" fill="#6b7079"/><path d="M7 10H11L12 11H17V17H7Z" fill="#e9b23c"/></svg>
<svg class="i" style="left:182px;top:6px" width="15" height="17" viewBox="0 0 15 17" ><rect x="4" y="0" width="10" height="16" rx="1.5" fill="#d8dadd"/><rect x="5.5" y="2" width="7" height="10" fill="#39414f"/><path d="M0 6H6V3L11 7.500 6 12V9H0Z" fill="#3d9be0"/></svg>
<svg class="i" style="left:204px;top:6px" width="19" height="17" viewBox="0 0 19 17" ><rect x="4" y="0" width="11" height="5" fill="#f2f2f2"/><rect x="0" y="5" width="19" height="8" rx="1" fill="#e3e4e6"/><rect x="4" y="10" width="11" height="6" fill="#5aa9e6"/><rect x="4" y="10" width="11" height="1.500" fill="#fff"/></svg>
<svg class="i" style="left:229px;top:7px" width="18" height="13" viewBox="0 0 18 13" ><path d="M0 5L7 0V3Q16 3 17 12Q13 7 7 8V11Z" fill="#d8d8d8"/></svg>
<svg class="i" style="left:251.5px;top:12.25px" width="6" height="3.5" viewBox="0 0 6 3.5" ><path d="M0 0H6L3.0 3.5Z" fill="#d5d8dd"/></svg>
<svg class="i" style="left:265px;top:7px" width="18" height="13" viewBox="0 0 18 13" ><path d="M17 5L10 0V3Q1 3 0 12Q4 7 10 8V11Z" fill="#6d737d"/></svg>
<svg class="i" style="left:288.0px;top:12.25px" width="6" height="3.5" viewBox="0 0 6 3.5" ><path d="M0 0H6L3.0 3.5Z" fill="#8a8f98"/></svg>
<svg class="i" style="left:300px;top:9px" width="10" height="10" viewBox="0 0 10 10" ><rect x="1" y="0" width="8" height="1.6" fill="#d8d8d8"/><path d="M0 4H10L5 9Z" fill="#d8d8d8"/></svg>
<svg class="i" style="left:317px;top:6px" width="17" height="16" viewBox="0 0 17 16" ><path d="M0 8L17 0 12 15 8 11 5 15 5 10Z" fill="#3fa0e3"/><path d="M5 10L17 0 8 11Z" fill="#1d6fb5"/></svg>
<div class="t" style="left:338.0px;top:6.0px;font-size:12px;line-height:16px;color:#e9ebee;letter-spacing:-0.60px;">Share</div>
<div class="t" style="left:647.0px;top:6.0px;font-size:12px;line-height:16px;color:#e9ebee;letter-spacing:-0.13px;">Autodesk AutoCAD 2024</div>
<div class="t" style="left:789.0px;top:6.0px;font-size:12px;line-height:16px;color:#e9ebee;letter-spacing:0.01px;">Soyut İnsan (PislikMimar.com).dwg</div>
<svg class="i" style="left:1254px;top:9px" width="6" height="10" viewBox="0 0 6 10" ><path d="M0 0L5 5 0 10Z" fill="#d8d8d8"/></svg>
<div class="r" style="left:1264px;top:4px;width:180px;height:20px;background:#3b4453;"></div>
<div class="t" style="left:1268.0px;top:6.5px;font-size:11px;line-height:15px;color:#9aa1ad;letter-spacing:-0.18px;font-style:italic;">Type a keyword or phrase</div>
<svg class="i" style="left:1449px;top:6px" width="16" height="16" viewBox="0 0 16 16" ><circle cx="6.5" cy="6.500" r="5" fill="none" stroke="#e0e0e0" stroke-width="1.5"/><path d="M10 10L15 15" stroke="#e0e0e0" stroke-width="1.8"/></svg>
<svg class="i" style="left:1473px;top:5px" width="17" height="17" viewBox="0 0 17 17" ><circle cx="8.5" cy="5" r="4.500" fill="#4aa3e8"/><path d="M0 17Q0 9 8.500 9Q17 9 17 17Z" fill="#4aa3e8"/></svg>
<div class="t" style="left:1494.0px;top:6.5px;font-size:12px;line-height:16px;color:#e9ebee;letter-spacing:0.23px;">mimarlucky</div>
<svg class="i" style="left:1578.0px;top:12.75px" width="6" height="3.5" viewBox="0 0 6 3.5" ><path d="M0 0H6L3.0 3.5Z" fill="#d5d8dd"/></svg>
<svg class="i" style="left:1595px;top:6px" width="15" height="16" viewBox="0 0 15 16" ><path d="M0 1H3L5 10H13L15 3H4" fill="none" stroke="#e0e0e0" stroke-width="1.6"/><path d="M4.500 4H14L12.500 9H5.500Z" fill="#e0e0e0"/><circle cx="6" cy="13.500" r="1.6" fill="#e0e0e0"/><circle cx="12" cy="13.500" r="1.6" fill="#e0e0e0"/></svg>
<svg class="i" style="left:1618px;top:6px" width="17" height="16" viewBox="0 0 17 16" ><path d="M8.500 0L11 0 17 14 13 14 8.500 4 4 14 0 14 6 0Z" fill="#e0e0e0"/><circle cx="8.500" cy="10" r="2.500" fill="#e0e0e0"/></svg>
<svg class="i" style="left:1639.5px;top:12.75px" width="6" height="3.5" viewBox="0 0 6 3.5" ><path d="M0 0H6L3.0 3.5Z" fill="#d5d8dd"/></svg>
<div class="r" style="left:1655px;top:5px;width:1px;height:18px;background:#4c5563;"></div>
<svg class="i" style="left:1664px;top:6px" width="17" height="17" viewBox="0 0 17 17" ><circle cx="8.500" cy="8.500" r="8" fill="#e0e0e0"/><text x="8.500" y="13" font-family="Liberation Sans,sans-serif" font-weight="bold" font-size="12" fill="#222933" text-anchor="middle">?</text></svg>
<svg class="i" style="left:1687.5px;top:12.75px" width="6" height="3.5" viewBox="0 0 6 3.5" ><path d="M0 0H6L3.0 3.5Z" fill="#d5d8dd"/></svg>
<svg class="i" style="left:1701px;top:6px" width="17" height="17" viewBox="0 0 17 17" ><path d="M8.500 0A8 8 0 1 1 3 14L0 16 1 11A8 8 0 0 1 8.500 0Z" fill="#c9cbcf"/><path d="M5 8L12 5M5 11L12 8" stroke="#8d9199" stroke-width="1"/></svg>
<div class="r" style="left:1800px;top:13px;width:10px;height:1px;background:#e6e6e6;"></div>
<svg class="i" style="left:1846px;top:9px" width="11" height="11" viewBox="0 0 11 11" ><rect x="0.500" y="2.500" width="8" height="8" rx="1" fill="none" stroke="#e6e6e6" stroke-width="1"/><path d="M2.500 2.500V1.500Q2.500 0.500 3.500 0.500H9.500Q10.500 0.500 10.500 1.500V7.500Q10.500 8.500 9.500 8.500H8.500" fill="none" stroke="#e6e6e6" stroke-width="1"/></svg>
<svg class="i" style="left:1892px;top:9px" width="11" height="11" viewBox="0 0 11 11" ><path d="M0.500 0.500L10.500 10.500M10.500 0.500L0.500 10.500" stroke="#e6e6e6" stroke-width="1.2"/></svg>
<div class="r" style="left:5px;top:32px;width:49px;height:20px;background:linear-gradient(#2b323e,#3b4453);border-radius:2px 2px 0 0;"></div>
<div class="t" style="left:13.0px;top:33.5px;font-size:12px;line-height:16px;color:#ffffff;letter-spacing:0.25px;">Home</div>
<div class="t" style="left:65.0px;top:33.5px;font-size:12px;line-height:16px;color:#ccd0d6;letter-spacing:-0.00px;">Insert</div>
<div class="t" style="left:115.0px;top:33.5px;font-size:12px;line-height:16px;color:#ccd0d6;letter-spacing:0.12px;">Annotate</div>
<div class="t" style="left:184.0px;top:33.5px;font-size:12px;line-height:16px;color:#ccd0d6;letter-spacing:-0.10px;">Parametric</div>
<div class="t" style="left:261.0px;top:33.5px;font-size:12px;line-height:16px;color:#ccd0d6;letter-spacing:-0.20px;">View</div>
<div class="t" style="left:306.0px;top:33.5px;font-size:12px;line-height:16px;color:#ccd0d6;letter-spacing:-0.06px;">Manage</div>
<div class="t" style="left:369.0px;top:33.5px;font-size:12px;line-height:16px;color:#ccd0d6;letter-spacing:0.33px;">Output</div>
<div class="t" style="left:427.0px;top:33.5px;font-size:12px;line-height:16px;color:#ccd0d6;letter-spacing:0.19px;">Add-ins</div>
<div class="t" style="left:489.5px;top:33.5px;font-size:12px;line-height:16px;color:#ccd0d6;letter-spacing:-0.08px;">Collaborate</div>
<div class="t" style="left:570.0px;top:33.5px;font-size:12px;line-height:16px;color:#ccd0d6;letter-spacing:-0.42px;">Express Tools</div>
<div class="t" style="left:659.5px;top:33.5px;font-size:12px;line-height:16px;color:#ccd0d6;letter-spacing:-0.20px;">Featured Apps</div>
<div class="r" style="left:746px;top:32px;width:54px;height:20px;background:#1879b4;border:1px solid #2a93d1;box-sizing:border-box;"></div>
<div class="t" style="left:754.0px;top:33.5px;font-size:12px;line-height:16px;color:#ffffff;letter-spacing:0.16px;">Layout</div>
<svg class="i" style="left:822px;top:39px" width="15" height="8" viewBox="0 0 15 8" ><rect width="15" height="8" rx="1" fill="#f2f2f2"/><path d="M4.500 6L7.500 2.500 10.500 6Z" fill="#555"/></svg>
<svg class="i" style="left:840.5px;top:41.75px" width="6" height="3.5" viewBox="0 0 6 3.5" ><path d="M0 0H6L3.0 3.5Z" fill="#d5d8dd"/></svg><div class="r" style="left:225px;top:54px;width:1px;height:96px;background:#2d3441;"></div>
<div class="r" style="left:226px;top:54px;width:1px;height:96px;background:#454e5d;"></div>
<div class="r" style="left:475px;top:54px;width:1px;height:96px;background:#2d3441;"></div>
<div class="r" style="left:476px;top:54px;width:1px;height:96px;background:#454e5d;"></div>
<div class="r" style="left:665px;top:54px;width:1px;height:96px;background:#2d3441;"></div>
<div class="r" style="left:666px;top:54px;width:1px;height:96px;background:#454e5d;"></div>
<div class="r" style="left:937px;top:54px;width:1px;height:96px;background:#2d3441;"></div>
<div class="r" style="left:938px;top:54px;width:1px;height:96px;background:#454e5d;"></div>
<div class="r" style="left:1098px;top:54px;width:1px;height:96px;background:#2d3441;"></div>
<div class="r" style="left:1099px;top:54px;width:1px;height:96px;background:#454e5d;"></div>
<div class="r" style="left:1362px;top:54px;width:1px;height:96px;background:#2d3441;"></div>
<div class="r" style="left:1363px;top:54px;width:1px;height:96px;background:#454e5d;"></div>
<div class="r" style="left:1432px;top:54px;width:1px;height:96px;background:#2d3441;"></div>
<div class="r" style="left:1433px;top:54px;width:1px;height:96px;background:#454e5d;"></div>
<div class="r" style="left:1529px;top:54px;width:1px;height:96px;background:#2d3441;"></div>
<div class="r" style="left:1530px;top:54px;width:1px;height:96px;background:#454e5d;"></div>
<div class="r" style="left:1620px;top:54px;width:1px;height:96px;background:#2d3441;"></div>
<div class="r" style="left:1621px;top:54px;width:1px;height:96px;background:#454e5d;"></div>
<svg class="i" style="left:5px;top:58px" width="36" height="36" viewBox="0 0 36 36" ><path d="M3.500 32.500L32.500 3.500" stroke="#e4e6ea" stroke-width="1.3"/><rect x="1.500" y="30.500" width="4" height="4" fill="#74b6ec"/><rect x="30.500" y="1.500" width="4" height="4" fill="#74b6ec"/></svg>
<div class="t" style="left:12.5px;top:95.0px;font-size:12px;line-height:16px;color:#e9ebee;letter-spacing:-0.30px;">Line</div>
<svg class="i" style="left:49px;top:63px" width="36" height="26" viewBox="0 0 36 26" ><path d="M3 20.500H23Q32 20.500 32 13Q32 5.500 23 5.500" fill="none" stroke="#e4e6ea" stroke-width="1.3"/><rect x="1" y="18.500" width="4" height="4" fill="#74b6ec"/><rect x="20.500" y="18.500" width="4" height="4" fill="#74b6ec"/><rect x="20.500" y="3.500" width="4" height="4" fill="#74b6ec"/></svg>
<div class="t" style="left:45.0px;top:95.0px;font-size:12px;line-height:16px;color:#e9ebee;letter-spacing:-0.00px;">Polyline</div>
<svg class="i" style="left:99px;top:59px" width="34" height="34" viewBox="0 0 34 34" ><circle cx="16.600" cy="16.300" r="15.300" fill="none" stroke="#e4e6ea" stroke-width="1.3"/><path d="M16.500 17L24 9" stroke="#74b6ec" stroke-width="1.4"/><path d="M25.500 7.500L20.500 9 24 12.500Z" fill="#74b6ec"/><rect x="14.500" y="15" width="4" height="4" fill="#74b6ec"/></svg>
<div class="t" style="left:101.5px;top:95.0px;font-size:12px;line-height:16px;color:#e9ebee;letter-spacing:-0.19px;">Circle</div>
<svg class="i" style="left:112.6px;top:112.25px" width="6" height="3.5" viewBox="0 0 6 3.5" ><path d="M0 0H6L3.0 3.5Z" fill="#d5d8dd"/></svg>
<svg class="i" style="left:146px;top:59px" width="34" height="34" viewBox="0 0 34 34" ><path d="M3.500 30.500Q6 8 30.500 3.500" fill="none" stroke="#e4e6ea" stroke-width="1.3"/><rect x="1.500" y="28.500" width="4" height="4" fill="#74b6ec"/><rect x="28.500" y="1.500" width="4" height="4" fill="#74b6ec"/><rect x="9.500" y="9.500" width="4" height="4" fill="#74b6ec"/></svg>
<div class="t" style="left:153.5px;top:95.0px;font-size:12px;line-height:16px;color:#e9ebee;letter-spacing:-0.17px;">Arc</div>
<svg class="i" style="left:159.0px;top:112.25px" width="6" height="3.5" viewBox="0 0 6 3.5" ><path d="M0 0H6L3.0 3.5Z" fill="#d5d8dd"/></svg>
<svg class="i" style="left:187px;top:62px" width="17" height="14" viewBox="0 0 17 14" ><rect x="1.500" y="2.500" width="13" height="9" fill="none" stroke="#e4e6ea" stroke-width="1.3"/><rect x="0" y="1" width="3" height="3" fill="#e4e6ea"/><rect x="13" y="10" width="3" height="3" fill="#e4e6ea"/></svg>
<svg class="i" style="left:187px;top:85px" width="17" height="15" viewBox="0 0 17 15" ><ellipse cx="8" cy="8" rx="7" ry="5" fill="none" stroke="#e4e6ea" stroke-width="1.3" stroke-dasharray="5 2"/><circle cx="8" cy="8" r="1.200" fill="#e4e6ea"/><circle cx="15" cy="8" r="1.200" fill="#e4e6ea"/></svg>
<svg class="i" style="left:187px;top:108px" width="17" height="18" viewBox="0 0 17 18" ><rect x="3" y="3" width="11" height="12" fill="#8a919c"/><path d="M3 9L9 3M3 15L14 4M8 15L14 9" stroke="#3b4453" stroke-width="1"/><path d="M0 3H17M0 15H17M3 0V18M14 0V18" stroke="#e4e6ea" stroke-width="1.2"/></svg>
<svg class="i" style="left:209.5px;top:67.25px" width="6" height="3.5" viewBox="0 0 6 3.5" ><path d="M0 0H6L3.0 3.5Z" fill="#d5d8dd"/></svg>
<svg class="i" style="left:209.5px;top:90.85px" width="6" height="3.5" viewBox="0 0 6 3.5" ><path d="M0 0H6L3.0 3.5Z" fill="#d5d8dd"/></svg>
<svg class="i" style="left:209.5px;top:115.25px" width="6" height="3.5" viewBox="0 0 6 3.5" ><path d="M0 0H6L3.0 3.5Z" fill="#d5d8dd"/></svg>
<div class="t" style="left:93.0px;top:133.0px;font-size:12px;line-height:16px;color:#e9ebee;letter-spacing:-0.25px;">Draw</div>
<svg class="i" style="left:126.0px;top:139.25px" width="8" height="4.5" viewBox="0 0 8 4.5" ><path d="M0 0H8L4.0 4.5Z" fill="#d5d8dd"/></svg>
<svg class="i" style="left:232px;top:61px" width="17" height="17" viewBox="0 0 17 17" ><path d="M8.500 0L11.500 3.500H9.500V7.500H13.500V5.500L17 8.500 13.500 11.500V9.500H9.500V13.500H11.500L8.500 17 5.500 13.500H7.500V9.500H3.500V11.500L0 8.500 3.500 5.500V7.500H7.500V3.500H5.500Z" fill="#e4e6ea"/></svg>
<div class="t" style="left:254.6px;top:61.0px;font-size:12px;line-height:16px;color:#e9ebee;letter-spacing:0.01px;">Move</div>
<svg class="i" style="left:232px;top:85px" width="17" height="17" viewBox="0 0 17 17" ><circle cx="4" cy="4" r="3" fill="none" stroke="#e4e6ea" stroke-width="1.300"/><circle cx="7" cy="12.500" r="3" fill="none" stroke="#74b6ec" stroke-width="1.300"/><circle cx="11.500" cy="12.500" r="3" fill="none" stroke="#74b6ec" stroke-width="1.300"/><path d="M9 2.500H14V7" fill="none" stroke="#e4e6ea" stroke-width="1.300"/><path d="M12 6.500L14 9.500 16 6.500Z" fill="#e4e6ea"/></svg>
<div class="t" style="left:254.6px;top:84.6px;font-size:12px;line-height:16px;color:#e9ebee;letter-spacing:-0.23px;">Copy</div>
<svg class="i" style="left:232px;top:108px" width="18" height="18" viewBox="0 0 18 18" ><path d="M1.500 1.500H7.500V16.500H1.500Z" fill="none" stroke="#e4e6ea" stroke-width="1.300"/><path d="M10.500 1.500H13L16.500 16.500H10.500" fill="none" stroke="#e4e6ea" stroke-width="1.300"/><path d="M7 12.500H12" stroke="#74b6ec" stroke-width="1.300"/><path d="M11 10L14 12.500 11 15Z" fill="#74b6ec"/></svg>
<div class="t" style="left:254.6px;top:109.0px;font-size:12px;line-height:16px;color:#e9ebee;letter-spacing:-0.29px;">Stretch</div>
<svg class="i" style="left:304px;top:60px" width="17" height="18" viewBox="0 0 17 18" ><path d="M13 5A6.500 6.500 0 1 0 15 10" fill="none" stroke="#e4e6ea" stroke-width="1.500"/><path d="M9 1L14.500 3 11.500 8Z" fill="#e4e6ea"/></svg>
<div class="t" style="left:326.5px;top:61.0px;font-size:12px;line-height:16px;color:#e9ebee;letter-spacing:-0.31px;">Rotate</div>
<svg class="i" style="left:304px;top:84px" width="18" height="17" viewBox="0 0 18 17" ><path d="M7 2V15.500H1Z" fill="none" stroke="#e4e6ea" stroke-width="1.200"/><path d="M10.500 2V15.500H16.500Z" fill="none" stroke="#74b6ec" stroke-width="1.200"/></svg>
<div class="t" style="left:326.5px;top:84.6px;font-size:12px;line-height:16px;color:#e9ebee;letter-spacing:0.20px;">Mirror</div>
<svg class="i" style="left:304px;top:108px" width="17" height="17" viewBox="0 0 17 17" ><rect x="1" y="1" width="14.500" height="14.500" fill="none" stroke="#e4e6ea" stroke-width="1.200"/><rect x="1" y="8" width="7.500" height="7.500" fill="none" stroke="#e4e6ea" stroke-width="1.200"/></svg>
<div class="t" style="left:326.5px;top:109.0px;font-size:12px;line-height:16px;color:#e9ebee;letter-spacing:-0.70px;">Scale</div>
<svg class="i" style="left:374px;top:60px" width="17" height="18" viewBox="0 0 17 18" ><path d="M1 1.500H14" stroke="#e4e6ea" stroke-width="1.200" stroke-dasharray="2 1.500"/><path d="M5 2L11 14M12 2L6 14" stroke="#e4e6ea" stroke-width="1.600"/><circle cx="5.500" cy="15" r="2" fill="none" stroke="#e4e6ea" stroke-width="1.200"/><circle cx="11.500" cy="15" r="2" fill="none" stroke="#e4e6ea" stroke-width="1.200"/></svg>
<div class="t" style="left:395.4px;top:61.0px;font-size:12px;line-height:16px;color:#e9ebee;letter-spacing:-0.41px;">Trim</div>
<svg class="i" style="left:428.5px;top:67.25px" width="6" height="3.5" viewBox="0 0 6 3.5" ><path d="M0 0H6L3.0 3.5Z" fill="#d5d8dd"/></svg>
<svg class="i" style="left:373px;top:84px" width="18" height="18" viewBox="0 0 18 18" ><path d="M1.500 17V10Q1.500 1.500 10 1.500" fill="none" stroke="#e4e6ea" stroke-width="1.300"/><path d="M11 1.500H17" stroke="#e4e6ea" stroke-width="1.300" stroke-dasharray="3 1.500"/></svg>
<div class="t" style="left:395.4px;top:84.6px;font-size:12px;line-height:16px;color:#e9ebee;letter-spacing:-0.12px;">Fillet</div>
<svg class="i" style="left:430.0px;top:90.85px" width="6" height="3.5" viewBox="0 0 6 3.5" ><path d="M0 0H6L3.0 3.5Z" fill="#d5d8dd"/></svg>
<svg class="i" style="left:374px;top:110px" width="16" height="15" viewBox="0 0 16 15" ><rect x="0.700" y="0.700" width="5.600" height="5" fill="none" stroke="#74b6ec" stroke-width="1.300"/><rect x="9" y="0.700" width="5.600" height="5" fill="none" stroke="#74b6ec" stroke-width="1.300"/><rect x="0.700" y="8.700" width="5.600" height="5" fill="none" stroke="#74b6ec" stroke-width="1.300"/><rect x="9" y="8.700" width="5.600" height="5" fill="none" stroke="#74b6ec" stroke-width="1.300"/></svg>
<div class="t" style="left:395.4px;top:109.0px;font-size:12px;line-height:16px;color:#e9ebee;letter-spacing:-0.31px;">Array</div>
<svg class="i" style="left:430.0px;top:115.25px" width="6" height="3.5" viewBox="0 0 6 3.5" ><path d="M0 0H6L3.0 3.5Z" fill="#d5d8dd"/></svg>
<svg class="i" style="left:449px;top:60px" width="18" height="18" viewBox="0 0 18 18" ><path d="M3 12L12 2 16 6 7 15Z" fill="#e9c15a"/><path d="M12 2L14 0.500 17.500 4 16 6Z" fill="#f0f0f0"/><circle cx="4.500" cy="13.500" r="2.200" fill="#e34a5c"/><path d="M0 17H17" stroke="#e4e6ea" stroke-width="1"/></svg>
<svg class="i" style="left:449px;top:85px" width="18" height="16" viewBox="0 0 18 16" ><rect x="1" y="5" width="11" height="10" fill="none" stroke="#e4e6ea" stroke-width="1.200"/><path d="M1 5L6 1H17L12 5M17 1V11L12 15" fill="none" stroke="#e4e6ea" stroke-width="1.200"/><rect x="4" y="8" width="5" height="7" fill="none" stroke="#74b6ec" stroke-width="1"/></svg>
<svg class="i" style="left:449px;top:110px" width="18" height="14" viewBox="0 0 18 14" ><path d="M17 1H7Q1 1 1 7Q1 13 7 13H17" fill="none" stroke="#e4e6ea" stroke-width="1.300"/><path d="M17 4.500H8Q5 4.500 5 7Q5 9.500 8 9.500H17" fill="none" stroke="#74b6ec" stroke-width="1.300"/></svg>
<div class="t" style="left:325.0px;top:133.0px;font-size:12px;line-height:16px;color:#e9ebee;letter-spacing:0.44px;">Modify</div>
<svg class="i" style="left:369.0px;top:139.25px" width="8" height="4.5" viewBox="0 0 8 4.5" ><path d="M0 0H8L4.0 4.5Z" fill="#d5d8dd"/></svg>
<div class="t" style="left:486px;top:52px;font-size:40px;line-height:48px;color:#dfe1e5;-webkit-text-stroke:0.5px #dfe1e5;">A</div>
<div class="t" style="left:490.0px;top:95.0px;font-size:12px;line-height:16px;color:#e9ebee;letter-spacing:-0.60px;">Text</div>
<svg class="i" style="left:497.0px;top:112.25px" width="6" height="3.5" viewBox="0 0 6 3.5" ><path d="M0 0H6L3.0 3.5Z" fill="#d5d8dd"/></svg>
<svg class="i" style="left:535px;top:59px" width="34" height="34" viewBox="0 0 34 34" ><path d="M2 1V33M32 1V33M3 8H31" stroke="#e4e6ea" stroke-width="1.200"/><path d="M2 8L6 6V10ZM32 8L28 6V10Z" fill="#e4e6ea"/><path d="M17 18V23M10 21L13 25M24 21L21 25M6 28L11 28M28 28L23 28" stroke="#f0d24a" stroke-width="2.200"/></svg>
<div class="t" style="left:524.6px;top:95.0px;font-size:12px;line-height:16px;color:#e9ebee;letter-spacing:-0.03px;">Dimension</div>
<svg class="i" style="left:588px;top:61px" width="18" height="16" viewBox="0 0 18 16" ><path d="M1.500 1V15M16.500 1V15" stroke="#e4e6ea" stroke-width="1.300"/><path d="M2 7H16" stroke="#6cc4f0" stroke-width="1.300"/></svg>
<div class="t" style="left:610.6px;top:61.0px;font-size:12px;line-height:16px;color:#e9ebee;letter-spacing:-0.33px;">Linear</div>
<svg class="i" style="left:649.7px;top:67.25px" width="6" height="3.5" viewBox="0 0 6 3.5" ><path d="M0 0H6L3.0 3.5Z" fill="#d5d8dd"/></svg>
<svg class="i" style="left:588px;top:85px" width="18" height="16" viewBox="0 0 18 16" ><circle cx="13.500" cy="4" r="3" fill="none" stroke="#e4e6ea" stroke-width="1.300"/><path d="M10.500 5Q5 6 3 13" fill="none" stroke="#e4e6ea" stroke-width="1.300"/><path d="M1 9L3 15 7 11Z" fill="#e4e6ea"/></svg>
<div class="t" style="left:610.6px;top:84.6px;font-size:12px;line-height:16px;color:#e9ebee;letter-spacing:-0.49px;">Leader</div>
<svg class="i" style="left:653.0px;top:90.85px" width="6" height="3.5" viewBox="0 0 6 3.5" ><path d="M0 0H6L3.0 3.5Z" fill="#d5d8dd"/></svg>
<svg class="i" style="left:588px;top:110px" width="18" height="14" viewBox="0 0 18 14" ><rect x="1" y="1" width="15.500" height="12" fill="none" stroke="#e4e6ea" stroke-width="1.300"/><path d="M1 5H16.500M1 9H16.500M6 5V13M11.500 5V13" stroke="#e4e6ea" stroke-width="1.100"/></svg>
<div class="t" style="left:610.6px;top:109.0px;font-size:12px;line-height:16px;color:#e9ebee;letter-spacing:-0.46px;">Table</div>
<div class="t" style="left:533.5px;top:133.0px;font-size:12px;line-height:16px;color:#e9ebee;letter-spacing:0.14px;">Annotation</div>
<svg class="i" style="left:598.7px;top:139.25px" width="8" height="4.5" viewBox="0 0 8 4.5" ><path d="M0 0H8L4.0 4.5Z" fill="#d5d8dd"/></svg>
<svg class="i" style="left:679px;top:59px" width="35" height="34" viewBox="0 0 35 34" ><path d="M1 8L9 1H28L20 8Z" fill="#d9dadc"/><path d="M1 15L9 8H28L20 15Z" fill="#c3c5c8"/><path d="M1 22L9 15H28L20 22Z" fill="#d9dadc"/><rect x="20" y="12" width="13" height="20" rx="1" fill="#f2f2f2"/><rect x="22" y="14" width="9" height="7" fill="#4da3e6"/><path d="M22 25H30M23 28H31" stroke="#666" stroke-width="1"/></svg>
<div class="t" style="left:683.0px;top:95.0px;font-size:12px;line-height:16px;color:#e9ebee;letter-spacing:-0.40px;">Layer</div>
<div class="t" style="left:670.4px;top:109.6px;font-size:12px;line-height:16px;color:#e9ebee;letter-spacing:-0.21px;">Properties</div>
<div class="r" style="left:727px;top:59px;width:208px;height:20px;background:#465062;border:1px solid #2b323e;box-sizing:border-box;"></div>
<svg class="i" style="left:732px;top:61px" width="14" height="16" viewBox="0 0 14 16" ><circle cx="7" cy="6" r="5.500" fill="#f4c45a"/><rect x="4.500" y="11" width="5" height="4" fill="#f0f0f0"/></svg>
<svg class="i" style="left:750px;top:61px" width="15" height="16" viewBox="0 0 15 16" ><circle cx="7.500" cy="8" r="4" fill="#f4b63a"/><path d="M7.500 0V16M0 8H15M2 2.500L13 13.500M13 2.500L2 13.500" stroke="#f4b63a" stroke-width="1.200"/><circle cx="7.500" cy="8" r="4" fill="#f4b63a"/></svg>
<svg class="i" style="left:769px;top:61px" width="15" height="16" viewBox="0 0 15 16" ><rect x="1" y="1" width="12" height="12" fill="none" stroke="#e4e6ea" stroke-width="1.200" stroke-dasharray="4 2"/><rect x="4" y="4" width="6" height="6" fill="#8a919c"/><circle cx="11" cy="12" r="3" fill="#f4b63a"/></svg>
<svg class="i" style="left:788px;top:60px" width="15" height="17" viewBox="0 0 15 17" ><rect x="1" y="8" width="10" height="8" fill="#f4b63a"/><path d="M8 8V4.500Q8 1.500 11 1.500Q14 1.500 14 4.500V6" fill="none" stroke="#f4b63a" stroke-width="1.600"/></svg>
<div class="r" style="left:809.5px;top:62px;width:13.5px;height:14px;background:#262626;border:1px solid #f0f0f0;box-sizing:border-box;"></div>
<div class="t" style="left:828.0px;top:61.5px;font-size:12px;line-height:16px;color:#e9ebee;letter-spacing:0.03px;">hatch</div>
<svg class="i" style="left:924.5px;top:67.0px" width="7" height="4" viewBox="0 0 7 4" ><path d="M0 0H7L3.5 4Z" fill="#d5d8dd"/></svg>
<svg class="i" style="left:730px;top:84px" width="18" height="17" viewBox="0 0 18 17" ><path d="M0 6L5 1H14L9 6Z" fill="#d0d2d6"/><circle cx="13" cy="10" r="3.500" fill="#6fd0d8"/><rect x="11.500" y="13.500" width="3" height="2.500" fill="#eee"/></svg>
<svg class="i" style="left:754px;top:84px" width="18" height="17" viewBox="0 0 18 17" ><path d="M0 4L4 0H13L9 4Z" fill="#d4d6da"/><path d="M0 7.4L4 3.4H13L9 7.4Z" fill="#bfc2c7"/><path d="M0 10.8L4 6.8H13L9 10.8Z" fill="#d4d6da"/><path d="M15 7L9 14" stroke="#e4e6ea" stroke-width="1.300"/><path d="M8 15L9 10.500 12.500 14Z" fill="#e4e6ea"/></svg>
<svg class="i" style="left:778px;top:84px" width="18" height="17" viewBox="0 0 18 17" ><path d="M0 6L5 1H14L9 6Z" fill="#d0d2d6"/><circle cx="12.500" cy="11.500" r="4" fill="none" stroke="#4fc4c9" stroke-width="1.200"/><path d="M12.500 7V16M8.500 11.500H16.500M9.500 8.500L15.500 14.500M15.500 8.500L9.500 14.500" stroke="#4fc4c9" stroke-width="1"/></svg>
<svg class="i" style="left:803px;top:84px" width="18" height="17" viewBox="0 0 18 17" ><path d="M0 6L5 1H14L9 6Z" fill="#d0d2d6"/><rect x="9" y="9" width="8" height="6.500" fill="#43c0b4"/><path d="M10.500 9V7Q10.500 4.500 13 4.500Q15.500 4.500 15.500 7V9" fill="none" stroke="#43c0b4" stroke-width="1.300"/></svg>
<svg class="i" style="left:826px;top:83px" width="18" height="18" viewBox="0 0 18 18" ><circle cx="10" cy="4" r="3.200" fill="#cfd2d6"/><path d="M4 9Q10 4 16 9L16 10 4 10Z" fill="#cfd2d6"/><path d="M0 12L5 8H18L13 12Z" fill="#4da3e6"/><path d="M0 15L5 11.500H18L13 15Z" fill="#d0d2d6"/><path d="M0 18L5 14.500H18L13 18Z" fill="#b9bcc0"/></svg>
<svg class="i" style="left:730px;top:108px" width="18" height="17" viewBox="0 0 18 17" ><path d="M0 4L4 0H13L9 4Z" fill="#d4d6da"/><path d="M0 7.4L4 3.4H13L9 7.4Z" fill="#bfc2c7"/><path d="M0 10.8L4 6.8H13L9 10.8Z" fill="#d4d6da"/><circle cx="13" cy="10" r="3.500" fill="#f4c45a"/><rect x="11.500" y="13.500" width="3" height="2.500" fill="#eee"/></svg>
<svg class="i" style="left:754px;top:108px" width="18" height="17" viewBox="0 0 18 17" ><path d="M0 4L4 0H13L9 4Z" fill="#d4d6da"/><path d="M0 7.4L4 3.4H13L9 7.4Z" fill="#bfc2c7"/><path d="M0 10.8L4 6.8H13L9 10.8Z" fill="#d4d6da"/><path d="M9 15L15 8" stroke="#e4e6ea" stroke-width="1.300"/><path d="M16 7L15 11.500 11.500 8Z" fill="#e4e6ea"/></svg>
<svg class="i" style="left:778px;top:108px" width="18" height="17" viewBox="0 0 18 17" ><path d="M0 4L4 0H13L9 4Z" fill="#d4d6da"/><path d="M0 7.4L4 3.4H13L9 7.4Z" fill="#bfc2c7"/><path d="M0 10.8L4 6.8H13L9 10.8Z" fill="#d4d6da"/><circle cx="12.500" cy="11.500" r="2.800" fill="#f4b63a"/><path d="M12.500 6.500V16.500M7.500 11.500H17.500M9 8L16 15M16 8L9 15" stroke="#f4b63a" stroke-width="1"/></svg>
<svg class="i" style="left:803px;top:108px" width="18" height="17" viewBox="0 0 18 17" ><path d="M0 6L5 1H14L9 6Z" fill="#d0d2d6"/><rect x="8" y="10" width="8" height="6" fill="#f4b63a"/><path d="M12.500 10V8Q12.500 5.500 15 5.500Q17.500 5.500 17.500 8" fill="none" stroke="#f4b63a" stroke-width="1.300"/></svg>
<svg class="i" style="left:826px;top:108px" width="18" height="18" viewBox="0 0 18 18" ><path d="M0 5L5 1H16L11 5Z" fill="#d0d2d6"/><path d="M0 9L5 5H16L11 9Z" fill="#b9bcc0"/><path d="M0 13L5 9H16L11 13Z" fill="#d0d2d6"/><path d="M9 11L13 7 17 11 13 16Z" fill="#e9b23c"/><path d="M12 6L14 4 18 8 16 10Z" fill="#f2f2f2"/></svg>
<div class="t" style="left:848.5px;top:84.6px;font-size:12px;line-height:16px;color:#e9ebee;letter-spacing:-0.10px;">Make Current</div>
<div class="t" style="left:848.5px;top:109.0px;font-size:12px;line-height:16px;color:#e9ebee;letter-spacing:-0.11px;">Match Layer</div>
<div class="t" style="left:778.0px;top:133.0px;font-size:12px;line-height:16px;color:#e9ebee;letter-spacing:-0.50px;">Layers</div>
<svg class="i" style="left:817.5px;top:139.25px" width="8" height="4.5" viewBox="0 0 8 4.5" ><path d="M0 0H8L4.0 4.5Z" fill="#d5d8dd"/></svg>
<svg class="i" style="left:943px;top:57px" width="34" height="35" viewBox="0 0 34 35" ><path d="M14 1H26L32 7V27H14Z" fill="#8cc6f2"/><path d="M26 1V7H32Z" fill="#d5ebfb"/><rect x="1.500" y="12" width="20" height="13" fill="#737a86" stroke="#d9dadc" stroke-width="1.300"/><rect x="0" y="23" width="3.500" height="3.500" fill="#d9dadc"/><circle cx="21" cy="25" r="7.500" fill="#8a919c" fill-opacity="0.850" stroke="#d9dadc" stroke-width="1.300"/></svg>
<div class="t" style="left:945.4px;top:94.0px;font-size:12px;line-height:16px;color:#e9ebee;letter-spacing:-0.29px;">Insert</div>
<svg class="i" style="left:956.0px;top:111.75px" width="6" height="3.5" viewBox="0 0 6 3.5" ><path d="M0 0H6L3.0 3.5Z" fill="#d5d8dd"/></svg>
<svg class="i" style="left:983px;top:60px" width="18" height="17" viewBox="0 0 18 17" ><rect x="2" y="6" width="9" height="7" fill="#737a86" stroke="#e4e6ea" stroke-width="1.200"/><rect x="0" y="11" width="3" height="3" fill="#e4e6ea"/><circle cx="11" cy="12" r="3.500" fill="#8a919c" stroke="#e4e6ea" stroke-width="1.100"/><path d="M13 0L14 3 17 2 15 4.500 17.500 6.500 14.500 6.500 14 9.500 12.500 7 9.500 8 11.500 5.500 9.500 3 12 3.500Z" fill="#f4c13a"/></svg>
<div class="t" style="left:1004.8px;top:61.0px;font-size:12px;line-height:16px;color:#e9ebee;letter-spacing:-0.47px;">Create</div>
<svg class="i" style="left:983px;top:84px" width="18" height="17" viewBox="0 0 18 17" ><rect x="2" y="6" width="9" height="7" fill="#737a86" stroke="#e4e6ea" stroke-width="1.200"/><rect x="0" y="11" width="3" height="3" fill="#e4e6ea"/><circle cx="11" cy="12" r="3.500" fill="#8a919c" stroke="#e4e6ea" stroke-width="1.100"/><path d="M9 8L15 1 17.500 3.500 11.500 10 9 10.500Z" fill="#e9c15a"/><path d="M15 1L16 0 18 2.500 17.500 3.500Z" fill="#e34a5c"/></svg>
<div class="t" style="left:1004.8px;top:84.6px;font-size:12px;line-height:16px;color:#e9ebee;letter-spacing:-0.44px;">Edit</div>
<svg class="i" style="left:983px;top:108px" width="18" height="18" viewBox="0 0 18 18" ><path d="M1 2H10L16 8 8 16 1 9Z" fill="#e4e6ea"/><circle cx="4.500" cy="5.500" r="1.500" fill="#3b4453"/><path d="M8 9L15 1 17.500 3.500 10.500 11 8 11.500Z" fill="#e9c15a"/><path d="M15 1L16 0 18 2.500 17.500 3.500Z" fill="#e34a5c"/></svg>
<div class="t" style="left:1004.8px;top:109.0px;font-size:12px;line-height:16px;color:#e9ebee;letter-spacing:-0.01px;">Edit Attributes</div>
<svg class="i" style="left:1086.0px;top:115.25px" width="6" height="3.5" viewBox="0 0 6 3.5" ><path d="M0 0H6L3.0 3.5Z" fill="#d5d8dd"/></svg>
<div class="t" style="left:997.5px;top:133.0px;font-size:12px;line-height:16px;color:#e9ebee;letter-spacing:-0.21px;">Block</div>
<svg class="i" style="left:1032.0px;top:139.25px" width="8" height="4.5" viewBox="0 0 8 4.5" ><path d="M0 0H8L4.0 4.5Z" fill="#d5d8dd"/></svg>
<svg class="i" style="left:1116px;top:59px" width="32" height="34" viewBox="0 0 32 34" ><rect x="0" y="0" width="20" height="28" rx="1" fill="#dcdde0"/><rect x="2.500" y="2.500" width="13" height="10" fill="#6cb8ee"/><path d="M3 18H15M3 23H12" stroke="#666" stroke-width="1.200"/><path d="M7 16V20M11 21V25" stroke="#666" stroke-width="1.200"/><path d="M14 24L21 17 27 23 20 30Z" fill="#e9b23c"/><path d="M21 17L25 13 31 19 27 23Z" fill="#f4f4f4"/></svg>
<div class="t" style="left:1114.4px;top:95.0px;font-size:12px;line-height:16px;color:#e9ebee;letter-spacing:0.12px;">Match</div>
<div class="t" style="left:1104.0px;top:109.6px;font-size:12px;line-height:16px;color:#e9ebee;letter-spacing:-0.17px;">Properties</div>
<svg class="i" style="left:1162px;top:60px" width="18" height="18" viewBox="0 0 18 18" ><circle cx="9" cy="9" r="8.500" fill="#e84a4a"/><path d="M9 9L9 0.500A8.500 8.500 0 0 1 16.400 4.800Z" fill="#f4a23a"/><path d="M9 9L16.400 4.800A8.500 8.500 0 0 1 16.400 13.200Z" fill="#f0d84a"/><path d="M9 9L16.400 13.200A8.500 8.500 0 0 1 9 17.500Z" fill="#5cc45a"/><path d="M9 9L9 17.500A8.500 8.500 0 0 1 1.600 13.200Z" fill="#3fa0e3"/><path d="M9 9L1.600 13.200A8.500 8.500 0 0 1 1.600 4.800Z" fill="#8a5ad0"/></svg>
<svg class="i" style="left:1163px;top:85px" width="17" height="16" viewBox="0 0 17 16" ><rect x="0" y="0" width="16" height="3" fill="#e4e6ea"/><rect x="0" y="5.500" width="16" height="4" fill="#e4e6ea"/><rect x="0" y="12" width="16" height="4" fill="#e4e6ea"/></svg>
<svg class="i" style="left:1163px;top:109px" width="17" height="16" viewBox="0 0 17 16" ><path d="M0 1H16M0 5H16M0 9H16M0 13H16" stroke="#e4e6ea" stroke-width="1.500" stroke-dasharray="3 1"/></svg>
<div class="r" style="left:1182px;top:59px;width:178px;height:20px;background:#465062;border:1px solid #2b323e;box-sizing:border-box;"></div>
<svg class="i" style="left:1351.0px;top:67.0px" width="7" height="4" viewBox="0 0 7 4" ><path d="M0 0H7L3.5 4Z" fill="#d5d8dd"/></svg>
<div class="r" style="left:1182px;top:83px;width:178px;height:20px;background:#465062;border:1px solid #2b323e;box-sizing:border-box;"></div>
<svg class="i" style="left:1351.0px;top:91.0px" width="7" height="4" viewBox="0 0 7 4" ><path d="M0 0H7L3.5 4Z" fill="#d5d8dd"/></svg>
<div class="r" style="left:1182px;top:107px;width:178px;height:20px;background:#465062;border:1px solid #2b323e;box-sizing:border-box;"></div>
<svg class="i" style="left:1351.0px;top:115.0px" width="7" height="4" viewBox="0 0 7 4" ><path d="M0 0H7L3.5 4Z" fill="#d5d8dd"/></svg>
<div class="r" style="left:1188px;top:61px;width:16px;height:16px;background:#ff0000;border:1px solid #f0f0f0;box-sizing:border-box;"></div>
<div class="t" style="left:1208.0px;top:61.0px;font-size:12px;line-height:16px;color:#e9ebee;letter-spacing:-0.84px;">Red</div>
<div class="r" style="left:1188px;top:92.1px;width:64px;height:1px;background:#f0f0f0;"></div>
<div class="t" style="left:1254.6px;top:84.6px;font-size:12px;line-height:16px;color:#e9ebee;letter-spacing:-0.52px;">ByLayer</div>
<div class="r" style="left:1188px;top:116.5px;width:64px;height:1px;background:#f0f0f0;"></div>
<div class="t" style="left:1254.6px;top:109.0px;font-size:12px;line-height:16px;color:#e9ebee;letter-spacing:-0.52px;">ByLayer</div>
<div class="t" style="left:1192.0px;top:133.0px;font-size:12px;line-height:16px;color:#e9ebee;letter-spacing:-0.17px;">Properties</div>
<svg class="i" style="left:1251.0px;top:139.25px" width="8" height="4.5" viewBox="0 0 8 4.5" ><path d="M0 0H8L4.0 4.5Z" fill="#d5d8dd"/></svg>
<svg class="i" style="left:1352px;top:139px" width="6" height="6" viewBox="0 0 6 6" ><path d="M0 0L5 5M5 1.500V5H1.500" fill="none" stroke="#e4e6ea" stroke-width="1"/></svg>
<svg class="i" style="left:1369px;top:60px" width="31" height="32" viewBox="0 0 31 32" ><path d="M5 7H1V31H5M18 31H22V18" fill="none" stroke="#e4e6ea" stroke-width="1.300"/><rect x="6" y="9" width="10" height="8" fill="#3b6ea8" stroke="#6cb8ee" stroke-width="1"/><circle cx="11" cy="24" r="4.500" fill="#8a919c" stroke="#e4e6ea" stroke-width="1"/><path d="M23 0L24.500 5 29 3 26.500 7.500 31 9.500 26 10.500 26.500 15.500 23 12 19.500 15.500 20 10.500 15 9.500 19.500 7.500 17 3 21.500 5Z" fill="#f4c13a"/></svg>
<div class="t" style="left:1369.6px;top:95.0px;font-size:12px;line-height:16px;color:#e9ebee;letter-spacing:-0.19px;">Group</div>
<svg class="i" style="left:1411px;top:61px" width="17" height="16" viewBox="0 0 17 16" ><path d="M4 1H1V15H4M10 15H13V1H10" fill="none" stroke="#e4e6ea" stroke-width="1.200"/><rect x="4" y="3" width="5" height="4" fill="none" stroke="#e4e6ea" stroke-width="1"/><circle cx="6.500" cy="11" r="2.300" fill="#8a919c" stroke="#e4e6ea" stroke-width="0.800"/><path d="M10 5L16 11M16 5L10 11" stroke="#e34a5c" stroke-width="1.800"/></svg>
<svg class="i" style="left:1410px;top:84px" width="18" height="17" viewBox="0 0 18 17" ><path d="M4 1H1V15H4M10 15H13V1H10" fill="none" stroke="#e4e6ea" stroke-width="1.200"/><rect x="4" y="3" width="5" height="4" fill="none" stroke="#e4e6ea" stroke-width="1"/><circle cx="6.500" cy="11" r="2.300" fill="#8a919c" stroke="#e4e6ea" stroke-width="0.800"/><path d="M8 12L14 5 17 8 11 15 8 15.500Z" fill="#e9c15a"/><path d="M14 5L15 4 18 7 17 8Z" fill="#e34a5c"/></svg>
<div class="r" style="left:1406px;top:106.5px;width:24px;height:21px;background:#2a4a6e;border:1px solid #5a9bd5;box-sizing:border-box;"></div>
<svg class="i" style="left:1410px;top:109px" width="18" height="17" viewBox="0 0 18 17" ><path d="M4 1H1V15H4M10 1H13V6" fill="none" stroke="#e4e6ea" stroke-width="1.200"/><rect x="4" y="3" width="5" height="4" fill="#4a9a5a" stroke="#7ad08a" stroke-width="1"/><circle cx="6.500" cy="11" r="2.300" fill="#4a9a5a" stroke="#7ad08a" stroke-width="0.800"/><path d="M10 5V16L12.500 13.500 14.500 17 16 16 14 12.500 17 12Z" fill="#fff"/></svg>
<div class="t" style="left:1372.0px;top:133.0px;font-size:12px;line-height:16px;color:#e9ebee;letter-spacing:-0.26px;">Groups</div>
<svg class="i" style="left:1415.8px;top:139.25px" width="8" height="4.5" viewBox="0 0 8 4.5" ><path d="M0 0H8L4.0 4.5Z" fill="#d5d8dd"/></svg>
<svg class="i" style="left:1454px;top:72px" width="30" height="8" viewBox="0 0 30 8" ><rect width="30" height="7.500" fill="#edbc3c"/><path d="M3 0V3M6 0V4M9 0V3M12 0V4M15 0V3M18 0V4M21 0V3M24 0V4M27 0V3" stroke="#a97d1a" stroke-width="1"/></svg>
<div class="t" style="left:1446.7px;top:95.0px;font-size:12px;line-height:16px;color:#e9ebee;letter-spacing:-0.34px;">Measure</div>
<svg class="i" style="left:1465.5px;top:112.25px" width="6" height="3.5" viewBox="0 0 6 3.5" ><path d="M0 0H6L3.0 3.5Z" fill="#d5d8dd"/></svg>
<svg class="i" style="left:1506px;top:60px" width="18" height="18" viewBox="0 0 18 18" ><path d="M1 4V15L3.500 12.500 5.500 16.500 7 15.500 5 12 8 11.500Z" fill="#fff"/><rect x="8" y="8" width="9" height="8" fill="#d9dadc"/><path d="M10 10.500H15.500M10 13.500H15.500" stroke="#3b6ea8" stroke-width="1.200"/><path d="M6 0L11 2 8 4 10 7 6 5Z" fill="#f4c13a"/></svg>
<svg class="i" style="left:1506px;top:84px" width="18" height="18" viewBox="0 0 18 18" ><rect x="1" y="1" width="13" height="13" fill="#3f7a52" stroke="#8fd49a" stroke-width="1" stroke-dasharray="3 1.500"/><rect x="4" y="4" width="7" height="7" fill="#6cc07a"/><path d="M9 6V17L11.500 14.500 13.500 18 15 17 13 13.500 16 13Z" fill="#fff"/></svg>
<svg class="i" style="left:1508px;top:109px" width="14" height="16" viewBox="0 0 14 16" ><rect x="0.500" y="0.500" width="12" height="15" fill="#d9dadc"/><rect x="2" y="2" width="9" height="3" fill="#3b4453"/><path d="M2 8H11M2 11H11M2 14H11M5 6V16M8 6V16" stroke="#3b4453" stroke-width="1"/></svg>
<div class="t" style="left:1454.0px;top:133.0px;font-size:12px;line-height:16px;color:#e9ebee;letter-spacing:0.00px;">Utilities</div>
<svg class="i" style="left:1499.0px;top:139.25px" width="8" height="4.5" viewBox="0 0 8 4.5" ><path d="M0 0H8L4.0 4.5Z" fill="#d5d8dd"/></svg>
<svg class="i" style="left:1543px;top:59px" width="29" height="34" viewBox="0 0 29 34" ><rect x="0" y="3" width="22" height="26" rx="1.500" fill="#e3a66a"/><rect x="7" y="0" width="8" height="6" rx="1" fill="#d9dadc"/><path d="M10 10H22L28 16V33H10Z" fill="#f0f0f0"/><path d="M22 10V16H28Z" fill="#c5c7cb"/></svg>
<div class="t" style="left:1543.0px;top:95.0px;font-size:12px;line-height:16px;color:#e9ebee;letter-spacing:-0.54px;">Paste</div>
<svg class="i" style="left:1554.0px;top:112.25px" width="6" height="3.5" viewBox="0 0 6 3.5" ><path d="M0 0H6L3.0 3.5Z" fill="#d5d8dd"/></svg>
<svg class="i" style="left:1587px;top:61px" width="17" height="17" viewBox="0 0 17 17" ><path d="M0 1H10M0 4.500H10M0 8H7" stroke="#e4e6ea" stroke-width="1.600"/><path d="M8 4L14 13M15 4L9 13" stroke="#e4e6ea" stroke-width="1.300"/><circle cx="8.500" cy="14.500" r="1.800" fill="none" stroke="#e4e6ea" stroke-width="1"/><circle cx="14.500" cy="14.500" r="1.800" fill="none" stroke="#e4e6ea" stroke-width="1"/></svg>
<svg class="i" style="left:1587px;top:85px" width="16" height="17" viewBox="0 0 16 17" ><path d="M0 0H7L10 3V12H0Z" fill="#b9bcc0"/><path d="M5 4H12L15 7V17H5Z" fill="#e8e8e8"/></svg>
<svg class="i" style="left:1607.0px;top:67.25px" width="6" height="3.5" viewBox="0 0 6 3.5" ><path d="M0 0H6L3.0 3.5Z" fill="#d5d8dd"/></svg>
<svg class="i" style="left:1607.0px;top:90.85px" width="6" height="3.5" viewBox="0 0 6 3.5" ><path d="M0 0H6L3.0 3.5Z" fill="#d5d8dd"/></svg>
<div class="t" style="left:1549.0px;top:133.0px;font-size:12px;line-height:16px;color:#e9ebee;letter-spacing:0.04px;">Clipboard</div>
<svg class="i" style="left:1636px;top:64px" width="33" height="24" viewBox="0 0 33 24" ><path d="M0 0H14V12H32V24H0Z" fill="#e6e7e9"/></svg>
<div class="t" style="left:1640.7px;top:95.0px;font-size:12px;line-height:16px;color:#e9ebee;letter-spacing:-1.01px;">Base</div>
<svg class="i" style="left:1649.0px;top:112.25px" width="6" height="3.5" viewBox="0 0 6 3.5" ><path d="M0 0H6L3.0 3.5Z" fill="#d5d8dd"/></svg>
<div class="t" style="left:1626.0px;top:133.0px;font-size:12px;line-height:16px;color:#e9ebee;letter-spacing:-0.27px;">View</div>
<svg class="i" style="left:1656.7px;top:139.25px" width="8" height="4.5" viewBox="0 0 8 4.5" ><path d="M0 0H8L4.0 4.5Z" fill="#d5d8dd"/></svg>
<svg class="i" style="left:1671px;top:139px" width="6" height="6" viewBox="0 0 6 6" ><path d="M0 0L5 5M5 1.500V5H1.500" fill="none" stroke="#e4e6ea" stroke-width="1"/></svg><svg class="i" style="left:15px;top:159.5px" width="18" height="12" viewBox="0 0 18 12" ><path d="M0 1H17M0 6H17M0 11H17" stroke="#e4e6ea" stroke-width="1.600"/></svg>
<svg class="i" style="left:41px;top:156px" width="8" height="18" viewBox="0 0 8 18" ><path d="M7 0L1 18" stroke="#4a5260" stroke-width="1"/></svg>
<div class="t" style="left:58.0px;top:157.7px;font-size:12px;line-height:16px;color:#e9ebee;letter-spacing:-0.33px;">Start</div>
<svg class="i" style="left:91px;top:156px" width="8" height="18" viewBox="0 0 8 18" ><path d="M7 0L1 18" stroke="#4a5260" stroke-width="1"/></svg>
<div class="t" style="left:106.0px;top:157.7px;font-size:12px;line-height:16px;color:#e9ebee;letter-spacing:-0.14px;">Şarkı Söyleyen İnsan (PislikMimar.com)*</div>
<svg class="i" style="left:336px;top:156px" width="8" height="18" viewBox="0 0 8 18" ><path d="M7 0L1 18" stroke="#4a5260" stroke-width="1"/></svg>
<div class="t" style="left:353.0px;top:157.7px;font-size:12px;line-height:16px;color:#e9ebee;letter-spacing:0.01px;">Oyun Oynayan Çocuklar (PislikMimar.com)*</div>
<svg class="i" style="left:600px;top:152px" width="232" height="26" viewBox="0 0 232 26" ><path d="M12 26L22 1.500Q22.500 0.500 24 0.500H222L212 26Z" fill="#323a48"/></svg>
<div class="t" style="left:623.0px;top:157.7px;font-size:12px;line-height:16px;color:#ffffff;letter-spacing:-0.26px;font-weight:bold;">Soyut İnsan (PislikMimar.com)*</div>
<svg class="i" style="left:801px;top:160.5px" width="10" height="10" viewBox="0 0 10 10" ><path d="M1 1L9 9M9 1L1 9" stroke="#9aa0aa" stroke-width="2"/></svg>
<svg class="i" style="left:830px;top:158px" width="16" height="16" viewBox="0 0 16 16" ><path d="M8 1V15M1 8H15" stroke="#e4e6ea" stroke-width="2"/></svg>
<svg class="i" style="left:855px;top:156px" width="8" height="18" viewBox="0 0 8 18" ><path d="M7 0L1 18" stroke="#4a5260" stroke-width="1"/></svg>
<div class="r" style="left:0px;top:1007px;width:1920px;height:33px;background:#222933;"></div>
<div class="r" style="left:0px;top:1007px;width:1920px;height:2px;background:#39414f;"></div>
<svg class="i" style="left:15px;top:1018px" width="18" height="12" viewBox="0 0 18 12" ><path d="M0 1H17M0 6H17M0 11H17" stroke="#e4e6ea" stroke-width="1.600"/></svg>
<svg class="i" style="left:41px;top:1014px" width="8" height="18" viewBox="0 0 8 18" ><path d="M7 0L1 18" stroke="#4a5260" stroke-width="1"/></svg>
<div class="t" style="left:58.0px;top:1015.5px;font-size:12px;line-height:16px;color:#e9ebee;letter-spacing:0.20px;">Model</div>
<svg class="i" style="left:96px;top:1009px" width="84" height="31" viewBox="0 0 84 31" ><path d="M3 31L13 1.500Q13.500 0.500 15 0.500H82L72 31Z" fill="#323a48"/></svg>
<div class="t" style="left:116.0px;top:1015.5px;font-size:12px;line-height:16px;color:#ffffff;letter-spacing:-0.43px;font-weight:bold;">Layout1</div>
<svg class="i" style="left:185px;top:1015.5px" width="16" height="16" viewBox="0 0 16 16" ><path d="M8 1V15M1 8H15" stroke="#e4e6ea" stroke-width="2"/></svg>
<svg class="i" style="left:210px;top:1014px" width="8" height="18" viewBox="0 0 8 18" ><path d="M7 0L1 18" stroke="#4a5260" stroke-width="1"/></svg>
<div class="r" style="left:1456px;top:1012px;width:462px;height:25px;background:#2a313d;border-radius:2px;"></div>
<div class="r" style="left:1458px;top:1013px;width:40px;height:23px;background:#353d4b;"></div>
<div class="t" style="left:1461.0px;top:1016.5px;font-size:12px;line-height:16px;color:#e9ebee;letter-spacing:-1.16px;">PAPER</div>
<div class="r" style="left:1502px;top:1013px;width:22px;height:23px;background:#4a7fc0;"></div>
<svg class="i" style="left:1505px;top:1016px" width="16" height="17" viewBox="0 0 16 17" ><path d="M2 0V15H16M2 8H8V15" fill="none" stroke="#fff" stroke-width="1.400"/></svg>
<svg class="i" style="left:1528px;top:1016px" width="18" height="17" viewBox="0 0 18 17" ><circle cx="8" cy="9" r="6.500" fill="none" stroke="#e4e6ea" stroke-width="1.300"/><path d="M8 9H17M8 9L14 2" stroke="#e4e6ea" stroke-width="1.200"/></svg>
<svg class="i" style="left:1553.5px;top:1022.5px" width="7" height="4" viewBox="0 0 7 4" ><path d="M0 0H7L3.5 4Z" fill="#d5d8dd"/></svg>
<svg class="i" style="left:1568px;top:1015px" width="18" height="19" viewBox="0 0 18 19" ><path d="M9 0V19" stroke="#5ad0a0" stroke-width="1.200"/><path d="M2 2L16 17" stroke="#e34a5c" stroke-width="1.200"/><rect x="7.500" y="8.500" width="3" height="3" fill="none" stroke="#e4e6ea" stroke-width="1"/></svg>
<svg class="i" style="left:1593.5px;top:1022.5px" width="7" height="4" viewBox="0 0 7 4" ><path d="M0 0H7L3.5 4Z" fill="#d5d8dd"/></svg>
<div class="r" style="left:1607px;top:1013px;width:22px;height:23px;background:#4a7fc0;"></div>
<svg class="i" style="left:1610px;top:1016px" width="16" height="17" viewBox="0 0 16 17" ><path d="M1 15H15M1 15L13 3" fill="none" stroke="#fff" stroke-width="1.400"/><rect x="6" y="7" width="3" height="3" fill="#fff"/></svg>
<div class="r" style="left:1631px;top:1013px;width:22px;height:23px;background:#4a7fc0;"></div>
<svg class="i" style="left:1634px;top:1016px" width="16" height="17" viewBox="0 0 16 17" ><rect x="3" y="4" width="12" height="12" fill="none" stroke="#fff" stroke-width="1.400"/><rect x="0.500" y="1.500" width="5" height="5" fill="#4a7fc0" stroke="#fff" stroke-width="1.200"/></svg>
<svg class="i" style="left:1658.5px;top:1022.5px" width="7" height="4" viewBox="0 0 7 4" ><path d="M0 0H7L3.5 4Z" fill="#d5d8dd"/></svg>
<div class="r" style="left:1671px;top:1012px;width:1px;height:25px;background:#39414f;"></div>
<svg class="i" style="left:1677px;top:1016px" width="17" height="17" viewBox="0 0 17 17" ><rect x="1" y="1" width="15" height="15" fill="none" stroke="#e4e6ea" stroke-width="1.300" stroke-dasharray="4 2.500"/><rect x="5" y="5" width="7" height="7" fill="none" stroke="#e4e6ea" stroke-width="1.200"/></svg>
<svg class="i" style="left:1700px;top:1015px" width="18" height="18" viewBox="0 0 18 18" ><path d="M7 1L10 13 7 10 1 17 5 9 2 8Z" fill="#e4e6ea"/><path d="M7 1L12 17 8 12" fill="#e4e6ea"/><circle cx="14.500" cy="4" r="2.300" fill="none" stroke="#e4e6ea" stroke-width="1.100"/></svg>
<svg class="i" style="left:1724px;top:1015px" width="18" height="18" viewBox="0 0 18 18" ><path d="M7 1L10 13 7 10 1 17 5 9 2 8Z" fill="#e4e6ea"/><path d="M7 1L12 17 8 12" fill="#e4e6ea"/><path d="M15 1L12 6H15L13 10" fill="none" stroke="#e4e6ea" stroke-width="1.100"/></svg>
<div class="r" style="left:1745px;top:1012px;width:1px;height:25px;background:#39414f;"></div>
<svg class="i" style="left:1751px;top:1016px" width="17" height="17" viewBox="0 0 17 17" ><circle cx="8.500" cy="8.500" r="4.500" fill="none" stroke="#e4e6ea" stroke-width="3.500"/><path d="M8.500 0V17M0 8.500H17M2.500 2.500L14.500 14.500M14.500 2.500L2.500 14.500" stroke="#e4e6ea" stroke-width="2.400"/><circle cx="8.500" cy="8.500" r="2.300" fill="#222933"/></svg>
<svg class="i" style="left:1776.5px;top:1022.5px" width="7" height="4" viewBox="0 0 7 4" ><path d="M0 0H7L3.5 4Z" fill="#d5d8dd"/></svg>
<svg class="i" style="left:1792px;top:1015.5px" width="18" height="18" viewBox="0 0 18 18" ><path d="M9 0V18M0 9H18" stroke="#e4e6ea" stroke-width="1.800"/></svg>
<svg class="i" style="left:1819px;top:1016px" width="18" height="17" viewBox="0 0 18 17" ><rect x="1" y="1" width="6" height="6" fill="none" stroke="#e4e6ea" stroke-width="1.200"/><circle cx="13.500" cy="6" r="3" fill="none" stroke="#e4e6ea" stroke-width="1.200"/><path d="M4 16L7.500 10 11 16Z" fill="none" stroke="#e4e6ea" stroke-width="1.200"/></svg>
<svg class="i" style="left:1845px;top:1015px" width="19" height="19" viewBox="0 0 19 19" ><path d="M5 3L11 1 15 7 9 11Z" fill="none" stroke="#4da3e6" stroke-width="1.300"/><rect x="1" y="9" width="7" height="7" fill="#e9b23c"/><path d="M9 13L12 16 18 9" fill="none" stroke="#4fc46a" stroke-width="2.200"/></svg>
<svg class="i" style="left:1871px;top:1017px" width="18" height="15" viewBox="0 0 18 15" ><rect x="0.700" y="0.700" width="16.500" height="13" fill="none" stroke="#e4e6ea" stroke-width="1.300"/><path d="M4 10L8 6.500M10 8L14 4.500" stroke="#e4e6ea" stroke-width="1.200"/><path d="M3.500 7.500V10.500H6.500M14.500 7V4H11.500" fill="none" stroke="#e4e6ea" stroke-width="1.200"/></svg>
<svg class="i" style="left:1897px;top:1017px" width="18" height="15" viewBox="0 0 18 15" ><path d="M0 1.500H17M0 7.500H17M0 13.500H17" stroke="#e4e6ea" stroke-width="1.800"/></svg>
<div class="r" style="left:0px;top:1040px;width:1920px;height:40px;background:#1c1d21;"></div>
<svg class="i" style="left:16px;top:1052px" width="17" height="17" viewBox="0 0 17 17" ><path d="M0 2.300L7 1.300V8H0ZM8 1.200L17 0V8H8ZM0 9H7V15.700L0 14.700ZM8 9H17V17L8 15.800Z" fill="#fff"/></svg>
<div class="r" style="left:48px;top:1040px;width:288px;height:40px;background:#f2f2f2;"></div>
<svg class="i" style="left:59px;top:1051px" width="18" height="18" viewBox="0 0 18 18" ><circle cx="10.500" cy="7" r="5.500" fill="none" stroke="#222" stroke-width="1.400"/><path d="M6.500 11L1 17" stroke="#222" stroke-width="1.600"/></svg>
<div class="t" style="left:88.0px;top:1051.0px;font-size:15px;line-height:19px;color:#2b2b2b;letter-spacing:-0.21px;">Ara</div>
<svg class="i" style="left:258px;top:1042px" width="78" height="38" viewBox="0 0 78 38" ><defs><radialGradient id="sky" cx="0.550" cy="0.450" r="0.600"><stop offset="0" stop-color="#dfeef5"/><stop offset="0.700" stop-color="#e7eef0"/><stop offset="1" stop-color="#f2f2f2"/></radialGradient></defs><ellipse cx="42" cy="18" rx="36" ry="18" fill="url(#sky)"/><ellipse cx="30" cy="32" rx="22" ry="8" fill="#f0dc7a"/><path d="M0 38Q6 29 16 33Q26 28 36 33Q48 28 58 33Q68 30 76 38Z" fill="#6fa83a"/><path d="M2 38Q10 33 20 36Q34 32 46 36Q60 33 74 38Z" fill="#4f8a2a"/><path d="M8 24Q12 10 24 8Q32 6 36 12L30 26Q22 18 16 24Q12 22 8 24Z" fill="#8a6a4a"/><path d="M40 12Q48 2 52 2Q60 8 62 22Q56 18 50 22Q46 16 40 18Z" fill="#7a5a40"/><ellipse cx="38" cy="17" rx="9" ry="6.500" fill="#9a8a7a"/><ellipse cx="33" cy="14" rx="4.500" ry="4" fill="#8a7a6a"/><path d="M36 21Q40 25 46 21L44 19H38Z" fill="#e8a23a"/><ellipse cx="44" cy="27" rx="4.500" ry="3.500" fill="#6a5a4a"/><ellipse cx="51" cy="30" rx="4" ry="3" fill="#5a4a3a"/></svg>
<svg class="i" style="left:351px;top:1047.5px" width="25" height="25" viewBox="0 0 25 25" ><circle cx="12.500" cy="12.500" r="12" fill="#e33b2e"/><path d="M12.500 12.500L2.100 6.500A12 12 0 0 0 9.500 24.100Z" fill="#2da94f"/><path d="M12.500 12.500L9.500 24.100A12 12 0 0 0 23.900 8.500L12.500 8.500Z" fill="#fbc116"/><path d="M12.500 6.500H23A12 12 0 0 0 2.100 6.500Z" fill="#e33b2e"/><circle cx="12.500" cy="12.500" r="5.600" fill="#fff"/><circle cx="12.500" cy="12.500" r="4.500" fill="#1a73e8"/></svg>
<div class="r" style="left:343px;top:1078px;width:40px;height:2px;background:#76b9ed;"></div>
<svg class="i" style="left:398px;top:1047px" width="27" height="27" viewBox="0 0 27 27" ><ellipse cx="12" cy="16" rx="11.500" ry="9.500" fill="#e8eef4" stroke="#9ab0c4" stroke-width="1"/><circle cx="6" cy="14" r="2" fill="#e34a4a"/><circle cx="10" cy="10.500" r="2" fill="#f4c13a"/><circle cx="15.500" cy="10.500" r="2" fill="#4fc46a"/><circle cx="7" cy="19.500" r="2" fill="#3fa0e3"/><ellipse cx="17" cy="19" rx="3" ry="2.500" fill="#1c1d21"/><path d="M13 22L22 4 24.500 5.500 15.500 23.500Z" fill="#d89a5a"/><path d="M22 4L24 0.500 26 1.500 24.500 5.500Z" fill="#e8733a"/></svg>
<div class="r" style="left:392px;top:1078px;width:38px;height:2px;background:#76b9ed;"></div>
<div class="r" style="left:437px;top:1040px;width:47px;height:40px;background:#3b3b3f;"></div>
<svg class="i" style="left:449px;top:1048px" width="24" height="24" viewBox="0 0 24 24" ><path d="M3 1H21Q23 1 23 3V17L19 23H3Q1 23 1 21V3Q1 1 3 1Z" fill="#d4213d"/><path d="M1 17H23L19 23H3Q1 23 1 21Z" fill="#8f1228"/><text x="12" y="13" font-family="Liberation Sans,sans-serif" font-weight="bold" font-size="12" fill="#fff" text-anchor="middle">A</text><text x="11" y="21" font-family="Liberation Sans,sans-serif" font-weight="bold" font-size="5" fill="#fff" text-anchor="middle">CAD</text></svg>
<div class="r" style="left:437px;top:1078px;width:47px;height:2px;background:#76b9ed;"></div>
<svg class="i" style="left:1758px;top:1055px" width="14" height="9" viewBox="0 0 14 9" ><path d="M1 8L7 1.500 13 8" fill="none" stroke="#fff" stroke-width="1.300"/></svg>
<svg class="i" style="left:1781px;top:1052px" width="17" height="16" viewBox="0 0 17 16" ><path d="M1 5.500H4L8 2V14L4 10.500H1Z" fill="none" stroke="#fff" stroke-width="1.200"/><path d="M10.500 5.500Q12 8 10.500 10.500M12.800 3.500Q15.500 8 12.800 12.500" fill="none" stroke="#fff" stroke-width="1.100"/><path d="M15 2Q18 8 15 14" fill="none" stroke="#8a8d92" stroke-width="1"/></svg>
<div class="t" style="left:1820.0px;top:1043.0px;font-size:12px;line-height:16px;color:#fff;letter-spacing:-0.67px;">01:35</div>
<div class="t" style="left:1807.7px;top:1061.0px;font-size:12px;line-height:16px;color:#fff;letter-spacing:-0.71px;">17.04.2026</div>
<svg class="i" style="left:1878px;top:1052px" width="18" height="17" viewBox="0 0 18 17" ><path d="M1 1H17V12H11L9 15 7 12H1Z" fill="none" stroke="#fff" stroke-width="1.300"/></svg>
</body></html>
